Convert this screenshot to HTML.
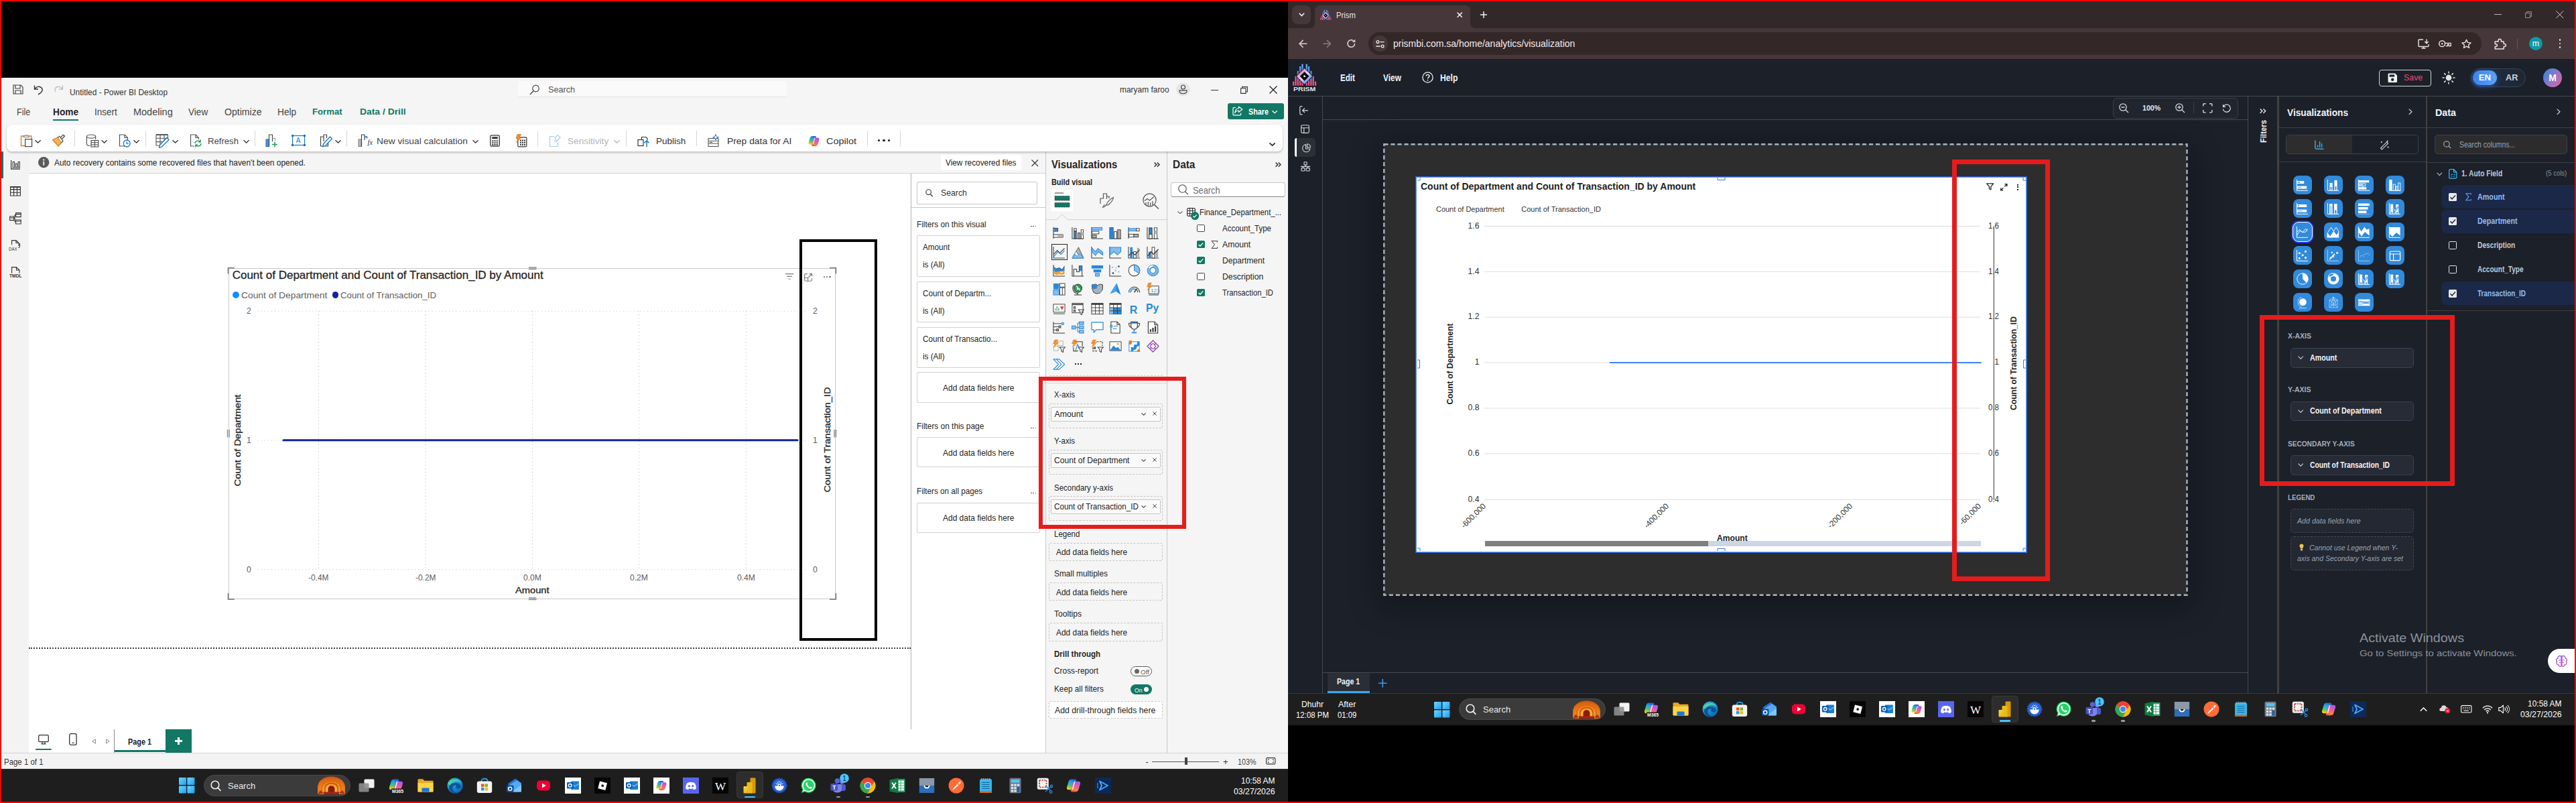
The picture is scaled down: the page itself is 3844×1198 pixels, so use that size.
<!DOCTYPE html>
<html><head><meta charset="utf-8"><title>Power BI vs Prism</title>
<style>
html,body{margin:0;padding:0;background:#000;}
body{width:3844px;height:1198px;position:relative;overflow:hidden;font-family:"Liberation Sans",sans-serif;}
.a{position:absolute;box-sizing:border-box;display:block;}
.t{position:absolute;white-space:nowrap;transform-origin:0 50%;display:block;}
svg{overflow:visible}
</style></head><body>
<div class="a" style="left:0.0px;top:0.0px;width:3844.0px;height:1198.0px;background:#000;"></div>
<div class="a" style="left:2.0px;top:116.0px;width:1920.0px;height:1031.0px;background:#f5f5f5;"></div>
<svg class="a" style="left:18.5px;top:126.0px;" width="16.0" height="15.0" viewBox="0 0 16 15"><path d="M1 1 H12 L15 4 V14 H1 Z M4 1 V6 H11 V1 M4 14 V9 H12 V14" fill="none" stroke="#444" stroke-width="1.2"/></svg>
<svg class="a" style="left:49.5px;top:125.5px;" width="15.0" height="16.0" viewBox="0 0 15 16"><path d="M1.5 1.5 V7 H7 M1.8 6.8 C4 3 9 2 12 5 C15 8.5 12 12.5 7 15" fill="none" stroke="#333" stroke-width="1.4"/></svg>
<svg class="a" style="left:79.5px;top:125.5px;" width="15.0" height="16.0" viewBox="0 0 15 16"><path d="M13.5 1.5 V7 H8 M13.2 6.8 C11 3 6 2 3 5 C1.5 6.8 1.5 9 3 11" fill="none" stroke="#bdbdbd" stroke-width="1.3"/></svg>
<span class="t" style="left:104.2px;top:130.5px;font-size:13px;line-height:13px;color:#333;transform:scaleX(0.915);">Untitled - Power BI Desktop</span>
<div class="a" style="left:772.5px;top:121.0px;width:401.0px;height:24.0px;background:#fafafa;border-radius:3px;border-bottom:1px solid #e3e3e3;"></div>
<svg class="a" style="left:789.5px;top:125.5px;" width="16.0" height="16.0" viewBox="0 0 16 16"><circle cx="9.5" cy="6" r="4.8" fill="none" stroke="#444" stroke-width="1.2"/><path d="M6 9.5 L1 15" stroke="#444" stroke-width="1.3"/></svg>
<span class="t" style="left:818.0px;top:126.9px;font-size:13.5px;line-height:13.5px;color:#555;transform:scaleX(0.935);">Search</span>
<span class="t" style="left:1671.0px;top:128.4px;font-size:12.5px;line-height:12.5px;color:#333;transform:scaleX(0.955);">maryam faroo</span>
<svg class="a" style="left:1754.6px;top:122.6px;" width="21.0" height="21.0" viewBox="0 0 21 21"><circle cx="10.5" cy="10.5" r="10.3" fill="#e6e6e6"/><circle cx="10.5" cy="7" r="3" fill="none" stroke="#444" stroke-width="1.15"/><path d="M5 11.8 H16 V12.8 C16 18 5 18 5 12.8 Z" fill="none" stroke="#444" stroke-width="1.15"/></svg>
<div class="a" style="left:1806.5px;top:133.5px;width:11.0px;height:1.2px;background:#333;"></div>
<svg class="a" style="left:1851.0px;top:129.0px;" width="11.0" height="11.0" viewBox="0 0 11 11"><path d="M0.6 2.8 H8 V10.4 H0.6 Z M2.6 2.6 V0.6 H10.4 V8 H8.2" fill="none" stroke="#333" stroke-width="1.1"/></svg>
<svg class="a" style="left:1894.0px;top:128.0px;" width="12.0" height="12.0" viewBox="0 0 12 12"><path d="M0.5 0.5 L11.5 11.5 M11.5 0.5 L0.5 11.5" stroke="#222" stroke-width="1.3"/></svg>
<span class="t" style="left:25.0px;top:159.7px;font-size:14px;line-height:14px;color:#444;transform:scaleX(0.900);">File</span>
<span class="t" style="left:79.0px;top:159.7px;font-size:14px;line-height:14px;color:#222;font-weight:700;transform:scaleX(0.977);">Home</span>
<div class="a" style="left:79.0px;top:177.6px;width:38.0px;height:2.2px;background:#117865;"></div>
<span class="t" style="left:140.5px;top:159.7px;font-size:14px;line-height:14px;color:#444;transform:scaleX(0.965);">Insert</span>
<span class="t" style="left:198.8px;top:159.7px;font-size:14px;line-height:14px;color:#444;transform:scaleX(1.033);">Modeling</span>
<span class="t" style="left:281.4px;top:159.7px;font-size:14px;line-height:14px;color:#444;transform:scaleX(0.970);">View</span>
<span class="t" style="left:334.6px;top:159.7px;font-size:14px;line-height:14px;color:#444;transform:scaleX(1.007);">Optimize</span>
<span class="t" style="left:414.0px;top:159.7px;font-size:14px;line-height:14px;color:#444;transform:scaleX(0.979);">Help</span>
<span class="t" style="left:465.5px;top:159.9px;font-size:13.6px;line-height:13.6px;color:#117865;font-weight:700;transform:scaleX(0.970);">Format</span>
<span class="t" style="left:536.5px;top:159.9px;font-size:13.6px;line-height:13.6px;color:#117865;font-weight:700;transform:scaleX(1.021);">Data / Drill</span>
<div class="a" style="left:1832.0px;top:154.0px;width:84.0px;height:24.0px;background:#117865;border-radius:3px;"></div>
<svg class="a" style="left:1839.0px;top:158.0px;" width="16.0" height="15.0" viewBox="0 0 16 15"><path d="M5 2.5 H2 C1.2 2.5 1 3 1 3.5 V12.5 C1 13.3 1.5 13.8 2.2 13.8 H11.5 C12.3 13.8 12.7 13.3 12.7 12.5 V10.5" fill="none" stroke="#fff" stroke-width="1.2"/><path d="M9.5 1 L14.8 5.2 L9.5 9.4 V7 C6.5 7 5 8 3.8 10.5 C4 6.5 6 3.8 9.5 3.5 Z" fill="none" stroke="#fff" stroke-width="1.2" stroke-linejoin="round"/></svg>
<span class="t" style="left:1863.0px;top:160.2px;font-size:13.5px;line-height:13.5px;color:#fff;font-weight:700;transform:scaleX(0.800);">Share</span>
<svg class="a" style="left:1898.3px;top:164.9px;" width="8.4" height="4.2" viewBox="0 0 8.4 4.2"><path d="M0.5 0.3 L4.2 3.7 L7.9 0.3" fill="none" stroke="#fff" stroke-width="1.3"/></svg>
<div class="a" style="left:43.0px;top:226.3px;width:1879.0px;height:32.0px;background:#f5f5f5;"></div>
<div class="a" style="left:43.0px;top:258.0px;width:1879.0px;height:1.0px;background:#d4d4d4;"></div>
<svg class="a" style="left:56.8px;top:234.3px;" width="16.4" height="16.4" viewBox="0 0 16.4 16.4"><circle cx="8.2" cy="8.2" r="8.2" fill="#5a5a5a"/><rect x="7.3" y="6.8" width="1.9" height="6" fill="#e8e8e8"/><circle cx="8.2" cy="4.4" r="1.2" fill="#e8e8e8"/></svg>
<span class="t" style="left:81.3px;top:237.2px;font-size:12.3px;line-height:12.3px;color:#222;transform:scaleX(0.968);">Auto recovery contains some recovered files that haven&#x27;t been opened.</span>
<div class="a" style="left:1403.7px;top:231.0px;width:120.5px;height:23.3px;background:#fff;border-radius:2px;"></div>
<span class="t" style="left:1410.7px;top:237.2px;font-size:12.3px;line-height:12.3px;color:#222;transform:scaleX(0.961);">View recovered files</span>
<svg class="a" style="left:1539.0px;top:237.5px;" width="10.5" height="10.5" viewBox="0 0 10.5 10.5"><path d="M0.5 0.5 L10 10 M10 0.5 L0.5 10" stroke="#333" stroke-width="1.1"/></svg>
<div class="a" style="left:2.0px;top:226.3px;width:41.0px;height:897.0px;background:#f3f3f3;"></div>
<div class="a" style="left:2.0px;top:226.3px;width:3.0px;height:39.5px;background:#117865;"></div>
<svg class="a" style="left:16.0px;top:239.3px;" width="14.0" height="14.0" viewBox="0 0 14 14"><path d="M0.6 0 V13.2 H14" fill="none" stroke="#333" stroke-width="1.2"/><rect x="3.2" y="2.5" width="2.4" height="8.5" fill="none" stroke="#333" stroke-width="1"/><rect x="7.3" y="5.2" width="2.4" height="5.8" fill="none" stroke="#333" stroke-width="1"/><rect x="11.2" y="2.5" width="2.2" height="8.5" fill="none" stroke="#333" stroke-width="1"/></svg>
<svg class="a" style="left:15.4px;top:277.8px;" width="16.0" height="14.6" viewBox="0 0 16 14.6"><path d="M0.6 0.6 H15.4 V14 H0.6 Z M0.6 4.6 H15.4 M0.6 9.3 H15.4 M5.6 0.6 V14 M10.5 0.6 V14" fill="none" stroke="#333" stroke-width="1.15"/><path d="M0.6 1 H15.4" stroke="#333" stroke-width="1.6"/></svg>
<svg class="a" style="left:14.2px;top:317.0px;" width="18.0" height="17.6" viewBox="0 0 18 17.6"><path d="M0.6 6 H6.6 V11.6 H0.6 Z M0.6 8 H6.6 M9.6 0.6 H17.2 V6.6 H9.6 Z M9.6 2.6 H17.2 M9.6 11 H17.2 V17 H9.6 Z M9.6 13 H17.2 M6.6 8.8 H8 M8 3.6 V14 M8 3.6 H9.6 M8 14 H9.6" fill="none" stroke="#333" stroke-width="1.1"/></svg>
<svg class="a" style="left:17.0px;top:358.0px;" width="13.5" height="12.0" viewBox="0 0 13.5 12"><path d="M0.6 7 V0.6 H7 L11 4.5 V9 M7 0.6 V4.5 H11 M12.5 5 V9.5 C12.5 10.8 11.5 11.5 10.5 11.8" fill="none" stroke="#333" stroke-width="1.1"/></svg>
<span class="t" style="left:13.0px;top:369.0px;font-size:6.3px;line-height:6.3px;color:#333;transform:scaleX(0.965);">DAX</span>
<svg class="a" style="left:17.2px;top:398.0px;" width="13.0" height="10.0" viewBox="0 0 13 10"><path d="M0.6 9.5 V0.6 H7.5 L12 5 V9.5 M7.5 0.6 V5 H12" fill="none" stroke="#333" stroke-width="1.1"/></svg>
<span class="t" style="left:13.7px;top:408.9px;font-size:6.5px;line-height:6.5px;color:#333;font-weight:700;transform:scaleX(1.036);">TMDL</span>
<div class="a" style="left:43.0px;top:258.6px;width:1316.5px;height:829.4px;background:#fff;"></div>
<div class="a" style="left:43px;top:966px;width:1316px;height:0;border-top:2px dotted #3c3c3c;"></div>
<div class="a" style="left:340.5px;top:400.0px;width:906.5px;height:493.5px;background:#fff;border:1px solid #c8c8c8;"></div>
<span class="t" style="left:346.7px;top:402.3px;font-size:17px;line-height:17px;color:#252423;-webkit-text-stroke:0.28px #252423;">Count of Department and Count of Transaction_ID by Amount</span>
<div class="a" style="left:347.4px;top:435.2px;width:9.6px;height:9.6px;background:#118dff;border-radius:5px;"></div>
<span class="t" style="left:360.0px;top:434.2px;font-size:13.2px;line-height:13.2px;color:#605e5c;transform:scaleX(1.048);">Count of Department</span>
<div class="a" style="left:495.7px;top:435.2px;width:9.6px;height:9.6px;background:#12239e;border-radius:5px;"></div>
<span class="t" style="left:507.8px;top:434.2px;font-size:13.2px;line-height:13.2px;color:#605e5c;transform:scaleX(1.006);">Count of Transaction_ID</span>
<svg class="a" style="left:0.0px;top:0.0px;" width="1922.0" height="1198.0" viewBox="0 0 1922 1198"><path d="M384.5 464.2 H1204" stroke="#c4c4c4" stroke-width="1.1" stroke-dasharray="1.1 4"/><path d="M384.5 657 H1204" stroke="#c4c4c4" stroke-width="1.1" stroke-dasharray="1.1 4"/><path d="M384.5 849.8 H1204" stroke="#c4c4c4" stroke-width="1.1" stroke-dasharray="1.1 4"/><path d="M475.5 464.2 V849.8" stroke="#c4c4c4" stroke-width="1.1" stroke-dasharray="1.1 4"/><path d="M635 464.2 V849.8" stroke="#c4c4c4" stroke-width="1.1" stroke-dasharray="1.1 4"/><path d="M794.6 464.2 V849.8" stroke="#c4c4c4" stroke-width="1.1" stroke-dasharray="1.1 4"/><path d="M953.9 464.2 V849.8" stroke="#c4c4c4" stroke-width="1.1" stroke-dasharray="1.1 4"/><path d="M1113.4 464.2 V849.8" stroke="#c4c4c4" stroke-width="1.1" stroke-dasharray="1.1 4"/><path d="M423 656.8 H1190" stroke="#12239e" stroke-width="3" stroke-linecap="round"/></svg>
<span class="t" style="left:368.0px;top:458.3px;font-size:12.2px;line-height:12.2px;color:#605e5c;">2</span>
<span class="t" style="left:1213.0px;top:458.3px;font-size:12.2px;line-height:12.2px;color:#605e5c;">2</span>
<span class="t" style="left:368.0px;top:651.3px;font-size:12.2px;line-height:12.2px;color:#605e5c;">1</span>
<span class="t" style="left:1213.0px;top:651.3px;font-size:12.2px;line-height:12.2px;color:#605e5c;">1</span>
<span class="t" style="left:368.0px;top:844.3px;font-size:12.2px;line-height:12.2px;color:#605e5c;">0</span>
<span class="t" style="left:1213.0px;top:844.3px;font-size:12.2px;line-height:12.2px;color:#605e5c;">0</span>
<span class="t" style="left:460.2px;top:856.2px;font-size:12.2px;line-height:12.2px;color:#605e5c;transform:scaleX(0.978);">-0.4M</span>
<span class="t" style="left:619.8px;top:856.2px;font-size:12.2px;line-height:12.2px;color:#605e5c;transform:scaleX(0.978);">-0.2M</span>
<span class="t" style="left:781.1px;top:856.2px;font-size:12.2px;line-height:12.2px;color:#605e5c;transform:scaleX(0.995);">0.0M</span>
<span class="t" style="left:940.4px;top:856.2px;font-size:12.2px;line-height:12.2px;color:#605e5c;transform:scaleX(0.995);">0.2M</span>
<span class="t" style="left:1099.9px;top:856.2px;font-size:12.2px;line-height:12.2px;color:#605e5c;transform:scaleX(0.995);">0.4M</span>
<span class="t" style="left:768.6px;top:874.3px;font-size:13.6px;line-height:13.6px;color:#252423;transform:scaleX(1.080);-webkit-text-stroke:0.3px #252423;">Amount</span>
<span class="t" style="left:355.3px;top:656.5px;font-size:13.4px;line-height:13.4px;color:#252423;transform:translate(-50%,-50%) rotate(-90deg) scaleX(1.101);transform-origin:50% 50%;-webkit-text-stroke:0.3px #252423;">Count of Department</span>
<span class="t" style="left:1235.0px;top:656.0px;font-size:13.4px;line-height:13.4px;color:#252423;transform:translate(-50%,-50%) rotate(-90deg) scaleX(1.086);transform-origin:50% 50%;-webkit-text-stroke:0.3px #252423;">Count of Transaction_ID</span>
<svg class="a" style="left:1172.0px;top:408.3px;" width="12.2" height="9.0" viewBox="0 0 12.2 9"><path d="M0 0.6 H12.2 M2.4 4.4 H9.8 M4.6 8.3 H7.6" stroke="#777" stroke-width="1.1"/></svg>
<svg class="a" style="left:1200.0px;top:408.3px;" width="12.2" height="11.8" viewBox="0 0 12.2 11.8"><path d="M5 0.6 H2.4 C1.2 0.6 0.6 1.4 0.6 2.4 V9.6 C0.6 10.8 1.4 11.2 2.4 11.2 H9.8 C10.8 11.2 11.6 10.6 11.6 9.6 V7 M0.6 6.5 H5.6 V11.2 M7.5 0.6 H11.6 V4.6 M11.6 0.6 L6.2 6" fill="none" stroke="#777" stroke-width="1.1"/></svg>
<div class="a" style="left:1228.8px;top:412.0px;width:2.4px;height:2.4px;background:#666;border-radius:1.2px;"></div>
<div class="a" style="left:1233.0px;top:412.0px;width:2.4px;height:2.4px;background:#666;border-radius:1.2px;"></div>
<div class="a" style="left:1237.2px;top:412.0px;width:2.4px;height:2.4px;background:#666;border-radius:1.2px;"></div>
<svg class="a" style="left:0.0px;top:0.0px;" width="1922.0" height="1198.0" viewBox="0 0 1922 1198"><path d="M340.6 408.5 V399.8 H349.8 M1238 399.8 H1247.3 V408.5 M340.6 885 V894 H349.8 M1238 894 H1247.3 V885" fill="none" stroke="#8a8a8a" stroke-width="2"/><path d="M789 399 H800.5 M789 401.5 H800.5 M789 892 H800.5 M789 894.5 H800.5 M339.5 641 V652.5 M342 641 V652.5 M1245 641 V652.5 M1247.5 641 V652.5" stroke="#8a8a8a" stroke-width="1.4"/></svg>
<div class="a" style="left:1193.0px;top:357.3px;width:115.8px;height:599.0px;border:4px solid #000;"></div>
<div class="a" style="left:43.0px;top:1088.0px;width:1517.5px;height:35.3px;background:#fff;"></div>
<svg class="a" style="left:57.0px;top:1096.0px;" width="16.0" height="15.0" viewBox="0 0 16 15"><rect x="0.7" y="0.7" width="14.6" height="10" rx="1.6" fill="none" stroke="#333" stroke-width="1.3"/><path d="M4.5 13.8 H11.5 M6 11 V13.5 M10 11 V13.5" stroke="#333" stroke-width="1.2"/></svg>
<div class="a" style="left:53.0px;top:1116.6px;width:24.0px;height:2.6px;background:#117865;border-radius:1.3px;"></div>
<svg class="a" style="left:103.2px;top:1094.0px;" width="12.0" height="18.0" viewBox="0 0 12 18"><rect x="0.7" y="0.7" width="10.4" height="16.6" rx="2.2" fill="none" stroke="#333" stroke-width="1.3"/><path d="M4.4 14.3 H7.6" stroke="#333" stroke-width="1.2"/></svg>
<svg class="a" style="left:136.6px;top:1102.3px;" width="6.0" height="8.0" viewBox="0 0 6 8"><path d="M5.4 0.8 V7.2 L0.8 4 Z" fill="none" stroke="#777" stroke-width="0.9"/></svg>
<svg class="a" style="left:157.6px;top:1102.3px;" width="6.0" height="8.0" viewBox="0 0 6 8"><path d="M0.6 0.8 V7.2 L5.2 4 Z" fill="none" stroke="#777" stroke-width="0.9"/></svg>
<div class="a" style="left:170.0px;top:1088.0px;width:1.0px;height:35.0px;background:#8a8a8a;"></div>
<div class="a" style="left:170.5px;top:1119.3px;width:76.0px;height:3.2px;background:#117865;"></div>
<span class="t" style="left:191.0px;top:1101.0px;font-size:12.6px;line-height:12.6px;color:#222;font-weight:700;transform:scaleX(0.862);">Page 1</span>
<div class="a" style="left:247.0px;top:1088.3px;width:39.2px;height:34.4px;background:#117865;"></div>
<div class="a" style="left:260.7px;top:1104.1px;width:11.6px;height:2.6px;background:#fff;"></div>
<div class="a" style="left:265.2px;top:1099.6px;width:2.6px;height:11.6px;background:#fff;"></div>
<div class="a" style="left:2.0px;top:1123.3px;width:1920.0px;height:24.0px;background:#f3f3f3;border-top:1px solid #d4d4d4;"></div>
<span class="t" style="left:6.2px;top:1131.0px;font-size:12.4px;line-height:12.4px;color:#333;transform:scaleX(0.924);">Page 1 of 1</span>
<span class="t" style="left:1709.5px;top:1129.8px;font-size:13px;line-height:13px;color:#333;">-</span>
<div class="a" style="left:1719.0px;top:1135.7px;width:100.0px;height:1.0px;background:#555;"></div>
<div class="a" style="left:1768.0px;top:1129.8px;width:3.6px;height:11.0px;background:#444;"></div>
<span class="t" style="left:1825.0px;top:1130.1px;font-size:13px;line-height:13px;color:#333;transform:scaleX(1.014);">+</span>
<span class="t" style="left:1847.0px;top:1130.6px;font-size:12.4px;line-height:12.4px;color:#444;transform:scaleX(0.870);">103%</span>
<svg class="a" style="left:1889.0px;top:1130.3px;" width="14.5" height="10.5" viewBox="0 0 14.5 10.5"><rect x="0.6" y="0.6" width="13.3" height="9.3" rx="1.5" fill="none" stroke="#333" stroke-width="1.1"/><path d="M3.2 4.4 V3 H4.8 M9.8 3 H11.3 V4.4 M3.2 6.2 V7.6 H4.8 M9.8 7.6 H11.3 V6.2" fill="none" stroke="#333" stroke-width="1"/></svg>
<div class="a" style="left:1358.6px;top:258.6px;width:202.0px;height:829.4px;background:#fff;border-left:1px solid #b0b0b0;"></div>
<div class="a" style="left:1368.0px;top:271.3px;width:180.2px;height:33.6px;background:#fff;border:1px solid #c8c8c8;border-radius:2px;"></div>
<svg class="a" style="left:1381.0px;top:282.0px;" width="12.0" height="12.5" viewBox="0 0 12 12.5"><circle cx="4.6" cy="4.6" r="3.8" fill="none" stroke="#333" stroke-width="1.1"/><path d="M7.2 7.4 L10.8 11.2" stroke="#333" stroke-width="1.3"/></svg>
<span class="t" style="left:1403.7px;top:282.4px;font-size:12.8px;line-height:12.8px;color:#333;transform:scaleX(0.959);">Search</span>
<div class="a" style="left:1359.6px;top:309.2px;width:201.0px;height:1.0px;background:#c8c8c8;"></div>
<span class="t" style="left:1368.0px;top:328.8px;font-size:12.6px;line-height:12.6px;color:#252423;transform:scaleX(0.937);">Filters on this visual</span>
<div class="a" style="left:1538.0px;top:336.8px;width:1.5px;height:1.5px;background:#555;"></div>
<div class="a" style="left:1541.4px;top:336.8px;width:1.5px;height:1.5px;background:#555;"></div>
<div class="a" style="left:1544.8px;top:336.8px;width:1.5px;height:1.5px;background:#555;"></div>
<div class="a" style="left:1368.0px;top:351.2px;width:183.6px;height:61.4px;background:#fff;border:1px solid #d2d0ce;border-radius:2px;"></div>
<span class="t" style="left:1377.0px;top:363.2px;font-size:12.6px;line-height:12.6px;color:#252423;transform:scaleX(0.930);">Amount</span>
<span class="t" style="left:1377.0px;top:389.2px;font-size:12.6px;line-height:12.6px;color:#252423;transform:scaleX(0.930);">is (All)</span>
<div class="a" style="left:1368.0px;top:419.6px;width:183.6px;height:61.0px;background:#fff;border:1px solid #d2d0ce;border-radius:2px;"></div>
<span class="t" style="left:1377.0px;top:431.6px;font-size:12.6px;line-height:12.6px;color:#252423;transform:scaleX(0.930);">Count of Departm...</span>
<span class="t" style="left:1377.0px;top:457.6px;font-size:12.6px;line-height:12.6px;color:#252423;transform:scaleX(0.930);">is (All)</span>
<div class="a" style="left:1368.0px;top:487.5px;width:183.6px;height:61.0px;background:#fff;border:1px solid #d2d0ce;border-radius:2px;"></div>
<span class="t" style="left:1377.0px;top:499.5px;font-size:12.6px;line-height:12.6px;color:#252423;transform:scaleX(0.930);">Count of Transactio...</span>
<span class="t" style="left:1377.0px;top:525.5px;font-size:12.6px;line-height:12.6px;color:#252423;transform:scaleX(0.930);">is (All)</span>
<div class="a" style="left:1368.0px;top:555.4px;width:183.6px;height:45.4px;background:#fff;border:1px solid #d2d0ce;border-radius:2px;"></div>
<span class="t" style="left:1406.8px;top:573.2px;font-size:12.6px;line-height:12.6px;color:#252423;transform:scaleX(0.950);">Add data fields here</span>
<span class="t" style="left:1368.0px;top:630.0px;font-size:12.6px;line-height:12.6px;color:#252423;transform:scaleX(0.942);">Filters on this page</span>
<div class="a" style="left:1538.0px;top:637.8px;width:1.5px;height:1.5px;background:#555;"></div>
<div class="a" style="left:1541.4px;top:637.8px;width:1.5px;height:1.5px;background:#555;"></div>
<div class="a" style="left:1544.8px;top:637.8px;width:1.5px;height:1.5px;background:#555;"></div>
<div class="a" style="left:1368.0px;top:652.4px;width:183.6px;height:45.0px;background:#fff;border:1px solid #d2d0ce;border-radius:2px;"></div>
<span class="t" style="left:1406.8px;top:670.0px;font-size:12.6px;line-height:12.6px;color:#252423;transform:scaleX(0.950);">Add data fields here</span>
<span class="t" style="left:1368.0px;top:726.9px;font-size:12.6px;line-height:12.6px;color:#252423;transform:scaleX(0.929);">Filters on all pages</span>
<div class="a" style="left:1538.0px;top:734.8px;width:1.5px;height:1.5px;background:#555;"></div>
<div class="a" style="left:1541.4px;top:734.8px;width:1.5px;height:1.5px;background:#555;"></div>
<div class="a" style="left:1544.8px;top:734.8px;width:1.5px;height:1.5px;background:#555;"></div>
<div class="a" style="left:1368.0px;top:749.5px;width:183.6px;height:45.0px;background:#fff;border:1px solid #d2d0ce;border-radius:2px;"></div>
<span class="t" style="left:1406.8px;top:767.1px;font-size:12.6px;line-height:12.6px;color:#252423;transform:scaleX(0.950);">Add data fields here</span>
<div class="a" style="left:1560.0px;top:226.3px;width:182.0px;height:897.0px;background:#f5f5f5;border-left:1px solid #c8c8c8;border-right:1px solid #c8c8c8;"></div>
<span class="t" style="left:1569.4px;top:237.6px;font-size:15.6px;line-height:15.6px;color:#252423;font-weight:700;transform:scaleX(0.948);">Visualizations</span>
<svg class="a" style="left:1722.0px;top:241.7px;" width="9.0" height="7.2" viewBox="0 0 9 7.2"><path d="M0.6 0.5 L3.8 3.6 L0.6 6.7 M4.8 0.5 L8 3.6 L4.8 6.7" fill="none" stroke="#333" stroke-width="1.5"/></svg>
<span class="t" style="left:1569.4px;top:266.4px;font-size:12.4px;line-height:12.4px;color:#252423;font-weight:700;transform:scaleX(0.879);">Build visual</span>
<div class="a" style="left:1569.0px;top:283.2px;width:32.0px;height:31.8px;background:#fff;"></div>
<svg class="a" style="left:1573.0px;top:287.0px;" width="24.0" height="24.0" viewBox="0 0 24 24"><path d="M1 1 H14" stroke="#333" stroke-width="1"/><rect x="1" y="5.5" width="22" height="6.5" fill="#117865" stroke="#333" stroke-width="0.9" stroke-dasharray="1.5 1"/><rect x="1" y="15.5" width="22" height="6.5" fill="#117865" stroke="#333" stroke-width="0.9" stroke-dasharray="1.5 1"/></svg>
<svg class="a" style="left:1640.7px;top:288.0px;" width="23.0" height="23.0" viewBox="0 0 23 23"><path d="M1 16 V8 H5.5 V1 H10.5 V9 M10.5 5 H14 V8" fill="none" stroke="#555" stroke-width="1.2"/><path d="M20.5 6.5 C15 9 11 14 10 17.5 C12 18.5 13.5 17.5 14 16.5 C17 14 20 10.5 20.5 6.5 Z" fill="#f5f5f5" stroke="#555" stroke-width="1.1"/><path d="M10 17.5 C8.5 19 7.5 21.5 4 21.5 C6 20.5 6.5 18.5 7 17" fill="none" stroke="#555" stroke-width="1.1"/></svg>
<svg class="a" style="left:1704.9px;top:288.0px;" width="25.0" height="24.0" viewBox="0 0 25 24"><circle cx="10.5" cy="10.5" r="9.6" fill="none" stroke="#555" stroke-width="1.2"/><path d="M17.5 17.5 L24 23.5" stroke="#555" stroke-width="1.6"/><path d="M3 11.5 L7 8.5 L10.5 11 L17 5.5" fill="none" stroke="#555" stroke-width="1.2"/><path d="M5 14 V18 M8.3 13 V19.3 M11.6 14 V19.6 M14.9 12 V18.6" stroke="#555" stroke-width="1.2"/></svg>
<svg class="a" style="left:1561.0px;top:319.0px;" width="180.0" height="10.0" viewBox="0 0 180 10"><path d="M0 8.7 H16 L24 1 L32 8.7 H180" fill="none" stroke="#d0d0d0" stroke-width="1"/></svg>
<svg class="a" style="left:1571.2px;top:338.3px;" width="19.0" height="19.0" viewBox="0 0 20 20"><path d="M1 1 V19" fill="none" stroke="#3b3a39" stroke-width="1.1"/><rect x="1.5" y="3" width="6" height="4" fill="#2b88d8"/><rect x="1.5" y="8" width="9" height="0.1" fill="#2b88d8"/><path d="M1 2.5 H8 V7.5 H1 M1 12.5 H16 V17 H1" fill="none" stroke="#3b3a39" stroke-width="1"/><rect x="7.5" y="12.5" width="8.5" height="4.5" fill="#b3b0ad"/></svg>
<svg class="a" style="left:1599.2px;top:338.3px;" width="19.0" height="19.0" viewBox="0 0 20 20"><path d="M1 1 V19 H19" fill="none" stroke="#3b3a39" stroke-width="1.1"/><rect x="4" y="7" width="3.5" height="12" fill="#2b88d8" stroke="#3b3a39" stroke-width="1"/><rect x="4" y="3" width="3.5" height="4" fill="#fff" stroke="#3b3a39" stroke-width="1"/><rect x="10" y="10" width="3.5" height="9" fill="#b3b0ad" stroke="#3b3a39" stroke-width="1"/><rect x="15" y="5" width="3.5" height="14" fill="#fff" stroke="#3b3a39" stroke-width="1"/><rect x="15" y="9" width="3.5" height="5" fill="#b3b0ad"/></svg>
<svg class="a" style="left:1627.5px;top:338.3px;" width="19.0" height="19.0" viewBox="0 0 20 20"><path d="M1 1 V19" fill="none" stroke="#3b3a39" stroke-width="1.1"/><rect x="1.5" y="1.5" width="16" height="4" fill="#83beec" stroke="#2b88d8" stroke-width="1"/><rect x="1.5" y="7.5" width="11" height="4" fill="#fff" stroke="#3b3a39" stroke-width="1"/><rect x="1.5" y="13.5" width="7" height="4" fill="#b3b0ad" stroke="#3b3a39" stroke-width="1"/><path d="M1 19 H19" fill="none" stroke="#3b3a39" stroke-width="1.1"/></svg>
<svg class="a" style="left:1655.4px;top:338.3px;" width="19.0" height="19.0" viewBox="0 0 20 20"><path d="M1 1 V19 H19" fill="none" stroke="#3b3a39" stroke-width="1.1"/><rect x="2" y="1.5" width="4.5" height="17.5" fill="#2b88d8" stroke="#1a66c0" stroke-width="1"/><rect x="8" y="8" width="4" height="11" fill="#fff" stroke="#3b3a39" stroke-width="1"/><rect x="13.5" y="5" width="4.5" height="14" fill="#b3b0ad" stroke="#3b3a39" stroke-width="1"/></svg>
<svg class="a" style="left:1683.1px;top:338.3px;" width="19.0" height="19.0" viewBox="0 0 20 20"><path d="M1 1 V19" fill="none" stroke="#3b3a39" stroke-width="1.1"/><rect x="1.5" y="3" width="12" height="4" fill="#83beec" stroke="#2b88d8" stroke-width="1"/><rect x="13.5" y="3" width="4.5" height="4" fill="#fff" stroke="#3b3a39" stroke-width="1"/><rect x="1.5" y="12" width="8" height="4.5" fill="#fff" stroke="#3b3a39" stroke-width="1"/><rect x="9.5" y="12" width="7" height="4.5" fill="#b3b0ad" stroke="#3b3a39" stroke-width="1"/></svg>
<svg class="a" style="left:1711.4px;top:338.3px;" width="19.0" height="19.0" viewBox="0 0 20 20"><path d="M1 1 V19 H19" fill="none" stroke="#3b3a39" stroke-width="1.1"/><rect x="4" y="2" width="4.5" height="17" fill="#2b88d8" stroke="#3b3a39" stroke-width="1"/><rect x="4" y="12" width="4.5" height="7" fill="#fff" stroke="#3b3a39" stroke-width="1"/><rect x="12" y="2" width="4.5" height="17" fill="#fff" stroke="#3b3a39" stroke-width="1"/><rect x="12" y="6" width="4.5" height="6" fill="#b3b0ad"/></svg>
<svg class="a" style="left:1571.2px;top:366.7px;" width="19.0" height="19.0" viewBox="0 0 20 20"><path d="M1 1 V19 H19" fill="none" stroke="#3b3a39" stroke-width="1.1"/><path d="M1.5 13 L7 7 L11 11 L18.5 3.5" fill="none" stroke="#3b3a39" stroke-width="1.2"/><path d="M1.5 17 L8 9 L13 13 L18.5 7" fill="none" stroke="#2b88d8" stroke-width="1.2"/></svg>
<svg class="a" style="left:1599.2px;top:366.7px;" width="19.0" height="19.0" viewBox="0 0 20 20"><path d="M1 19 L11 2 L19 19 Z" fill="#b3b0ad" stroke="#3b3a39" stroke-width="0.8"/><path d="M1 19 L7 8 L14 19 Z" fill="#fff" stroke="#2b88d8" stroke-width="1"/><path d="M1 19 L5 13 L9 16 L13 12 L19 19 Z" fill="#83beec" stroke="#2b88d8" stroke-width="1"/></svg>
<svg class="a" style="left:1627.5px;top:366.7px;" width="19.0" height="19.0" viewBox="0 0 20 20"><path d="M1 1 V19 H19" fill="none" stroke="#3b3a39" stroke-width="1.1"/><path d="M1.5 3 L7 9 L11 4 L18.5 10 V14 L11 9 L7 15 L1.5 9 Z" fill="#83beec" stroke="#2b88d8" stroke-width="1.1"/></svg>
<svg class="a" style="left:1655.4px;top:366.7px;" width="19.0" height="19.0" viewBox="0 0 20 20"><path d="M1 1 V19 H19" fill="none" stroke="#3b3a39" stroke-width="1.1"/><path d="M1.5 2 H18.5 V9 L13 14 L8 9 L1.5 14 Z" fill="#83beec" stroke="#2b88d8" stroke-width="1.1"/></svg>
<svg class="a" style="left:1683.1px;top:366.7px;" width="19.0" height="19.0" viewBox="0 0 20 20"><path d="M1 1 V19 H19" fill="none" stroke="#3b3a39" stroke-width="1.1"/><rect x="3.5" y="2" width="4" height="17" fill="#2b88d8"/><rect x="9" y="9" width="4" height="10" fill="#fff" stroke="#3b3a39" stroke-width="1"/><rect x="14.5" y="3" width="3.5" height="16" fill="#b3b0ad"/><path d="M1.5 15 L7 10 L11 14 L18.5 6" fill="none" stroke="#3b3a39" stroke-width="1.3"/></svg>
<svg class="a" style="left:1711.4px;top:366.7px;" width="19.0" height="19.0" viewBox="0 0 20 20"><path d="M1 1 V19 H19" fill="none" stroke="#3b3a39" stroke-width="1.1"/><rect x="3" y="9" width="4" height="10" fill="#2b88d8"/><rect x="8.5" y="2" width="4" height="17" fill="#fff" stroke="#3b3a39" stroke-width="1"/><rect x="14" y="7" width="4" height="12" fill="#b3b0ad"/><path d="M1.5 16 L7 9 L11 13 L18.5 5" fill="none" stroke="#3b3a39" stroke-width="1.3"/></svg>
<svg class="a" style="left:1571.2px;top:394.4px;" width="19.0" height="19.0" viewBox="0 0 20 20"><path d="M1 1 V19 H19" fill="none" stroke="#3b3a39" stroke-width="1.1"/><path d="M1.5 4 C6 12 9 2 13 8 C15 10 17 5 18.5 3 V10 C15 14 12 9 9 14 C6 17 4 10 1.5 12 Z" fill="#2b88d8"/><path d="M1.5 9 C5 17 9 8 12 13 C15 16 17 10 18.5 9 V15 C14 19 10 14 7 17 C5 18 3 15 1.5 15 Z" fill="#e8a33d"/><path d="M1.5 4 C6 12 9 2 13 8 C15 10 17 5 18.5 3" fill="none" stroke="#3b3a39" stroke-width="1"/></svg>
<svg class="a" style="left:1599.2px;top:394.4px;" width="19.0" height="19.0" viewBox="0 0 20 20"><path d="M1 1 V19 H19" fill="none" stroke="#3b3a39" stroke-width="1.1"/><path d="M3.5 19 V8 H8 V12 H12 V3 H16.5 V19" fill="none" stroke="#3b3a39" stroke-width="1.1"/><rect x="12.5" y="3" width="3.5" height="8" fill="#2b88d8"/></svg>
<svg class="a" style="left:1627.5px;top:394.4px;" width="19.0" height="19.0" viewBox="0 0 20 20"><rect x="1" y="2" width="18" height="5" fill="#2b88d8"/><rect x="4" y="8.5" width="12" height="4.5" fill="#2b88d8"/><rect x="7" y="14.5" width="6" height="4.5" fill="#83beec" stroke="#2b88d8" stroke-width="1"/></svg>
<svg class="a" style="left:1655.4px;top:394.4px;" width="19.0" height="19.0" viewBox="0 0 20 20"><path d="M1 1 V19 H19" fill="none" stroke="#3b3a39" stroke-width="1.1"/><rect x="4" y="4" width="2.2" height="2.2" fill="#83beec"/><rect x="9" y="9" width="2.2" height="2.2" fill="#83beec"/><rect x="14" y="2.5" width="2.4" height="2.4" fill="#3b3a39"/><rect x="5" y="13" width="2.4" height="2.4" fill="#3b3a39"/><rect x="14" y="11" width="2.2" height="2.2" fill="#83beec"/><rect x="10" y="5" width="1.8" height="1.8" fill="#83beec"/></svg>
<svg class="a" style="left:1683.1px;top:394.4px;" width="19.0" height="19.0" viewBox="0 0 20 20"><circle cx="10" cy="10" r="8.8" fill="#fff" stroke="#3b3a39" stroke-width="1.1"/><path d="M10 10 V1.2 A8.8 8.8 0 0 1 17.5 14.5 Z" fill="#83beec" stroke="#2b88d8" stroke-width="1"/></svg>
<svg class="a" style="left:1711.4px;top:394.4px;" width="19.0" height="19.0" viewBox="0 0 20 20"><circle cx="10" cy="10" r="6.6" fill="none" stroke="#2b88d8" stroke-width="4.2"/><circle cx="10" cy="10" r="6.6" fill="none" stroke="#83beec" stroke-width="2.8"/><path d="M3 6 A8 8 0 0 1 10 1.5" fill="none" stroke="#fff" stroke-width="4.4"/><circle cx="10" cy="10" r="8.8" fill="none" stroke="#2b88d8" stroke-width="0.9"/><circle cx="10" cy="10" r="4.4" fill="none" stroke="#2b88d8" stroke-width="0.9"/></svg>
<svg class="a" style="left:1571.2px;top:422.4px;" width="19.0" height="19.0" viewBox="0 0 20 20"><rect x="1" y="1" width="9" height="9" fill="#2b88d8"/><rect x="1" y="11" width="9" height="8" fill="#83beec" stroke="#2b88d8" stroke-width="1"/><rect x="11" y="1" width="8" height="5.5" fill="#fff" stroke="#3b3a39" stroke-width="1"/><rect x="11" y="7.5" width="8" height="11.5" fill="#fff" stroke="#3b3a39" stroke-width="1"/><path d="M15 7.5 V19" stroke="#3b3a39" stroke-width="1"/></svg>
<svg class="a" style="left:1599.2px;top:422.4px;" width="19.0" height="19.0" viewBox="0 0 20 20"><circle cx="10" cy="8.5" r="6.3" fill="#2e9e57" stroke="#3b3a39" stroke-width="1.1"/><path d="M7 5 L10 7 L9 10 L12 9 L13 12" fill="none" stroke="#fff" stroke-width="1.3"/><path d="M4 3 A8.5 8.5 0 0 0 10 17 M4 19 H16 M10 15 V19" fill="none" stroke="#3b3a39" stroke-width="1.1"/></svg>
<svg class="a" style="left:1627.5px;top:422.4px;" width="19.0" height="19.0" viewBox="0 0 20 20"><path d="M1.5 3 L8 2 L10 4 L14 2 L18.5 3 L18 11 L14 16 L9 17 L4 15 L2 10 Z" fill="#b3b0ad" stroke="#3b3a39" stroke-width="1"/><path d="M1.5 3 L8 2 L10 4 L9 9 L4 10 L2 8 Z" fill="#2b88d8"/><path d="M12 11 L17 9 L16 14 L12 16 Z" fill="#83beec"/></svg>
<svg class="a" style="left:1655.4px;top:422.4px;" width="19.0" height="19.0" viewBox="0 0 20 20"><path d="M12 0.5 L18.5 19 L11 13.5 L1.5 17 Z" fill="#2b88d8"/><path d="M12 0.5 L11 13.5 L1.5 17 Z" fill="#41a5ee"/></svg>
<svg class="a" style="left:1683.1px;top:422.4px;" width="19.0" height="19.0" viewBox="0 0 20 20"><path d="M1.5 15 A8.5 8.5 0 0 1 18.5 15" fill="none" stroke="#3b3a39" stroke-width="1.2"/><path d="M4.5 15 A5.5 5.5 0 0 1 15.5 15" fill="none" stroke="#3b3a39" stroke-width="1.2"/><path d="M1.5 15 A8.5 8.5 0 0 1 11 6.6 L10.6 9.6 A5.5 5.5 0 0 0 4.5 15 Z" fill="#83beec"/><path d="M10 15 L14 9" stroke="#3b3a39" stroke-width="1.6"/></svg>
<svg class="a" style="left:1711.4px;top:422.4px;" width="19.0" height="19.0" viewBox="0 0 20 20"><rect x="3.5" y="5" width="15.5" height="12" fill="#fff" stroke="#3b3a39" stroke-width="1"/><path d="M3.5 19 H19" stroke="#3b3a39" stroke-width="1"/><text x="6.3" y="14.8" font-family="Liberation Sans,sans-serif" font-size="8.5" fill="#2b88d8">123</text><path d="M3 0 H8 L5.6 4 H9 L1.5 12 L3.5 6 H0.5 Z" fill="#f0932b" stroke="#d9730d" stroke-width="0.5"/></svg>
<svg class="a" style="left:1571.2px;top:450.5px;" width="19.0" height="19.0" viewBox="0 0 20 20"><rect x="1" y="3" width="18" height="12.5" fill="#fff" stroke="#3b3a39" stroke-width="1"/><path d="M1 18 H19" stroke="#3b3a39" stroke-width="1"/><path d="M4 12 L7 6.5 L10 12 Z" fill="#fff" stroke="#2e9e57" stroke-width="1"/><path d="M11.5 6.5 H17.5 L14.5 12 Z" fill="#e03131"/></svg>
<svg class="a" style="left:1599.2px;top:450.5px;" width="19.0" height="19.0" viewBox="0 0 20 20"><rect x="1" y="1.5" width="17" height="15" fill="#fff" stroke="#3b3a39" stroke-width="1"/><path d="M1 3.5 H18" stroke="#3b3a39" stroke-width="1.8"/><rect x="3.5" y="7" width="2.6" height="2.6" fill="#b3b0ad" stroke="#3b3a39" stroke-width="1"/><rect x="3.5" y="12" width="2.6" height="2.6" fill="#b3b0ad" stroke="#3b3a39" stroke-width="1"/><path d="M10.5 11.5 H19.5 L16.3 15 V19.5 L13.7 18 V15 Z" fill="#fff" stroke="#3b3a39" stroke-width="1.1" stroke-linejoin="round"/></svg>
<svg class="a" style="left:1627.5px;top:450.5px;" width="19.0" height="19.0" viewBox="0 0 20 20"><rect x="1" y="1.5" width="18" height="17" fill="#fff" stroke="#3b3a39" stroke-width="1"/><path d="M1 3 H19" stroke="#3b3a39" stroke-width="2"/><path d="M1 8.5 H19 M1 13.5 H19 M7 3 V18.5 M13 3 V18.5" stroke="#3b3a39" stroke-width="1"/></svg>
<svg class="a" style="left:1655.4px;top:450.5px;" width="19.0" height="19.0" viewBox="0 0 20 20"><rect x="1" y="1.5" width="18" height="17" fill="#fff" stroke="#3b3a39" stroke-width="1"/><rect x="7" y="8.5" width="12" height="10" fill="#2b88d8"/><rect x="1" y="8.5" width="6" height="10" fill="#83beec"/><path d="M1 3 H19" stroke="#3b3a39" stroke-width="2"/><path d="M1 8.5 H19 M1 13.5 H19 M7 3 V18.5 M13 3 V18.5" stroke="#3b3a39" stroke-width="1"/></svg>
<svg class="a" style="left:1683.1px;top:450.5px;" width="19.0" height="19.0" viewBox="0 0 20 20"><text x="3" y="17.5" font-family="Liberation Sans,sans-serif" font-weight="700" font-size="17" fill="#2b88d8">R</text></svg>
<svg class="a" style="left:1711.4px;top:450.5px;" width="19.0" height="19.0" viewBox="0 0 20 20"><text x="-1" y="14.5" font-family="Liberation Sans,sans-serif" font-weight="700" font-size="16.5" fill="#2b88d8">Py</text></svg>
<svg class="a" style="left:1571.2px;top:478.5px;" width="19.0" height="19.0" viewBox="0 0 20 20"><path d="M1 1 V19 H19" fill="none" stroke="#3b3a39" stroke-width="1.1"/><path d="M1 4 H14 M1 9 H9 M1 14 H6" stroke="#3b3a39" stroke-width="1"/><circle cx="15.5" cy="4" r="2" fill="#83beec" stroke="#2b88d8" stroke-width="1"/><rect x="9.5" y="7.5" width="3" height="3" fill="#b3b0ad" stroke="#3b3a39" stroke-width="1"/><rect x="6" y="12.5" width="3" height="3" fill="#b3b0ad" stroke="#3b3a39" stroke-width="1"/></svg>
<svg class="a" style="left:1599.2px;top:478.5px;" width="19.0" height="19.0" viewBox="0 0 20 20"><rect x="0.5" y="7.5" width="6" height="5" fill="#83beec" stroke="#2b88d8" stroke-width="1"/><rect x="12" y="1" width="7" height="4.5" fill="#83beec" stroke="#2b88d8" stroke-width="1"/><rect x="12" y="7.7" width="7" height="4.5" fill="#83beec" stroke="#2b88d8" stroke-width="1"/><rect x="12" y="14.5" width="7" height="4.5" fill="#83beec" stroke="#2b88d8" stroke-width="1"/><path d="M6.5 10 H12 M9.5 3.2 V16.8 M9.5 3.2 H12 M9.5 16.8 H12" fill="none" stroke="#2b88d8" stroke-width="1.1"/></svg>
<svg class="a" style="left:1627.5px;top:478.5px;" width="19.0" height="19.0" viewBox="0 0 20 20"><path d="M1 2 H19 V13.5 H8 L4.5 18 V13.5 H1 Z" fill="#fff" stroke="#2b88d8" stroke-width="1.3" stroke-linejoin="round"/></svg>
<svg class="a" style="left:1655.4px;top:478.5px;" width="19.0" height="19.0" viewBox="0 0 20 20"><path d="M3 1 H12.5 L17 5.5 V19 H3 Z M12.5 1 V5.5 H17" fill="#fff" stroke="#3b3a39" stroke-width="1.1"/><rect x="2" y="6.5" width="3" height="3" fill="#83beec" stroke="#2b88d8" stroke-width="1"/><path d="M7 8 H14 M6 12 H12" stroke="#2b88d8" stroke-width="1.1"/></svg>
<svg class="a" style="left:1683.1px;top:478.5px;" width="19.0" height="19.0" viewBox="0 0 20 20"><path d="M5 1.5 H15 V8 C15 14.5 5 14.5 5 8 Z" fill="#fff" stroke="#3b3a39" stroke-width="1.2"/><path d="M5 3.5 H1.5 C1.5 8 3 9.5 5.5 10 M15 3.5 H18.5 C18.5 8 17 9.5 14.5 10" fill="none" stroke="#3b3a39" stroke-width="1.1"/><path d="M5 3 H15" stroke="#2b88d8" stroke-width="2"/><path d="M10 13 V16.5 M6 18.3 H14" stroke="#2b88d8" stroke-width="1.8"/></svg>
<svg class="a" style="left:1711.4px;top:478.5px;" width="19.0" height="19.0" viewBox="0 0 20 20"><path d="M2.5 1 H12.5 L17.5 6 V19 H2.5 Z" fill="#fff" stroke="#3b3a39" stroke-width="1.2"/><path d="M12.5 1 V6 H17.5" fill="#b3b0ad" stroke="#3b3a39" stroke-width="1"/><rect x="5" y="13" width="2.4" height="4" fill="#3b3a39"/><rect x="8.8" y="10.5" width="2.4" height="6.5" fill="#3b3a39"/><rect x="12.6" y="8" width="2.4" height="9" fill="#3b3a39"/></svg>
<svg class="a" style="left:1571.2px;top:506.5px;" width="19.0" height="19.0" viewBox="0 0 20 20"><rect x="8" y="2" width="8" height="7" fill="#fff" stroke="#b3b0ad" stroke-width="1"/><rect x="1.5" y="10" width="7" height="7" fill="#fff" stroke="#b3b0ad" stroke-width="1"/><path d="M10.5 11.5 H19.5 L16.3 15 V19.5 L13.7 18 V15 Z" fill="#fff" stroke="#3b3a39" stroke-width="1.1" stroke-linejoin="round"/><path d="M3 0 H8 L5.6 4 H9 L1.5 12 L3.5 6 H0.5 Z" fill="#f0932b" stroke="#d9730d" stroke-width="0.5"/></svg>
<svg class="a" style="left:1599.2px;top:506.5px;" width="19.0" height="19.0" viewBox="0 0 20 20"><path d="M6 3 H17 V10 M3 12 V17.5 H10" fill="none" stroke="#3b3a39" stroke-width="1.1"/><path d="M6.5 16 L9.5 7 L12 13" fill="none" stroke="#2b88d8" stroke-width="1.2"/><path d="M10.5 11.5 H19.5 L16.3 15 V19.5 L13.7 18 V15 Z" fill="#fff" stroke="#3b3a39" stroke-width="1.1" stroke-linejoin="round"/><path d="M3 0 H8 L5.6 4 H9 L1.5 12 L3.5 6 H0.5 Z" fill="#f0932b" stroke="#d9730d" stroke-width="0.5"/></svg>
<svg class="a" style="left:1627.5px;top:506.5px;" width="19.0" height="19.0" viewBox="0 0 20 20"><path d="M9 3 H18 V9.5 M3 12 V17.5 H10" fill="none" stroke="#3b3a39" stroke-width="1.1" stroke-dasharray="3 1.5"/><rect x="4.5" y="11.5" width="2.5" height="2.5" fill="#b3b0ad" stroke="#3b3a39" stroke-width="1"/><path d="M10.5 11.5 H19.5 L16.3 15 V19.5 L13.7 18 V15 Z" fill="#fff" stroke="#3b3a39" stroke-width="1.1" stroke-linejoin="round"/><path d="M3 0 H8 L5.6 4 H9 L1.5 12 L3.5 6 H0.5 Z" fill="#f0932b" stroke="#d9730d" stroke-width="0.5"/></svg>
<svg class="a" style="left:1655.4px;top:506.5px;" width="19.0" height="19.0" viewBox="0 0 20 20"><rect x="1" y="3" width="18" height="14" fill="#fff" stroke="#3b3a39" stroke-width="1"/><path d="M1.5 16.5 L7 9 L11 13 L13.5 11 L18.5 16.5 Z" fill="#2b88d8"/><circle cx="14" cy="6.5" r="1.4" fill="#e8a33d"/></svg>
<svg class="a" style="left:1683.1px;top:506.5px;" width="19.0" height="19.0" viewBox="0 0 20 20"><rect x="2" y="3" width="16" height="15" fill="#fff" stroke="#2b88d8" stroke-width="1"/><path d="M5 18 V11 L9 12 L10 7 L14 8 L15 3 H18 V9 L14 11 L13 15 L9 16 L8 18 Z" fill="#2b88d8"/><path d="M2 1 H6 V6 L4 8 L2 6 Z" fill="#e07b16"/><circle cx="17" cy="17" r="2.2" fill="#e07b16"/></svg>
<svg class="a" style="left:1711.4px;top:506.5px;" width="19.0" height="19.0" viewBox="0 0 20 20"><path d="M10 1 L19 10 L10 19 L1 10 Z" fill="none" stroke="#8e44ad" stroke-width="1.3"/><path d="M5.5 5.5 L14.5 14.5 M14.5 5.5 L5.5 14.5" stroke="#8e44ad" stroke-width="1.3"/><path d="M10 5.5 L14.5 10 L10 14.5 L5.5 10 Z" fill="#fff" stroke="#8e44ad" stroke-width="1.1"/></svg>
<svg class="a" style="left:1571.2px;top:534.1px;" width="19.0" height="19.0" viewBox="0 0 20 20"><path d="M1 2 H10 L18.5 10 L10 18 H1 L9 10 Z" fill="#fff" stroke="#2b88d8" stroke-width="1.3" stroke-linejoin="round"/><path d="M5.5 18 L13.5 10 L5.5 2" fill="none" stroke="#2b88d8" stroke-width="1.2"/></svg>
<div class="a" style="left:1604.0px;top:541.8px;width:2.2px;height:2.2px;background:#252423;"></div>
<div class="a" style="left:1607.8px;top:541.8px;width:2.2px;height:2.2px;background:#252423;"></div>
<div class="a" style="left:1611.6px;top:541.8px;width:2.2px;height:2.2px;background:#252423;"></div>
<div class="a" style="left:1569.0px;top:364.0px;width:24.2px;height:24.0px;border:1px solid #252423;"></div>
<div class="a" style="left:1566px;top:560.4px;width:169px;height:0;border-top:1px dashed #c8c8c8;"></div>
<div class="a" style="left:1561.0px;top:570.8px;width:180.0px;height:1.0px;background:#d4d4d4;"></div>
<span class="t" style="left:1573.4px;top:583.4px;font-size:12.4px;line-height:12.4px;color:#252423;transform:scaleX(0.900);">X-axis</span>
<div class="a" style="left:1565px;top:601.5px;width:170px;height:37px;border:1px dashed #c8c6c4;border-radius:2px;"></div>
<div class="a" style="left:1568.2px;top:606.5px;width:163.4px;height:22.2px;background:#fafafa;border:1px solid #c8c6c4;border-radius:2px;"></div>
<span class="t" style="left:1573.4px;top:612.2px;font-size:12.4px;line-height:12.4px;color:#252423;">Amount</span>
<svg class="a" style="left:1703.2px;top:615.7px;" width="7.2" height="3.6" viewBox="0 0 7.2 3.6"><path d="M0.4 0.3 L3.6 3.2 L6.8 0.3" fill="none" stroke="#444" stroke-width="1.1"/></svg>
<svg class="a" style="left:1719.6px;top:614.2px;" width="6.0" height="6.0" viewBox="0 0 6 6"><path d="M0.3 0.3 L5.7 5.7 M5.7 0.3 L0.3 5.7" stroke="#444" stroke-width="1"/></svg>
<span class="t" style="left:1573.4px;top:652.2px;font-size:12.4px;line-height:12.4px;color:#252423;transform:scaleX(0.931);">Y-axis</span>
<div class="a" style="left:1565px;top:670.8px;width:170px;height:37px;border:1px dashed #c8c6c4;border-radius:2px;"></div>
<div class="a" style="left:1568.2px;top:675.7px;width:163.4px;height:22.2px;background:#fafafa;border:1px solid #c8c6c4;border-radius:2px;"></div>
<span class="t" style="left:1573.4px;top:681.4px;font-size:12.4px;line-height:12.4px;color:#252423;transform:scaleX(0.978);">Count of Department</span>
<svg class="a" style="left:1703.2px;top:684.9px;" width="7.2" height="3.6" viewBox="0 0 7.2 3.6"><path d="M0.4 0.3 L3.6 3.2 L6.8 0.3" fill="none" stroke="#444" stroke-width="1.1"/></svg>
<svg class="a" style="left:1719.6px;top:683.4px;" width="6.0" height="6.0" viewBox="0 0 6 6"><path d="M0.3 0.3 L5.7 5.7 M5.7 0.3 L0.3 5.7" stroke="#444" stroke-width="1"/></svg>
<span class="t" style="left:1573.4px;top:721.6px;font-size:12.4px;line-height:12.4px;color:#252423;transform:scaleX(0.926);">Secondary y-axis</span>
<div class="a" style="left:1565px;top:740px;width:170px;height:37px;border:1px dashed #c8c6c4;border-radius:2px;"></div>
<div class="a" style="left:1568.2px;top:744.7px;width:163.4px;height:22.2px;background:#fafafa;border:1px solid #c8c6c4;border-radius:2px;"></div>
<span class="t" style="left:1573.4px;top:750.4px;font-size:12.4px;line-height:12.4px;color:#252423;transform:scaleX(0.943);">Count of Transaction_ID</span>
<svg class="a" style="left:1703.2px;top:753.9px;" width="7.2" height="3.6" viewBox="0 0 7.2 3.6"><path d="M0.4 0.3 L3.6 3.2 L6.8 0.3" fill="none" stroke="#444" stroke-width="1.1"/></svg>
<svg class="a" style="left:1719.6px;top:752.4px;" width="6.0" height="6.0" viewBox="0 0 6 6"><path d="M0.3 0.3 L5.7 5.7 M5.7 0.3 L0.3 5.7" stroke="#444" stroke-width="1"/></svg>
<span class="t" style="left:1573.4px;top:790.6px;font-size:12.4px;line-height:12.4px;color:#252423;transform:scaleX(0.928);">Legend</span>
<div class="a" style="left:1565px;top:809.6px;width:170px;height:27px;border:1px dashed #c8c6c4;border-radius:2px;"></div>
<span class="t" style="left:1576.0px;top:818.3px;font-size:12.4px;line-height:12.4px;color:#252423;transform:scaleX(0.963);">Add data fields here</span>
<span class="t" style="left:1573.4px;top:850.4px;font-size:12.4px;line-height:12.4px;color:#252423;transform:scaleX(0.961);">Small multiples</span>
<div class="a" style="left:1565px;top:869.4px;width:170px;height:27px;border:1px dashed #c8c6c4;border-radius:2px;"></div>
<span class="t" style="left:1576.0px;top:878.1px;font-size:12.4px;line-height:12.4px;color:#252423;transform:scaleX(0.963);">Add data fields here</span>
<span class="t" style="left:1573.4px;top:909.8px;font-size:12.4px;line-height:12.4px;color:#252423;transform:scaleX(0.978);">Tooltips</span>
<div class="a" style="left:1565px;top:929px;width:170px;height:27.8px;border:1px dashed #c8c6c4;border-radius:2px;"></div>
<span class="t" style="left:1576.0px;top:938.1px;font-size:12.4px;line-height:12.4px;color:#252423;transform:scaleX(0.963);">Add data fields here</span>
<span class="t" style="left:1573.4px;top:970.3px;font-size:12.4px;line-height:12.4px;color:#252423;font-weight:700;transform:scaleX(0.929);">Drill through</span>
<span class="t" style="left:1573.4px;top:994.8px;font-size:12.4px;line-height:12.4px;color:#252423;transform:scaleX(0.959);">Cross-report</span>
<div class="a" style="left:1687.0px;top:993.6px;width:32.0px;height:15.2px;background:#fff;border:1px solid #555;border-radius:7.6px;"></div>
<div class="a" style="left:1692.5px;top:997.7px;width:7.0px;height:7.0px;background:#666;border-radius:3.5px;"></div>
<span class="t" style="left:1701.5px;top:997.6px;font-size:9.6px;line-height:9.6px;color:#555;transform:scaleX(1.029);">Off</span>
<span class="t" style="left:1573.4px;top:1022.1px;font-size:12.4px;line-height:12.4px;color:#252423;transform:scaleX(0.949);">Keep all filters</span>
<div class="a" style="left:1687.0px;top:1020.7px;width:32.0px;height:15.2px;background:#117865;border-radius:7.6px;"></div>
<div class="a" style="left:1706.5px;top:1024.8px;width:7.0px;height:7.0px;background:#fff;border-radius:3.5px;"></div>
<span class="t" style="left:1692.5px;top:1024.6px;font-size:9.6px;line-height:9.6px;color:#fff;transform:scaleX(0.898);">On</span>
<div class="a" style="left:1565px;top:1046.3px;width:170px;height:25.6px;border:1px dashed #c8c6c4;border-radius:2px;background:#fff;"></div>
<span class="t" style="left:1574.0px;top:1054.2px;font-size:12.4px;line-height:12.4px;color:#252423;transform:scaleX(0.992);">Add drill-through fields here</span>
<div class="a" style="left:1742.0px;top:226.3px;width:180.0px;height:897.0px;background:#f5f5f5;"></div>
<span class="t" style="left:1750.2px;top:237.6px;font-size:15.6px;line-height:15.6px;color:#252423;font-weight:700;transform:scaleX(0.988);">Data</span>
<svg class="a" style="left:1903.3px;top:241.7px;" width="9.0" height="7.2" viewBox="0 0 9 7.2"><path d="M0.6 0.5 L3.8 3.6 L0.6 6.7 M4.8 0.5 L8 3.6 L4.8 6.7" fill="none" stroke="#333" stroke-width="1.5"/></svg>
<div class="a" style="left:1746.6px;top:271.6px;width:171.0px;height:22.8px;background:#fff;border:1px solid #c8c6c4;border-radius:4px;border-bottom:1.5px solid #8a8886;"></div>
<svg class="a" style="left:1757.8px;top:275.4px;" width="15.5" height="15.5" viewBox="0 0 15.5 15.5"><circle cx="6.5" cy="6.5" r="5.7" fill="none" stroke="#444" stroke-width="1.1"/><path d="M10.6 10.8 L15 15.2" stroke="#444" stroke-width="1.2"/></svg>
<span class="t" style="left:1780.4px;top:276.9px;font-size:14.3px;line-height:14.3px;color:#6e6e6e;transform:scaleX(0.894);">Search</span>
<svg class="a" style="left:1757.0px;top:314.6px;" width="8.0" height="4.0" viewBox="0 0 8 4"><path d="M0.4 0.3 L4 3.6 L7.6 0.3" fill="none" stroke="#555" stroke-width="1.1"/></svg>
<svg class="a" style="left:1770.5px;top:309.7px;" width="13.0" height="13.0" viewBox="0 0 13 13"><rect x="0.6" y="0.6" width="11.8" height="11.8" rx="2.2" fill="none" stroke="#333" stroke-width="1.1"/><path d="M0.6 4.5 H12.4 M0.6 8.5 H12.4 M4.5 0.6 V12.4 M8.5 0.6 V12.4" stroke="#333" stroke-width="1"/></svg>
<svg class="a" style="left:1776.8px;top:316.0px;" width="12.2" height="12.2" viewBox="0 0 12.2 12.2"><circle cx="6.1" cy="6.1" r="6.1" fill="#117865"/><path d="M3.4 6.3 L5.3 8.1 L8.8 4.4" fill="none" stroke="#fff" stroke-width="1.2"/></svg>
<span class="t" style="left:1789.5px;top:310.7px;font-size:12.6px;line-height:12.6px;color:#252423;transform:scaleX(0.904);">Finance_Department_...</span>
<div class="a" style="left:1786.2px;top:334.8px;width:11.6px;height:11.6px;background:#fff;border:1px solid #444;border-radius:1.6px;"></div>
<span class="t" style="left:1824.3px;top:335.1px;font-size:12.6px;line-height:12.6px;color:#252423;transform:scaleX(0.914);">Account_Type</span>
<div class="a" style="left:1786.2px;top:358.8px;width:11.6px;height:11.6px;background:#117865;border-radius:1.6px;"></div>
<svg class="a" style="left:1786.2px;top:358.8px;" width="11.6" height="11.6" viewBox="0 0 11.6 11.6"><path d="M2.6 6 L4.9 8.2 L9.2 3.4" fill="none" stroke="#fff" stroke-width="1.3"/></svg>
<svg class="a" style="left:1806.5px;top:358.6px;" width="10.5" height="12.0" viewBox="0 0 10.5 12"><path d="M9.6 2.6 V0.6 H1 L5.6 6 L1 11.4 H9.6 V9.4" fill="none" stroke="#333" stroke-width="1"/></svg>
<span class="t" style="left:1824.3px;top:359.1px;font-size:12.6px;line-height:12.6px;color:#252423;transform:scaleX(0.974);">Amount</span>
<div class="a" style="left:1786.2px;top:382.7px;width:11.6px;height:11.6px;background:#117865;border-radius:1.6px;"></div>
<svg class="a" style="left:1786.2px;top:382.7px;" width="11.6" height="11.6" viewBox="0 0 11.6 11.6"><path d="M2.6 6 L4.9 8.2 L9.2 3.4" fill="none" stroke="#fff" stroke-width="1.3"/></svg>
<span class="t" style="left:1824.3px;top:383.0px;font-size:12.6px;line-height:12.6px;color:#252423;transform:scaleX(0.960);">Department</span>
<div class="a" style="left:1786.2px;top:406.8px;width:11.6px;height:11.6px;background:#fff;border:1px solid #444;border-radius:1.6px;"></div>
<span class="t" style="left:1824.3px;top:407.1px;font-size:12.6px;line-height:12.6px;color:#252423;transform:scaleX(0.974);">Description</span>
<div class="a" style="left:1786.2px;top:430.8px;width:11.6px;height:11.6px;background:#117865;border-radius:1.6px;"></div>
<svg class="a" style="left:1786.2px;top:430.8px;" width="11.6" height="11.6" viewBox="0 0 11.6 11.6"><path d="M2.6 6 L4.9 8.2 L9.2 3.4" fill="none" stroke="#fff" stroke-width="1.3"/></svg>
<span class="t" style="left:1824.3px;top:431.1px;font-size:12.6px;line-height:12.6px;color:#252423;transform:scaleX(0.894);">Transaction_ID</span>
<div class="a" style="left:1550.2px;top:562.2px;width:220.3px;height:226.8px;border:6.6px solid #e61c1c;"></div>
<div class="a" style="left:1922.0px;top:2.0px;width:1920.0px;height:40.0px;background:#332829;"></div>
<div class="a" style="left:1922.0px;top:41.8px;width:1920.0px;height:46.6px;background:#46373a;"></div>
<div class="a" style="left:1928.0px;top:8.4px;width:28.0px;height:27.6px;background:#46373a;border-radius:8px;"></div>
<svg class="a" style="left:1937.5px;top:19.0px;" width="9.0" height="6.0" viewBox="0 0 9 6"><path d="M0.8 0.8 L4.5 4.6 L8.2 0.8" fill="none" stroke="#eee" stroke-width="1.6"/></svg>
<div class="a" style="left:1961.8px;top:8.0px;width:232.4px;height:34.0px;background:#46373a;border-radius:8px 8px 0 0;"></div>
<svg class="a" style="left:1953.8px;top:34.0px;" width="8.0" height="8.0" viewBox="0 0 8 8"><path d="M8 0 V8 H0 C5 8 8 5 8 0 Z" fill="#46373a"/></svg>
<svg class="a" style="left:2194.2px;top:34.0px;" width="8.0" height="8.0" viewBox="0 0 8 8"><path d="M0 0 V8 H8 C3 8 0 5 0 0 Z" fill="#46373a"/></svg>
<svg class="a" style="left:1969.8px;top:13.5px;" width="16.4" height="16.4" viewBox="0 0 35.3 33.4"><defs><linearGradient id="lgp1" x1="0" y1="0" x2="1" y2="1"><stop offset="0.1" stop-color="#e8629a"/><stop offset=".5" stop-color="#e8d4f4"/><stop offset=".85" stop-color="#2388f0"/></linearGradient><linearGradient id="lgb1" gradientUnits="userSpaceOnUse" x1="0" y1="0" x2="0" y2="33"><stop offset="0" stop-color="#6ab4fa"/><stop offset=".35" stop-color="#4f8ff0"/><stop offset=".6" stop-color="#a86cc0"/><stop offset=".85" stop-color="#ee5a8a"/><stop offset="1" stop-color="#f04e78"/></linearGradient></defs><rect x="0.05" y="26.6" width="2.25" height="6.2" fill="url(#lgb1)"/><rect x="3.38" y="18.6" width="2.25" height="14.2" fill="url(#lgb1)"/><rect x="6.71" y="10.8" width="2.25" height="22.0" fill="url(#lgb1)"/><rect x="10.04" y="4" width="2.25" height="28.8" fill="url(#lgb1)"/><rect x="13.37" y="0.6" width="2.25" height="32.2" fill="url(#lgb1)"/><rect x="19.58" y="0.6" width="2.25" height="32.2" fill="url(#lgb1)"/><rect x="22.91" y="4" width="2.25" height="28.8" fill="url(#lgb1)"/><rect x="26.24" y="10.8" width="2.25" height="22.0" fill="url(#lgb1)"/><rect x="29.57" y="18.6" width="2.25" height="14.2" fill="url(#lgb1)"/><rect x="32.90" y="26.6" width="2.25" height="6.2" fill="url(#lgb1)"/><g transform="translate(0 0.45)"><path d="M17.6 5.4 L30.6 18.4 L17.6 31.4 L4.6 18.4 Z" fill="#10141a"/><path d="M17.6 6.6 L29.4 18.4 L17.6 30.2 L5.8 18.4 Z" fill="url(#lgp1)"/><path d="M17.6 11.6 L24.4 18.4 L17.6 25.2 L10.8 18.4 Z" fill="#000"/><circle cx="17.6" cy="18.4" r="1.5" fill="#fff"/></g></svg>
<span class="t" style="left:1994.3px;top:16.5px;font-size:12.3px;line-height:12.3px;color:#ece4e4;transform:scaleX(0.920);">Prism</span>
<svg class="a" style="left:2174.0px;top:17.8px;" width="8.4" height="8.4" viewBox="0 0 8.4 8.4"><path d="M0.6 0.6 L7.8 7.8 M7.8 0.6 L0.6 7.8" stroke="#eee" stroke-width="1.5"/></svg>
<svg class="a" style="left:2208.9px;top:16.9px;" width="10.0" height="10.0" viewBox="0 0 10 10"><path d="M5 0 V10 M0 5 H10" stroke="#eee" stroke-width="1.5"/></svg>
<div class="a" style="left:3722.0px;top:21.0px;width:10.5px;height:1.0px;background:#bdb0b0;"></div>
<svg class="a" style="left:3768.0px;top:16.5px;" width="10.0" height="10.0" viewBox="0 0 10 10"><path d="M0.5 2.5 H7.5 V9.5 H0.5 Z M2.5 2.5 V0.5 H9.5 V7.5 H7.5" fill="none" stroke="#9a8c8c" stroke-width="1"/></svg>
<svg class="a" style="left:3813.7px;top:15.8px;" width="11.5" height="11.5" viewBox="0 0 11.5 11.5"><path d="M0.4 0.4 L11.1 11.1 M11.1 0.4 L0.4 11.1" stroke="#d8cccc" stroke-width="1"/></svg>
<svg class="a" style="left:1937.9px;top:59.0px;" width="12.6" height="12.6" viewBox="0 0 12.6 12.6"><path d="M12.4 6.3 H1.2 M6.6 0.9 L1.2 6.3 L6.6 11.7" fill="none" stroke="#ddd0d0" stroke-width="1.6"/></svg>
<svg class="a" style="left:1973.8px;top:59.0px;" width="12.6" height="12.6" viewBox="0 0 12.6 12.6"><path d="M0.2 6.3 H11.4 M6 0.9 L11.4 6.3 L6 11.7" fill="none" stroke="#8e7b7d" stroke-width="1.6"/></svg>
<svg class="a" style="left:2009.5px;top:58.3px;" width="13.5" height="13.8" viewBox="0 0 13.5 13.8"><path d="M11.6 7 A5.3 5.3 0 1 1 9.8 3" fill="none" stroke="#ddd0d0" stroke-width="1.6"/><path d="M12.3 0.6 V5 H7.9 Z" fill="#ddd0d0"/></svg>
<div class="a" style="left:2041.9px;top:48.4px;width:1661.0px;height:33.3px;background:#332728;border-radius:16.7px;"></div>
<div class="a" style="left:2047.5px;top:53.4px;width:23.3px;height:23.3px;background:#46373a;border-radius:11.7px;"></div>
<svg class="a" style="left:2052.6px;top:59.5px;" width="13.0" height="11.6" viewBox="0 0 13 11.6"><circle cx="2.9" cy="2.6" r="1.9" fill="none" stroke="#eee" stroke-width="1.3"/><path d="M6.4 2.6 H12.6 M0.4 9 H6.6" stroke="#eee" stroke-width="1.4"/><circle cx="10.1" cy="9" r="1.9" fill="none" stroke="#eee" stroke-width="1.3"/></svg>
<span class="t" style="left:2079.4px;top:58.3px;font-size:14.2px;line-height:14.2px;color:#f3eded;transform:scaleX(0.986);">prismbi.com.sa/home/analytics/visualization</span>
<svg class="a" style="left:3607.5px;top:57.5px;" width="17.0" height="15.0" viewBox="0 0 17 15"><path d="M8 1 H2.3 C1.5 1 1 1.5 1 2.3 V10.2 C1 11 1.5 11.5 2.3 11.5 H14.7 C15.5 11.5 16 11 16 10.2 V8 M5.5 14 H11.5 M8.5 11.5 V14" fill="none" stroke="#ece4e4" stroke-width="1.4"/><path d="M13 0.5 V6.5 M10.3 4 L13 6.8 L15.7 4" fill="none" stroke="#ece4e4" stroke-width="1.4"/></svg>
<svg class="a" style="left:3638.6px;top:59.5px;" width="19.0" height="11.0" viewBox="0 0 19 11"><circle cx="5.2" cy="5.2" r="4.4" fill="none" stroke="#ece4e4" stroke-width="1.5"/><circle cx="5.2" cy="5.2" r="1.2" fill="#ece4e4"/><path d="M9.6 4.4 H18.2 V8.6 H15.2 V6.2 H13.4 V8.6 H10.6" fill="none" stroke="#ece4e4" stroke-width="1.4"/></svg>
<svg class="a" style="left:3672.6px;top:57.6px;" width="15.0" height="14.4" viewBox="0 0 15 14.4"><path d="M7.5 1.2 L9.4 5.4 L14 5.9 L10.6 9 L11.5 13.5 L7.5 11.2 L3.5 13.5 L4.4 9 L1 5.9 L5.6 5.4 Z" fill="none" stroke="#ece4e4" stroke-width="1.4" stroke-linejoin="round"/></svg>
<svg class="a" style="left:3722.0px;top:56.5px;" width="18.0" height="17.0" viewBox="0 0 18 17"><path d="M1.2 5 H6 V3.6 C6 0.6 10.4 0.6 10.4 3.6 V5 H14.2 V8.6 H15.4 C18 8.6 18 12.6 15.4 12.6 H14.2 V16 H1.2 V12.4 H2.6 C5 12.4 5 8.8 2.6 8.8 H1.2 Z" fill="none" stroke="#ece4e4" stroke-width="1.5" stroke-linejoin="round"/></svg>
<div class="a" style="left:3756.3px;top:57.5px;width:1.0px;height:15.0px;background:#6a585a;"></div>
<div class="a" style="left:3773.7px;top:54.7px;width:20.6px;height:20.6px;background:#0d9aa8;border-radius:10.3px;"></div>
<span class="t" style="left:3778.8px;top:58.8px;font-size:12.4px;line-height:12.4px;color:#fff;">m</span>
<div class="a" style="left:3818.7px;top:58.2px;width:2.8px;height:2.8px;background:#ece4e4;border-radius:1.4px;"></div>
<div class="a" style="left:3818.7px;top:63.5px;width:2.8px;height:2.8px;background:#ece4e4;border-radius:1.4px;"></div>
<div class="a" style="left:3818.7px;top:68.8px;width:2.8px;height:2.8px;background:#ece4e4;border-radius:1.4px;"></div>
<div class="a" style="left:1922.0px;top:88.3px;width:1920.0px;height:946.0px;background:#1b2029;"></div>
<div class="a" style="left:1922.0px;top:143.0px;width:1920.0px;height:1.0px;background:#454a52;"></div>
<svg class="a" style="left:1929.0px;top:95.4px;" width="35.3" height="33.4" viewBox="0 0 35.3 33.4"><defs><linearGradient id="lgp0" x1="0" y1="0" x2="1" y2="1"><stop offset="0.1" stop-color="#e8629a"/><stop offset=".5" stop-color="#e8d4f4"/><stop offset=".85" stop-color="#2388f0"/></linearGradient><linearGradient id="lgb0" gradientUnits="userSpaceOnUse" x1="0" y1="0" x2="0" y2="33"><stop offset="0" stop-color="#6ab4fa"/><stop offset=".35" stop-color="#4f8ff0"/><stop offset=".6" stop-color="#a86cc0"/><stop offset=".85" stop-color="#ee5a8a"/><stop offset="1" stop-color="#f04e78"/></linearGradient></defs><rect x="0.05" y="26.6" width="2.25" height="6.2" fill="url(#lgb0)"/><rect x="3.38" y="18.6" width="2.25" height="14.2" fill="url(#lgb0)"/><rect x="6.71" y="10.8" width="2.25" height="22.0" fill="url(#lgb0)"/><rect x="10.04" y="4" width="2.25" height="28.8" fill="url(#lgb0)"/><rect x="13.37" y="0.6" width="2.25" height="32.2" fill="url(#lgb0)"/><rect x="19.58" y="0.6" width="2.25" height="32.2" fill="url(#lgb0)"/><rect x="22.91" y="4" width="2.25" height="28.8" fill="url(#lgb0)"/><rect x="26.24" y="10.8" width="2.25" height="22.0" fill="url(#lgb0)"/><rect x="29.57" y="18.6" width="2.25" height="14.2" fill="url(#lgb0)"/><rect x="32.90" y="26.6" width="2.25" height="6.2" fill="url(#lgb0)"/><g transform="translate(0 0.45)"><path d="M17.6 5.4 L30.6 18.4 L17.6 31.4 L4.6 18.4 Z" fill="#10141a"/><path d="M17.6 6.6 L29.4 18.4 L17.6 30.2 L5.8 18.4 Z" fill="url(#lgp0)"/><path d="M17.6 11.6 L24.4 18.4 L17.6 25.2 L10.8 18.4 Z" fill="#000"/><circle cx="17.6" cy="18.4" r="1.5" fill="#fff"/></g></svg>
<span class="t" style="left:1929.9px;top:128.6px;font-size:8.6px;line-height:8.6px;color:#e4e6ea;font-weight:700;transform:scaleX(1.226);">PRISM</span>
<span class="t" style="left:2000.0px;top:108.6px;font-size:14.2px;line-height:14.2px;color:#f1f3f5;font-weight:700;transform:scaleX(0.820);">Edit</span>
<span class="t" style="left:2064.4px;top:108.6px;font-size:14.2px;line-height:14.2px;color:#f1f3f5;font-weight:700;transform:scaleX(0.838);">View</span>
<svg class="a" style="left:2122.4px;top:107.4px;" width="17.0" height="17.0" viewBox="0 0 17 17"><circle cx="8.5" cy="8.5" r="7.6" fill="none" stroke="#f1f3f5" stroke-width="1.3"/><path d="M6.1 6.6 C6.1 3.6 10.9 3.6 10.9 6.5 C10.9 8.3 8.5 8.4 8.5 10.3" fill="none" stroke="#f1f3f5" stroke-width="1.4"/><circle cx="8.5" cy="12.6" r="0.95" fill="#f1f3f5"/></svg>
<span class="t" style="left:2148.7px;top:108.6px;font-size:14.2px;line-height:14.2px;color:#f1f3f5;font-weight:700;transform:scaleX(0.855);">Help</span>
<div class="a" style="left:3549.7px;top:104.0px;width:78.2px;height:25.0px;border:1px solid #d5d8dc;border-radius:4px;"></div>
<svg class="a" style="left:3562.5px;top:109.2px;" width="14.5" height="14.5" viewBox="0 0 14.5 14.5"><path d="M0.5 2 C0.5 1 1 0.5 2 0.5 H11 L14 3.5 V12.5 C14 13.5 13.5 14 12.5 14 H2 C1 14 0.5 13.5 0.5 12.5 Z" fill="#f1f3f5"/><rect x="2.6" y="2.4" width="7.6" height="3.2" fill="#1b2029"/><circle cx="7.2" cy="9.8" r="2.2" fill="#1b2029"/></svg>
<span class="t" style="left:3586.6px;top:109.1px;font-size:13.6px;line-height:13.6px;color:#ec4a6e;transform:scaleX(0.910);">Save</span>
<svg class="a" style="left:3643.5px;top:106.3px;" width="20.0" height="20.0" viewBox="0 0 20 20"><circle cx="10" cy="10" r="4.4" fill="#e6e6e6"/><path d="M16.90 10.00 L19.00 10.00" stroke="#e6e6e6" stroke-width="1.5" stroke-linecap="round"/><path d="M14.88 14.88 L16.36 16.36" stroke="#e6e6e6" stroke-width="1.5" stroke-linecap="round"/><path d="M10.00 16.90 L10.00 19.00" stroke="#e6e6e6" stroke-width="1.5" stroke-linecap="round"/><path d="M5.12 14.88 L3.64 16.36" stroke="#e6e6e6" stroke-width="1.5" stroke-linecap="round"/><path d="M3.10 10.00 L1.00 10.00" stroke="#e6e6e6" stroke-width="1.5" stroke-linecap="round"/><path d="M5.12 5.12 L3.64 3.64" stroke="#e6e6e6" stroke-width="1.5" stroke-linecap="round"/><path d="M10.00 3.10 L10.00 1.00" stroke="#e6e6e6" stroke-width="1.5" stroke-linecap="round"/><path d="M14.88 5.12 L16.36 3.64" stroke="#e6e6e6" stroke-width="1.5" stroke-linecap="round"/></svg>
<div class="a" style="left:3687.0px;top:102.0px;width:81.8px;height:28.0px;background:linear-gradient(90deg,#1e2c42,#1f2733);border:1px solid #36445a;border-radius:14px;"></div>
<div class="a" style="left:3690.0px;top:105.0px;width:36.0px;height:22.0px;background:linear-gradient(90deg,#3b82f6,#5aa2f6);border-radius:11px;box-shadow:0 2px 10px rgba(59,130,246,.45);"></div>
<span class="t" style="left:3698.8px;top:109.4px;font-size:13.2px;line-height:13.2px;color:#fff;font-weight:700;">EN</span>
<span class="t" style="left:3738.8px;top:109.4px;font-size:13.2px;line-height:13.2px;color:#cbd3de;font-weight:700;transform:scaleX(0.970);">AR</span>
<div class="a" style="left:3795.0px;top:101.7px;width:28.0px;height:28.0px;background:linear-gradient(125deg,#3f86dc 12%,#9a74c4 55%,#dc629c 95%);border-radius:14px;"></div>
<span class="t" style="left:3803.2px;top:109.2px;font-size:14px;line-height:14px;color:#fff;font-weight:700;">M</span>
<div class="a" style="left:1973.0px;top:143.5px;width:1.0px;height:890.5px;background:#454a52;"></div>
<svg class="a" style="left:1939.0px;top:157.5px;" width="13.6" height="13.6" viewBox="0 0 13.6 13.6"><path d="M4.5 0.7 H2.3 C1.3 0.7 0.8 1.3 0.8 2.3 V11.3 C0.8 12.3 1.3 12.9 2.3 12.9 H4.5 M13 6.8 H4.8 M8 3.4 L4.6 6.8 L8 10.2" fill="none" stroke="#d6dae0" stroke-width="1.2"/></svg>
<svg class="a" style="left:1941.0px;top:185.8px;" width="13.0" height="13.0" viewBox="0 0 13 13"><rect x="0.7" y="0.7" width="11.6" height="11.6" rx="1.8" fill="none" stroke="#d6dae0" stroke-width="1.15"/><path d="M0.7 4.7 H12.3 M4.8 4.7 V12.3" stroke="#d6dae0" stroke-width="1.15"/></svg>
<div class="a" style="left:1932.0px;top:206.2px;width:31.0px;height:27.5px;background:#2a2f38;border-radius:5px;"></div>
<div class="a" style="left:1932.0px;top:206.2px;width:3.0px;height:27.5px;background:#fff;border-radius:3px 0 0 3px;"></div>
<svg class="a" style="left:1943.0px;top:213.7px;" width="13.2" height="13.2" viewBox="0 0 13.2 13.2"><path d="M5.6 1.6 A5.6 5.6 0 1 0 11.8 8 H5.6 Z" fill="none" stroke="#d6dae0" stroke-width="1.15" stroke-linejoin="round"/><path d="M7.6 0.7 A5.2 5.2 0 0 1 12.6 5.8 H7.6 Z" fill="none" stroke="#d6dae0" stroke-width="1.15" stroke-linejoin="round"/></svg>
<svg class="a" style="left:1940.5px;top:241.3px;" width="14.2" height="14.8" viewBox="0 0 14.2 14.8"><rect x="5" y="0.7" width="4.2" height="4.2" rx="0.8" fill="none" stroke="#d6dae0" stroke-width="1.15"/><rect x="1" y="9.6" width="5" height="4.4" rx="0.8" fill="none" stroke="#d6dae0" stroke-width="1.15"/><rect x="8.2" y="9.6" width="5" height="4.4" rx="0.8" fill="none" stroke="#d6dae0" stroke-width="1.15"/><path d="M7.1 4.9 V7.3 M0 7.3 H14.2 M3.5 7.3 V9.6 M10.7 7.3 V9.6" stroke="#d6dae0" stroke-width="1.2"/></svg>
<div class="a" style="left:1973.5px;top:178.0px;width:1381.0px;height:1.0px;background:#454a52;"></div>
<div class="a" style="left:3354.0px;top:143.5px;width:1.0px;height:890.5px;background:#454a52;"></div>
<div class="a" style="left:3152.6px;top:145.6px;width:187.2px;height:31.0px;background:#20252e;border:1px solid #3a3f48;border-radius:6px;"></div>
<svg class="a" style="left:3162.3px;top:154.0px;" width="14.5" height="14.5" viewBox="0 0 14.5 14.5"><circle cx="6" cy="6" r="5.2" fill="none" stroke="#d5d8dc" stroke-width="1.3"/><path d="M3.4 6 H8.6 M9.8 9.8 L14 14" stroke="#d5d8dc" stroke-width="1.3"/></svg>
<span class="t" style="left:3197.3px;top:155.4px;font-size:11.6px;line-height:11.6px;color:#e5e7eb;font-weight:700;transform:scaleX(0.913);">100%</span>
<svg class="a" style="left:3245.8px;top:154.0px;" width="14.5" height="14.5" viewBox="0 0 14.5 14.5"><circle cx="6" cy="6" r="5.2" fill="none" stroke="#d5d8dc" stroke-width="1.3"/><path d="M3.4 6 H8.6 M6 3.4 V8.6 M9.8 9.8 L14 14" stroke="#d5d8dc" stroke-width="1.3"/></svg>
<div class="a" style="left:3273.3px;top:152.0px;width:1.0px;height:18.0px;background:#3a3f48;"></div>
<svg class="a" style="left:3286.5px;top:154.0px;" width="14.6" height="14.6" viewBox="0 0 14.6 14.6"><path d="M0.7 4.6 V2 C0.7 1.2 1.2 0.7 2 0.7 H4.6 M10 0.7 H12.6 C13.4 0.7 13.9 1.2 13.9 2 V4.6 M13.9 10 V12.6 C13.9 13.4 13.4 13.9 12.6 13.9 H10 M4.6 13.9 H2 C1.2 13.9 0.7 13.4 0.7 12.6 V10" fill="none" stroke="#d5d8dc" stroke-width="1.4"/></svg>
<svg class="a" style="left:3315.7px;top:154.2px;" width="13.6" height="14.0" viewBox="0 0 13.6 14"><path d="M1.5 2 V5.4 H5 M1.6 5.2 A5.6 5.6 0 1 1 1.2 8.6" fill="none" stroke="#d5d8dc" stroke-width="1.3"/></svg>
<div class="a" style="left:2065.0px;top:215.0px;width:1198.0px;height:672.0px;background:#2d2d2d;box-shadow:0 12px 45px 4px rgba(0,0,0,.33);"></div>
<svg class="a" style="left:2064.0px;top:214.0px;" width="1201.0" height="675.0" viewBox="0 0 1201 675"><rect x="1.3" y="1.3" width="1198.2" height="672.4" fill="none" stroke="#aab4c3" stroke-width="2.4" stroke-dasharray="6.2 3.85"/></svg>
<div class="a" style="left:2112.3px;top:262.5px;width:913.2px;height:562.0px;background:#fff;border:1px solid #2c5cc5;"></div>
<div class="a" style="left:2113.3px;top:263.5px;width:911.2px;height:560.0px;border:1.6px solid #5b9bf5;"></div>
<svg class="a" style="left:2112.0px;top:262.0px;" width="914.0" height="563.0" viewBox="0 0 914 563"><g fill="#fff" stroke="#3b78e0" stroke-width="1"><path d="M451 3 V6.5 H462 V3"/><path d="M451 560 V556.5 H462 V560"/><path d="M3 275 H6.5 V287 H3"/><path d="M911 275 H907.5 V287 H911"/><path d="M3 7 H7 V3"/><path d="M911 7 H907 V3"/><path d="M3 556 H7 V560"/><path d="M911 556 H907 V560"/></g></svg>
<span class="t" style="left:2120.0px;top:271.4px;font-size:14px;line-height:14px;color:#1f1f1f;font-weight:700;">Count of Department and Count of Transaction_ID by Amount</span>
<svg class="a" style="left:2963.7px;top:272.8px;" width="11.4" height="11.4" viewBox="0 0 11.4 11.4"><path d="M0.7 0.8 H10.7 L6.9 5.6 V10 L4.5 8.8 V5.6 Z" fill="none" stroke="#222" stroke-width="1.3" stroke-linejoin="round"/></svg>
<svg class="a" style="left:2984.7px;top:273.5px;" width="10.6" height="10.6" viewBox="0 0 10.6 10.6"><path d="M6.4 0.7 H9.9 V4.2 M9.6 1 L6.2 4.4 M4.2 9.9 H0.7 V6.4 M1 9.6 L4.4 6.2" fill="none" stroke="#222" stroke-width="1.3"/></svg>
<div class="a" style="left:3009.8px;top:274.6px;width:2.2px;height:2.2px;background:#222;"></div>
<div class="a" style="left:3009.8px;top:278.2px;width:2.2px;height:2.2px;background:#222;"></div>
<div class="a" style="left:3009.8px;top:281.8px;width:2.2px;height:2.2px;background:#222;"></div>
<span class="t" style="left:2143.4px;top:306.5px;font-size:11px;line-height:11px;color:#333;transform:scaleX(0.996);">Count of Department</span>
<span class="t" style="left:2270.3px;top:306.5px;font-size:11px;line-height:11px;color:#333;">Count of Transaction_ID</span>
<svg class="a" style="left:1922.0px;top:0.0px;" width="1922.0" height="1198.0" viewBox="1922 0 1922 1198"><path d="M2215.2 337.4 H2954.8" stroke="#dcdcdc" stroke-width="1"/><path d="M2215.2 405.3 H2954.8" stroke="#dcdcdc" stroke-width="1"/><path d="M2215.2 473.2 H2954.8" stroke="#dcdcdc" stroke-width="1"/><path d="M2215.2 541.1 H2954.8" stroke="#dcdcdc" stroke-width="1"/><path d="M2215.2 609 H2954.8" stroke="#dcdcdc" stroke-width="1"/><path d="M2215.2 676.9 H2954.8" stroke="#dcdcdc" stroke-width="1"/><path d="M2215.2 745.6 H2954.8" stroke="#dcdcdc" stroke-width="1"/><path d="M2975.3 337.4 V745.6" stroke="#333" stroke-width="1"/><path d="M2402 541 H2956.6" stroke="#3b82f6" stroke-width="2"/></svg>
<span class="t" style="left:2190.5px;top:330.6px;font-size:12.2px;line-height:12.2px;color:#333;">1.6</span>
<span class="t" style="left:2967.0px;top:330.6px;font-size:12.2px;line-height:12.2px;color:#333;transform:scaleX(0.943);">1.6</span>
<span class="t" style="left:2190.5px;top:398.5px;font-size:12.2px;line-height:12.2px;color:#333;">1.4</span>
<span class="t" style="left:2967.0px;top:398.5px;font-size:12.2px;line-height:12.2px;color:#333;transform:scaleX(0.943);">1.4</span>
<span class="t" style="left:2190.5px;top:466.4px;font-size:12.2px;line-height:12.2px;color:#333;">1.2</span>
<span class="t" style="left:2967.0px;top:466.4px;font-size:12.2px;line-height:12.2px;color:#333;transform:scaleX(0.943);">1.2</span>
<span class="t" style="left:2200.7px;top:534.3px;font-size:12.2px;line-height:12.2px;color:#333;">1</span>
<span class="t" style="left:2976.2px;top:534.3px;font-size:12.2px;line-height:12.2px;color:#333;">1</span>
<span class="t" style="left:2190.5px;top:602.2px;font-size:12.2px;line-height:12.2px;color:#333;">0.8</span>
<span class="t" style="left:2967.0px;top:602.2px;font-size:12.2px;line-height:12.2px;color:#333;transform:scaleX(0.943);">0.8</span>
<span class="t" style="left:2190.5px;top:670.1px;font-size:12.2px;line-height:12.2px;color:#333;">0.6</span>
<span class="t" style="left:2967.0px;top:670.1px;font-size:12.2px;line-height:12.2px;color:#333;transform:scaleX(0.943);">0.6</span>
<span class="t" style="left:2190.5px;top:738.8px;font-size:12.2px;line-height:12.2px;color:#333;">0.4</span>
<span class="t" style="left:2967.0px;top:738.8px;font-size:12.2px;line-height:12.2px;color:#333;transform:scaleX(0.943);">0.4</span>
<span class="t" style="left:2164.0px;top:542.5px;font-size:12.6px;line-height:12.6px;color:#1f1f1f;font-weight:700;transform:translate(-50%,-50%) rotate(-90deg) scaleX(0.966);transform-origin:50% 50%;">Count of Department</span>
<span class="t" style="left:3005.3px;top:541.5px;font-size:12.6px;line-height:12.6px;color:#1f1f1f;font-weight:700;transform:translate(-50%,-50%) rotate(-90deg) scaleX(0.961);transform-origin:50% 50%;">Count of Transaction_ID</span>
<span class="t" style="left:2114.5px;top:746.6px;width:100px;text-align:right;font-size:11.8px;line-height:12px;color:#333;transform-origin:100% 50%;transform:rotate(-45deg);">-600,000</span>
<span class="t" style="left:2388.3px;top:746.6px;width:100px;text-align:right;font-size:11.8px;line-height:12px;color:#333;transform-origin:100% 50%;transform:rotate(-45deg);">-400,000</span>
<span class="t" style="left:2662.0px;top:746.6px;width:100px;text-align:right;font-size:11.8px;line-height:12px;color:#333;transform-origin:100% 50%;transform:rotate(-45deg);">-200,000</span>
<span class="t" style="left:2854.0px;top:746.6px;width:100px;text-align:right;font-size:11.8px;line-height:12px;color:#333;transform-origin:100% 50%;transform:rotate(-45deg);">-60,000</span>
<span class="t" style="left:2562.3px;top:796.5px;font-size:12.6px;line-height:12.6px;color:#1f1f1f;font-weight:700;transform:scaleX(0.962);">Amount</span>
<div class="a" style="left:2216.4px;top:807.3px;width:739.4px;height:7.8px;background:#cdd6e4;"></div>
<div class="a" style="left:2216.4px;top:807.3px;width:332.7px;height:7.8px;background:#7f7f7f;"></div>
<div class="a" style="left:2913.0px;top:237.5px;width:145.8px;height:629.5px;border:7.2px solid #e61c1c;"></div>
<div class="a" style="left:1973.5px;top:1003.3px;width:1381.0px;height:1.0px;background:#454a52;"></div>
<div class="a" style="left:1980.7px;top:1004.0px;width:63.3px;height:30.0px;background:#2a2e36;"></div>
<div class="a" style="left:1980.7px;top:1031.2px;width:63.3px;height:2.8px;background:#38a8f0;"></div>
<span class="t" style="left:1994.7px;top:1011.0px;font-size:12.4px;line-height:12.4px;color:#f1f3f5;font-weight:700;transform:scaleX(0.858);">Page 1</span>
<svg class="a" style="left:2056.8px;top:1012.6px;" width="12.5" height="12.5" viewBox="0 0 12.5 12.5"><path d="M6.25 0 V12.5 M0 6.25 H12.5" stroke="#3d9ae8" stroke-width="1.6"/></svg>
<svg class="a" style="left:3372.0px;top:161.5px;" width="10.0" height="7.2" viewBox="0 0 10 7.2"><path d="M0.6 0.5 L3.9 3.6 L0.6 6.7 M5.4 0.5 L8.7 3.6 L5.4 6.7" fill="none" stroke="#f1f3f5" stroke-width="1.3"/></svg>
<span class="t" style="left:3377.6px;top:196.0px;font-size:12.2px;line-height:12.2px;color:#f1f3f5;font-weight:700;transform:translate(-50%,-50%) rotate(-90deg) scaleX(0.929);transform-origin:50% 50%;">Filters</span>
<div class="a" style="left:3398.0px;top:143.5px;width:3.0px;height:890.5px;background:#434140;"></div>
<div class="a" style="left:3620.2px;top:143.5px;width:2.0px;height:890.5px;background:#434140;"></div>
<span class="t" style="left:3412.5px;top:160.1px;font-size:15.2px;line-height:15.2px;color:#f4f5f7;font-weight:700;transform:scaleX(0.901);">Visualizations</span>
<svg class="a" style="left:3594.0px;top:162.4px;" width="6.0" height="9.4" viewBox="0 0 6 9.4"><path d="M0.8 0.7 L5 4.7 L0.8 8.7" fill="none" stroke="#c8ccd2" stroke-width="1.2"/></svg>
<div class="a" style="left:3401.0px;top:190.2px;width:219.0px;height:1.0px;background:#3d4046;"></div>
<div class="a" style="left:3411.3px;top:201.4px;width:197.5px;height:28.4px;background:#1b2029;border:1px solid #3d4148;border-radius:5px;"></div>
<div class="a" style="left:3412.3px;top:202.4px;width:97.5px;height:26.4px;background:#2d2d2e;border-radius:4px 0 0 4px;"></div>
<svg class="a" style="left:3453.8px;top:209.2px;" width="14.0" height="14.0" viewBox="0 0 14 14"><path d="M0.8 0.5 V11 C0.8 12.6 1.6 13.2 3 13.2 H13.6" fill="none" stroke="#38a5e6" stroke-width="1.5"/><path d="M4.6 8 V10.6 M7.6 2.4 V10.6 M10.6 5.4 V10.6" stroke="#38a5e6" stroke-width="1.5" stroke-linecap="round"/></svg>
<svg class="a" style="left:3551.4px;top:208.8px;" width="15.0" height="15.0" viewBox="0 0 15 15"><path d="M1.5 13.5 L10.5 4.5 L12.5 6.5 L3.5 15.5 Z" fill="none" stroke="#c5c9cf" stroke-width="1.2" transform="translate(0,-1.5)"/><path d="M11.5 0.5 V3.5 M10 2 H13 M2.8 1.8 V4.2 M1.6 3 H4 M12.6 9.3 V11.7 M11.4 10.5 H13.8" stroke="#c5c9cf" stroke-width="1"/></svg>
<div class="a" style="left:3401.0px;top:240.7px;width:219.0px;height:1.0px;background:#3d4046;"></div>
<div class="a" style="left:3421.9px;top:262.0px;width:28.0px;height:28.0px;background:#318adb;border-radius:8px;"></div>
<svg class="a" style="left:3421.9px;top:262.0px;" width="28.0" height="28.0" viewBox="0 0 28 28"><path d="M5.4 6 V22.3 H22" fill="none" stroke="#fff" stroke-width="1"/><rect x="5.8" y="8" width="10.4" height="4" fill="#fff" opacity="1"/><rect x="6.8" y="9.2" width="3" height="1.6" fill="#318adb" opacity="0.9"/><rect x="5.8" y="15.6" width="14.4" height="4" fill="#fff" opacity="1"/><rect x="6.8" y="16.8" width="5.6" height="1.6" fill="#318adb" opacity="0.5"/></svg>
<div class="a" style="left:3467.9px;top:262.0px;width:28.0px;height:28.0px;background:#318adb;border-radius:8px;"></div>
<svg class="a" style="left:3467.9px;top:262.0px;" width="28.0" height="28.0" viewBox="0 0 28 28"><path d="M5.4 6 V22.3 H22" fill="none" stroke="#fff" stroke-width="1"/><rect x="8.4" y="11" width="4.2" height="11" fill="#fff" opacity="1"/><rect x="9.6" y="17" width="1.8" height="4.4" fill="#318adb" opacity="1"/><rect x="15.4" y="7" width="4.2" height="15" fill="#fff" opacity="1"/><rect x="16.6" y="16" width="1.8" height="5.4" fill="#318adb" opacity="1"/></svg>
<div class="a" style="left:3514.0px;top:262.0px;width:28.0px;height:28.0px;background:#318adb;border-radius:8px;"></div>
<svg class="a" style="left:3514.0px;top:262.0px;" width="28.0" height="28.0" viewBox="0 0 28 28"><path d="M5.4 6 V22.3 H22" fill="none" stroke="#fff" stroke-width="1"/><rect x="5.8" y="7" width="15.4" height="3.4" fill="#fff" opacity="1"/><rect x="5.8" y="12" width="6.5" height="3.4" fill="#fff" opacity="0.55"/><rect x="5.8" y="12" width="10" height="3.4" fill="none" stroke="#fff" stroke-width="0.9"/><rect x="5.8" y="17.2" width="11.5" height="3.4" fill="#fff" opacity="1"/><path d="M12 15.4 V17.2" stroke="#fff" stroke-width="0.9"/></svg>
<div class="a" style="left:3560.0px;top:262.0px;width:28.0px;height:28.0px;background:#318adb;border-radius:8px;"></div>
<svg class="a" style="left:3560.0px;top:262.0px;" width="28.0" height="28.0" viewBox="0 0 28 28"><path d="M5 22.3 H22.4" stroke="#fff" stroke-width="1"/><rect x="5.2" y="6" width="4.4" height="16.3" fill="#fff" opacity="1"/><rect x="11.2" y="13" width="3.2" height="9.3" fill="none" stroke="#fff" stroke-width="0.9"/><rect x="15.4" y="16" width="2.6" height="6.3" fill="none" stroke="#fff" stroke-width="0.9"/><rect x="18.6" y="11" width="3.2" height="11.3" fill="none" stroke="#fff" stroke-width="0.9"/></svg>
<div class="a" style="left:3421.9px;top:297.1px;width:28.0px;height:28.0px;background:#318adb;border-radius:8px;"></div>
<svg class="a" style="left:3421.9px;top:297.1px;" width="28.0" height="28.0" viewBox="0 0 28 28"><path d="M5.4 6 V22.3 H22" fill="none" stroke="#fff" stroke-width="1"/><rect x="5.8" y="8" width="14.4" height="4" fill="#fff" opacity="1"/><rect x="6.8" y="9.2" width="2" height="1.6" fill="#318adb" opacity="0.9"/><rect x="5.8" y="15.6" width="14.4" height="4" fill="#fff" opacity="1"/><rect x="6.8" y="16.8" width="7" height="1.6" fill="#318adb" opacity="0.5"/></svg>
<div class="a" style="left:3467.9px;top:297.1px;width:28.0px;height:28.0px;background:#318adb;border-radius:8px;"></div>
<svg class="a" style="left:3467.9px;top:297.1px;" width="28.0" height="28.0" viewBox="0 0 28 28"><path d="M5.4 6 V22.3 H22" fill="none" stroke="#fff" stroke-width="1"/><rect x="8" y="7" width="4.6" height="15" fill="#fff" opacity="1"/><rect x="9.2" y="10" width="2.2" height="12" fill="#318adb" opacity="0.45"/><rect x="15" y="7" width="4.6" height="15" fill="#fff" opacity="1"/><rect x="16.2" y="16.5" width="2.2" height="5" fill="#318adb" opacity="1"/></svg>
<div class="a" style="left:3514.0px;top:297.1px;width:28.0px;height:28.0px;background:#318adb;border-radius:8px;"></div>
<svg class="a" style="left:3514.0px;top:297.1px;" width="28.0" height="28.0" viewBox="0 0 28 28"><rect x="5" y="6.5" width="17" height="3.6" fill="#fff" opacity="1"/><rect x="5" y="12" width="14.6" height="3.6" fill="#fff" opacity="1"/><rect x="5" y="17.4" width="12.4" height="3.6" fill="#fff" opacity="1"/><path d="M5 22.4 H22" stroke="#fff" stroke-width="0.7" opacity=".6"/></svg>
<div class="a" style="left:3560.0px;top:297.1px;width:28.0px;height:28.0px;background:#318adb;border-radius:8px;"></div>
<svg class="a" style="left:3560.0px;top:297.1px;" width="28.0" height="28.0" viewBox="0 0 28 28"><path d="M5.4 6 V22.3 H22" fill="none" stroke="#fff" stroke-width="1"/><rect x="7" y="7.5" width="4.2" height="14.5" fill="#fff" opacity="1"/><rect x="8.2" y="19.3" width="1.8" height="2.4" fill="#318adb" opacity="1"/><rect x="15" y="8" width="4.2" height="14" fill="#fff" opacity="1"/><rect x="16.2" y="19.3" width="1.8" height="2.4" fill="#318adb" opacity="1"/><path d="M11.3 13.5 L14 17.6 L18.8 11.2" fill="none" stroke="#318adb" stroke-width="2.6"/><path d="M11.3 13.5 L14 17.6 L18.8 11.2 M14 17.6 V22" fill="none" stroke="#fff" stroke-width="0.9"/></svg>
<div class="a" style="left:3418.7px;top:328.9px;width:34.4px;height:34.4px;border:2px solid #1c2fd4;border-radius:11px;"></div>
<div class="a" style="left:3420.5px;top:330.7px;width:30.8px;height:30.8px;background:#318adb;border:1.5px solid #fff;border-radius:9px;"></div>
<svg class="a" style="left:3421.9px;top:332.1px;" width="28.0" height="28.0" viewBox="0 0 28 28"><path d="M5.4 6 V22.3 H22" fill="none" stroke="#fff" stroke-width="1"/><path d="M5.6 18.8 L10.2 12.2 L13.6 14.6 L18.4 9.6 L21.4 12.6" fill="none" stroke="#fff" stroke-width="0.95"/><path d="M5.6 14.4 L9 10.6 L14 14.4 L18.4 14.2 L21.4 9.4" fill="none" stroke="#fff" stroke-width="0.95"/></svg>
<div class="a" style="left:3467.9px;top:332.1px;width:28.0px;height:28.0px;background:#318adb;border-radius:8px;"></div>
<svg class="a" style="left:3467.9px;top:332.1px;" width="28.0" height="28.0" viewBox="0 0 28 28"><path d="M5 22.4 V15.5 L10.6 7.4 L14.4 13 L18 7.4 L21.6 12.6 V22.4" fill="none" stroke="#fff" stroke-width="0.95"/><path d="M5 22.4 V15.6 L9.2 20.4 L14.4 12.8 L18.6 18.6 L21.6 14.6 V22.4 Z" fill="#fff"/></svg>
<div class="a" style="left:3514.0px;top:332.1px;width:28.0px;height:28.0px;background:#318adb;border-radius:8px;"></div>
<svg class="a" style="left:3514.0px;top:332.1px;" width="28.0" height="28.0" viewBox="0 0 28 28"><path d="M5.4 6 V22.3 H22" fill="none" stroke="#fff" stroke-width="1"/><path d="M5.6 7 L9.6 13.4 L14.4 6.6 L17.2 10.4 L21.6 9.2 V19.6 L15 14 L10 20.6 L5.6 14.4 Z" fill="#fff"/></svg>
<div class="a" style="left:3560.0px;top:332.1px;width:28.0px;height:28.0px;background:#318adb;border-radius:8px;"></div>
<svg class="a" style="left:3560.0px;top:332.1px;" width="28.0" height="28.0" viewBox="0 0 28 28"><path d="M5.4 6 V22.3 H22" fill="none" stroke="#fff" stroke-width="1"/><path d="M5.6 7 H21.6 V19.4 L16 15 L10 21 L5.6 17 Z" fill="#fff"/></svg>
<div class="a" style="left:3421.9px;top:367.1px;width:28.0px;height:28.0px;background:#318adb;border-radius:8px;"></div>
<svg class="a" style="left:3421.9px;top:367.1px;" width="28.0" height="28.0" viewBox="0 0 28 28"><path d="M5.4 6 V22.3 H22" fill="none" stroke="#fff" stroke-width="1"/><rect x="7.9" y="9.4" width="2.7" height="2.7" fill="#fff" opacity="1"/><rect x="17.1" y="6.9" width="2.7" height="2.7" fill="#fff" opacity="1"/><rect x="12.7" y="12.4" width="2.7" height="2.7" fill="#fff" opacity="1"/><rect x="7.9" y="16.9" width="2.7" height="2.7" fill="#fff" opacity="1"/><rect x="17.1" y="16.2" width="2.7" height="2.7" fill="#fff" opacity="1"/></svg>
<div class="a" style="left:3467.9px;top:367.1px;width:28.0px;height:28.0px;background:#318adb;border-radius:8px;"></div>
<svg class="a" style="left:3467.9px;top:367.1px;" width="28.0" height="28.0" viewBox="0 0 28 28"><path d="M5.4 6 V22.3 H22" fill="none" stroke="#fff" stroke-width="0.8" opacity=".75"/><g fill="#fff"><circle cx="9" cy="19.3" r="1.1"/><circle cx="10.8" cy="17.6" r="1.2"/><circle cx="12.4" cy="15.8" r="1.2"/><circle cx="13.9" cy="14.3" r="1.2"/><circle cx="15.2" cy="12.6" r="1.1"/><circle cx="11.8" cy="9.8" r="1.2"/><circle cx="19.6" cy="10.2" r="1.5"/><circle cx="9.4" cy="17" r=".8"/><circle cx="14.4" cy="16.4" r=".8"/></g></svg>
<div class="a" style="left:3514.0px;top:367.1px;width:28.0px;height:28.0px;background:#318adb;border-radius:8px;"></div>
<svg class="a" style="left:3514.0px;top:367.1px;" width="28.0" height="28.0" viewBox="0 0 28 28"><g opacity=".5"><path d="M5.4 6 V22.3 H22" fill="none" stroke="#fff" stroke-width="1"/><path d="M7.4 16.4 L11 14.2 L15.4 12.2 L21 10.4" fill="none" stroke="#fff" stroke-width="0.7"/><circle cx="9" cy="14.6" r=".7" fill="#fff"/><circle cx="13.4" cy="16.2" r=".7" fill="#fff"/><circle cx="16.6" cy="11.4" r=".7" fill="#fff"/><circle cx="21" cy="13.4" r=".7" fill="#fff"/></g></svg>
<div class="a" style="left:3560.0px;top:367.1px;width:28.0px;height:28.0px;background:#318adb;border-radius:8px;"></div>
<svg class="a" style="left:3560.0px;top:367.1px;" width="28.0" height="28.0" viewBox="0 0 28 28"><rect x="6.4" y="8" width="15.2" height="13.6" rx="1.6" fill="none" stroke="#fff" stroke-width="1.2"/><path d="M6.4 12 H21.6 M11.6 12 V21.6" stroke="#fff" stroke-width="1.2"/></svg>
<div class="a" style="left:3421.9px;top:402.1px;width:28.0px;height:28.0px;background:#318adb;border-radius:8px;"></div>
<svg class="a" style="left:3421.9px;top:402.1px;" width="28.0" height="28.0" viewBox="0 0 28 28"><circle cx="14" cy="14" r="8.2" fill="none" stroke="#fff" stroke-width="1"/><path d="M14 14 V5.8 A8.2 8.2 0 0 1 19.8 19.8 Z" fill="#fff"/></svg>
<div class="a" style="left:3467.9px;top:402.1px;width:28.0px;height:28.0px;background:#318adb;border-radius:8px;"></div>
<svg class="a" style="left:3467.9px;top:402.1px;" width="28.0" height="28.0" viewBox="0 0 28 28"><circle cx="14" cy="14" r="6.3" fill="none" stroke="#fff" stroke-width="4.4"/><path d="M8.2 10.4 A6.8 6.8 0 0 1 13.6 7.2" fill="none" stroke="#318adb" stroke-width="2.6"/><path d="M6.2 10.2 A8.5 8.5 0 0 1 13.6 5.5 M10 11.6 A4.3 4.3 0 0 1 13.6 9.7" fill="none" stroke="#fff" stroke-width="0.8"/></svg>
<div class="a" style="left:3514.0px;top:402.1px;width:28.0px;height:28.0px;background:#318adb;border-radius:8px;"></div>
<svg class="a" style="left:3514.0px;top:402.1px;" width="28.0" height="28.0" viewBox="0 0 28 28"><path d="M5.4 6 V22.3 H22" fill="none" stroke="#fff" stroke-width="1"/><rect x="7" y="7.5" width="4.2" height="14.5" fill="#fff" opacity="1"/><rect x="8.2" y="19.3" width="1.8" height="2.4" fill="#318adb" opacity="1"/><rect x="15" y="8" width="4.2" height="14" fill="#fff" opacity="1"/><rect x="16.2" y="19.3" width="1.8" height="2.4" fill="#318adb" opacity="1"/><path d="M11.3 13.5 L14 17.6 L18.8 11.2" fill="none" stroke="#318adb" stroke-width="2.6"/><path d="M11.3 13.5 L14 17.6 L18.8 11.2 M14 17.6 V22" fill="none" stroke="#fff" stroke-width="0.9"/></svg>
<div class="a" style="left:3560.0px;top:402.1px;width:28.0px;height:28.0px;background:#318adb;border-radius:8px;"></div>
<svg class="a" style="left:3560.0px;top:402.1px;" width="28.0" height="28.0" viewBox="0 0 28 28"><path d="M5.4 6 V22.3 H22" fill="none" stroke="#fff" stroke-width="1"/><rect x="7" y="7.5" width="4.2" height="14.5" fill="#fff" opacity="1"/><rect x="8.2" y="19.3" width="1.8" height="2.4" fill="#318adb" opacity="1"/><rect x="15" y="8" width="4.2" height="14" fill="#fff" opacity="1"/><rect x="16.2" y="19.3" width="1.8" height="2.4" fill="#318adb" opacity="1"/><path d="M11.3 13.5 L14 17.6 L18.8 11.2" fill="none" stroke="#318adb" stroke-width="2.6"/><path d="M11.3 13.5 L14 17.6 L18.8 11.2 M14 17.6 V22" fill="none" stroke="#fff" stroke-width="0.9"/></svg>
<div class="a" style="left:3421.9px;top:437.0px;width:28.0px;height:28.0px;background:#318adb;border-radius:8px;"></div>
<svg class="a" style="left:3421.9px;top:437.0px;" width="28.0" height="28.0" viewBox="0 0 28 28"><circle cx="14.4" cy="13.6" r="5.4" fill="#fff"/><path d="M12.4 6.2 A8 8 0 0 0 12.4 21.2 M8.6 22.6 H19.8" fill="none" stroke="#fff" stroke-width="0.8" opacity=".85"/></svg>
<div class="a" style="left:3467.9px;top:437.0px;width:28.0px;height:28.0px;background:#318adb;border-radius:8px;"></div>
<svg class="a" style="left:3467.9px;top:437.0px;" width="28.0" height="28.0" viewBox="0 0 28 28"><path d="M14 6 L20.2 10.8 V21.8 H8 V10.8 Z M8 10.8 L20.2 21.8 M20.2 10.8 L8 21.8 M14 6 V21.8 M8 10.8 H20.2 M14 6 L10 18 H18.4 Z" fill="none" stroke="#fff" stroke-width="0.55" opacity=".85"/></svg>
<div class="a" style="left:3514.0px;top:437.0px;width:28.0px;height:28.0px;background:#318adb;border-radius:8px;"></div>
<svg class="a" style="left:3514.0px;top:437.0px;" width="28.0" height="28.0" viewBox="0 0 28 28"><rect x="5" y="9.6" width="17.4" height="9.6" fill="#fff" opacity="1"/><path d="M5 12.6 C9 10.6 13 16 22.4 12 M5 16.4 C10 19 15 12.6 22.4 16.8 M5 14.4 C11 13 16 15.6 22.4 14.2" fill="none" stroke="#318adb" stroke-width="0.9"/></svg>
<span class="t" style="left:3414.3px;top:495.6px;font-size:11.2px;line-height:11.2px;color:#a7adb7;font-weight:700;transform:scaleX(0.935);">X-AXIS</span>
<div class="a" style="left:3418.1px;top:519.3px;width:183.8px;height:29.6px;background:#262b36;border:1px solid #3a4050;border-radius:5px;"></div>
<svg class="a" style="left:3429.0px;top:531.3px;" width="8.4" height="5.4" viewBox="0 0 8.4 5.4"><path d="M0.6 0.6 L4.2 4.4 L7.8 0.6" fill="none" stroke="#c5c9cf" stroke-width="1.2"/></svg>
<span class="t" style="left:3446.9px;top:527.8px;font-size:12.2px;line-height:12.2px;color:#f4f5f7;font-weight:700;transform:scaleX(0.875);">Amount</span>
<span class="t" style="left:3414.3px;top:576.3px;font-size:11.2px;line-height:11.2px;color:#a7adb7;font-weight:700;transform:scaleX(0.939);">Y-AXIS</span>
<div class="a" style="left:3418.1px;top:598.8px;width:183.8px;height:29.6px;background:#262b36;border:1px solid #3a4050;border-radius:5px;"></div>
<svg class="a" style="left:3429.0px;top:610.8px;" width="8.4" height="5.4" viewBox="0 0 8.4 5.4"><path d="M0.6 0.6 L4.2 4.4 L7.8 0.6" fill="none" stroke="#c5c9cf" stroke-width="1.2"/></svg>
<span class="t" style="left:3446.9px;top:607.3px;font-size:12.2px;line-height:12.2px;color:#f4f5f7;font-weight:700;transform:scaleX(0.881);">Count of Department</span>
<span class="t" style="left:3414.3px;top:656.6px;font-size:11.2px;line-height:11.2px;color:#a7adb7;font-weight:700;transform:scaleX(0.902);">SECONDARY Y-AXIS</span>
<div class="a" style="left:3418.1px;top:679.2px;width:183.8px;height:29.6px;background:#262b36;border:1px solid #3a4050;border-radius:5px;"></div>
<svg class="a" style="left:3429.0px;top:691.2px;" width="8.4" height="5.4" viewBox="0 0 8.4 5.4"><path d="M0.6 0.6 L4.2 4.4 L7.8 0.6" fill="none" stroke="#c5c9cf" stroke-width="1.2"/></svg>
<span class="t" style="left:3446.9px;top:687.7px;font-size:12.2px;line-height:12.2px;color:#f4f5f7;font-weight:700;transform:scaleX(0.845);">Count of Transaction_ID</span>
<span class="t" style="left:3414.3px;top:736.6px;font-size:11.2px;line-height:11.2px;color:#a7adb7;font-weight:700;transform:scaleX(0.866);">LEGEND</span>
<div class="a" style="left:3418.1px;top:759.2px;width:183.8px;height:35.4px;border:1px dashed #414755;border-radius:5px;background:#232833;"></div>
<span class="t" style="left:3427.5px;top:771.2px;font-size:11.6px;line-height:11.6px;color:#9da3ae;font-style:italic;transform:scaleX(0.918);">Add data fields here</span>
<div class="a" style="left:3418.1px;top:799.5px;width:183.8px;height:51.4px;border:1px dashed #414755;border-radius:5px;background:#232833;"></div>
<svg class="a" style="left:3431.0px;top:811.0px;" width="7.0" height="11.0" viewBox="0 0 7 11"><path d="M3.5 0.4 C6.4 0.4 7.4 3.4 5.6 5.6 L5.2 7.4 H1.8 L1.4 5.6 C-0.4 3.4 0.6 0.4 3.5 0.4 Z" fill="#f5c542"/><rect x="1.9" y="8" width="3.2" height="2.4" rx="0.6" fill="#b9bec7"/></svg>
<span class="t" style="left:3446.0px;top:811.5px;font-size:11.4px;line-height:11.4px;color:#9da3ae;font-style:italic;transform:scaleX(0.920);">Cannot use Legend when Y-</span>
<span class="t" style="left:3427.5px;top:827.6px;font-size:11.4px;line-height:11.4px;color:#9da3ae;font-style:italic;transform:scaleX(0.919);">axis and Secondary Y-axis are set</span>
<span class="t" style="left:3634.1px;top:160.1px;font-size:15.2px;line-height:15.2px;color:#f4f5f7;font-weight:700;transform:scaleX(0.938);">Data</span>
<svg class="a" style="left:3814.8px;top:162.4px;" width="6.0" height="9.4" viewBox="0 0 6 9.4"><path d="M0.8 0.7 L5 4.7 L0.8 8.7" fill="none" stroke="#c8ccd2" stroke-width="1.2"/></svg>
<div class="a" style="left:3622.0px;top:190.2px;width:220.0px;height:1.0px;background:#3d4046;"></div>
<div class="a" style="left:3633.1px;top:201.4px;width:197.8px;height:28.4px;background:#2c2c2d;border:1px solid #3d4148;border-radius:5px;"></div>
<svg class="a" style="left:3646.1px;top:210.0px;" width="11.6" height="11.6" viewBox="0 0 11.6 11.6"><circle cx="4.9" cy="4.9" r="4.2" fill="none" stroke="#aeb4bd" stroke-width="1.1"/><path d="M8 8 L11 11" stroke="#aeb4bd" stroke-width="1.1"/></svg>
<span class="t" style="left:3669.6px;top:210.0px;font-size:12.4px;line-height:12.4px;color:#9aa0aa;transform:scaleX(0.837);">Search columns...</span>
<div class="a" style="left:3622.0px;top:241.5px;width:220.0px;height:1.0px;background:#3d4046;"></div>
<svg class="a" style="left:3635.7px;top:256.6px;" width="8.6" height="5.6" viewBox="0 0 8.6 5.6"><path d="M0.6 0.6 L4.3 4.6 L8 0.6" fill="none" stroke="#aeb4bd" stroke-width="1.2"/></svg>
<svg class="a" style="left:3653.7px;top:251.6px;" width="12.6" height="14.8" viewBox="0 0 12.6 14.8"><path d="M0.7 2.2 C0.7 1.2 1.2 0.7 2.2 0.7 H7.6 L11.9 5 V12.6 C11.9 13.6 11.4 14.1 10.4 14.1 H2.2 C1.2 14.1 0.7 13.6 0.7 12.6 Z M7.6 0.7 V5 H11.9" fill="none" stroke="#38bdf8" stroke-width="1.2"/><path d="M3.4 8.4 H5.6 M7.2 8.4 H9.4 M3.4 11 H5.6 M7.2 11 H9.4" stroke="#38bdf8" stroke-width="1.2"/></svg>
<span class="t" style="left:3672.6px;top:252.9px;font-size:12.6px;line-height:12.6px;color:#c3c8d0;font-weight:700;transform:scaleX(0.815);">1. Auto Field</span>
<span class="t" style="left:3799.1px;top:253.7px;font-size:10.2px;line-height:10.2px;color:#8b919c;transform:scaleX(0.936);">(5 cols)</span>
<div class="a" style="left:3642.7px;top:276.0px;width:199.3px;height:34.7px;background:#1b2847;border-radius:8px 0 0 8px;"></div>
<div class="a" style="left:3642.7px;top:312.5px;width:199.3px;height:35.2px;background:#1b2847;border-radius:8px 0 0 8px;"></div>
<div class="a" style="left:3642.7px;top:420.0px;width:199.3px;height:35.3px;background:#1b2847;border-radius:8px 0 0 8px;"></div>
<div class="a" style="left:3653.8px;top:287.8px;width:12.4px;height:12.4px;background:#e9e9ea;border-radius:1.6px;"></div>
<svg class="a" style="left:3653.8px;top:287.8px;" width="12.4" height="12.4" viewBox="0 0 12.4 12.4"><path d="M2.5 6.3 L5.1 8.9 L10 3.6" fill="none" stroke="#1f2937" stroke-width="1.5"/></svg>
<svg class="a" style="left:3679.0px;top:288.4px;" width="9.0" height="11.4" viewBox="0 0 9 11.4"><path d="M8.2 2.4 V0.7 H0.9 L4.9 5.7 L0.9 10.7 H8.2 V9" fill="none" stroke="#60a5fa" stroke-width="1.1"/></svg>
<span class="t" style="left:3696.7px;top:288.1px;font-size:12.4px;line-height:12.4px;color:#8ebcf8;font-weight:700;transform:scaleX(0.869);">Amount</span>
<div class="a" style="left:3653.8px;top:324.0px;width:12.4px;height:12.4px;background:#e9e9ea;border-radius:1.6px;"></div>
<svg class="a" style="left:3653.8px;top:324.0px;" width="12.4" height="12.4" viewBox="0 0 12.4 12.4"><path d="M2.5 6.3 L5.1 8.9 L10 3.6" fill="none" stroke="#1f2937" stroke-width="1.5"/></svg>
<span class="t" style="left:3696.7px;top:324.3px;font-size:12.4px;line-height:12.4px;color:#8ebcf8;font-weight:700;transform:scaleX(0.866);">Department</span>
<div class="a" style="left:3653.8px;top:360.1px;width:12.4px;height:12.4px;border:1.4px solid #e5e7eb;border-radius:1.6px;"></div>
<span class="t" style="left:3696.7px;top:360.4px;font-size:12.4px;line-height:12.4px;color:#c6cad1;font-weight:700;transform:scaleX(0.825);">Description</span>
<div class="a" style="left:3653.8px;top:396.0px;width:12.4px;height:12.4px;border:1.4px solid #e5e7eb;border-radius:1.6px;"></div>
<span class="t" style="left:3696.7px;top:396.3px;font-size:12.4px;line-height:12.4px;color:#c6cad1;font-weight:700;transform:scaleX(0.812);">Account_Type</span>
<div class="a" style="left:3653.8px;top:431.8px;width:12.4px;height:12.4px;background:#e9e9ea;border-radius:1.6px;"></div>
<svg class="a" style="left:3653.8px;top:431.8px;" width="12.4" height="12.4" viewBox="0 0 12.4 12.4"><path d="M2.5 6.3 L5.1 8.9 L10 3.6" fill="none" stroke="#1f2937" stroke-width="1.5"/></svg>
<span class="t" style="left:3696.7px;top:432.1px;font-size:12.4px;line-height:12.4px;color:#8ebcf8;font-weight:700;transform:scaleX(0.812);">Transaction_ID</span>
<div class="a" style="left:3622.0px;top:463.0px;width:220.0px;height:1.0px;background:#3d4046;"></div>
<span class="t" style="left:3521.4px;top:943.1px;font-size:18.2px;line-height:18.2px;color:#8d9299;transform:scaleX(1.087);">Activate Windows</span>
<span class="t" style="left:3521.4px;top:968.1px;font-size:13.4px;line-height:13.4px;color:#8d9299;transform:scaleX(1.111);">Go to Settings to activate Windows.</span>
<div class="a" style="left:3802.0px;top:968.0px;width:40.0px;height:36.0px;background:#fff;border-radius:18px 0 0 18px;"></div>
<svg class="a" style="left:3813.0px;top:976.5px;" width="19.0" height="19.0" viewBox="0 0 19 19"><defs><linearGradient id="brg" x1="0" y1="0" x2="1" y2="1"><stop offset="0" stop-color="#7b5cf0"/><stop offset="1" stop-color="#e066b0"/></linearGradient></defs><path d="M9 2 C6 0.5 3.5 2.5 4 5 C1.5 5.5 0.8 8.5 2.5 10 C1 12 2.5 15 5 14.8 C5.5 17.5 8 17.8 9 16.5 Z M10 2 C13 0.5 15.5 2.5 15 5 C17.5 5.5 18.2 8.5 16.5 10 C18 12 16.5 15 14 14.8 C13.5 17.5 11 17.8 10 16.5 Z" fill="none" stroke="url(#brg)" stroke-width="1.5"/><path d="M5 8 H8 M11 8 H14 M6 11.5 H8.5 M10.5 11.5 H13" stroke="url(#brg)" stroke-width="1.2"/></svg>
<div class="a" style="left:3371.5px;top:470.2px;width:291.7px;height:254.8px;border:7.1px solid #e61c1c;"></div>
<div class="a" style="left:2.0px;top:1147.4px;width:1920.0px;height:48.6px;background:#1e1e1e;border-top:1px solid #2e2e2e;"></div>
<svg class="a" style="left:267.0px;top:1160.4px;" width="23.4" height="23.4" viewBox="0 0 23.4 23.4"><defs><linearGradient id="Lst" x1="0" y1="0" x2="1" y2="1"><stop offset="0" stop-color="#6fd8ff"/><stop offset="1" stop-color="#1c9ef0"/></linearGradient></defs><g fill="url(#Lst)"><rect x="0" y="0" width="11" height="11" rx="0.8"/><rect x="12.4" y="0" width="11" height="11" rx="0.8"/><rect x="0" y="12.4" width="11" height="11" rx="0.8"/><rect x="12.4" y="12.4" width="11" height="11" rx="0.8"/></g></svg>
<div class="a" style="left:303.6px;top:1155.8px;width:219.6px;height:32.0px;background:#3b3b3b;border:1px solid #4a4a4a;border-radius:16px;"></div>
<svg class="a" style="left:314.4px;top:1163.9px;" width="16.0" height="16.5" viewBox="0 0 16 16.5"><circle cx="7" cy="7" r="5.8" fill="none" stroke="#f2f2f2" stroke-width="1.6"/><path d="M11.2 11.4 L15.4 15.8" stroke="#f2f2f2" stroke-width="1.7"/></svg>
<span class="t" style="left:340.0px;top:1166.1px;font-size:13.6px;line-height:13.6px;color:#e8e8e8;transform:scaleX(0.956);">Search</span>
<svg class="a" style="left:473.6px;top:1158.4px;" width="41.0" height="27.0" viewBox="0 0 41 27"><defs><radialGradient id="Lth" cx=".5" cy=".75" r=".8"><stop offset="0" stop-color="#ffd36a"/><stop offset=".45" stop-color="#f08a1d"/><stop offset="1" stop-color="#c9480a"/></radialGradient></defs><path d="M0 27 V17 C0 -5 41 -5 41 17 V27 Z" fill="url(#Lth)"/><path d="M6 27 V18 C6 3 35 3 35 18 V27" fill="none" stroke="#d9640f" stroke-width="1.6"/><path d="M11 27 V18 C11 8 30 8 30 18 V27" fill="none" stroke="#c2500a" stroke-width="1.4"/><path d="M15.5 27 V19 C15.5 12.5 25.5 12.5 25.5 19 V27 Z" fill="#8c1c0c"/><rect x="9" y="23.5" width="23" height="3.5" fill="#a82410"/><path d="M0 27 L4 21 L9 25 Z M41 27 L37 21 L32 25 Z" fill="#b0300f"/></svg>
<svg class="a" style="left:535.4px;top:1159.9px;" width="24.0" height="24.0" viewBox="0 0 24 24"><rect x="8.5" y="2.5" width="15" height="13" rx="1.5" fill="#f2f2f2"/><rect x="0.5" y="8.5" width="15" height="13" rx="1.5" fill="#8e8e8e" opacity=".9"/></svg>
<svg class="a" style="left:579.4px;top:1159.9px;" width="24.0" height="24.0" viewBox="0 0 24 24"><defs><linearGradient id="Lc1a" x1=".6" y1="0" x2=".3" y2="1"><stop offset="0" stop-color="#1f62d8"/><stop offset=".3" stop-color="#27a5e8"/><stop offset=".6" stop-color="#3fc77a"/><stop offset="1" stop-color="#f7d21e"/></linearGradient><linearGradient id="Lc1b" x1=".6" y1="0" x2=".3" y2="1"><stop offset="0" stop-color="#a259ec"/><stop offset=".45" stop-color="#ec5aa8"/><stop offset=".8" stop-color="#f8853a"/><stop offset="1" stop-color="#ef4e3a"/></linearGradient></defs><path d="M9.6 2.6 H14.2 C16 2.6 16.6 3.8 16.1 5.4 L13 15.8 C12.5 17.4 11.4 18.3 9.8 18.3 H4.6 C2.5 18.3 1.4 16.8 2 14.6 L4.6 5.9 C5.2 3.8 6.8 2.6 9.6 2.6 Z" fill="url(#Lc1a)"/><path d="M14.4 21.4 H9.8 C8 21.4 7.4 20.2 7.9 18.6 L11 8.2 C11.5 6.6 12.6 5.7 14.2 5.7 H19.4 C21.5 5.7 22.6 7.2 22 9.4 L19.4 18.1 C18.8 20.2 17.2 21.4 14.4 21.4 Z" fill="url(#Lc1b)"/><path d="M13.6 6.4 L10.4 17.6" stroke="#fff" stroke-width="1.5" stroke-linecap="round" opacity=".9"/><rect x="5" y="16.5" width="19" height="7.5" fill="#1e1e1e"/><text x="6" y="23" font-family="Liberation Sans,sans-serif" font-weight="700" font-size="6.8" fill="#fff">M365</text></svg>
<svg class="a" style="left:623.3px;top:1159.9px;" width="24.0" height="24.0" viewBox="0 0 24 24"><path d="M0.5 3.5 C0.5 2.6 1 2.2 1.8 2.2 H8 L10.5 4.8 H22 C23 4.8 23.5 5.3 23.5 6.2 V20 C23.5 21 23 21.5 22 21.5 H2 C1 21.5 0.5 21 0.5 20 Z" fill="#e8a820"/><path d="M0.5 8 H23.5 V20 C23.5 21 23 21.5 22 21.5 H2 C1 21.5 0.5 21 0.5 20 Z" fill="#fbd44c"/><rect x="6.5" y="15.5" width="11" height="6" rx="1" fill="#1a78d0"/></svg>
<svg class="a" style="left:667.3px;top:1159.9px;" width="24.0" height="24.0" viewBox="0 0 24 24"><defs><linearGradient id="Led" x1="0" y1="0" x2="1" y2="1"><stop offset="0" stop-color="#35c1a0"/><stop offset=".5" stop-color="#1a8fd8"/><stop offset="1" stop-color="#0c59a4"/></linearGradient></defs><circle cx="12" cy="12" r="11.5" fill="url(#Led)"/><path d="M3 15 C3 8 16 5 20.5 12.5 C21.5 15 19 17 16 16.5 C13 16 12.5 13 14 11.5 C10 10.5 7 14 9 18.5 C10 21 13 22.5 16 22.5 C8 25 3 20 3 15 Z" fill="#0c4a8c" opacity=".85"/><path d="M1 10 C4 2 18 0 22.5 9 C18 4 8 4.5 5.5 11 Z" fill="#5fe0a8" opacity=".7"/></svg>
<svg class="a" style="left:711.2px;top:1159.9px;" width="24.0" height="24.0" viewBox="0 0 24 24"><path d="M7.5 6 V4.5 C7.5 0.8 16.5 0.8 16.5 4.5 V6" fill="none" stroke="#2a9ae0" stroke-width="1.8"/><rect x="0.8" y="5.5" width="22.4" height="17.5" rx="3" fill="#f3f3f3"/><rect x="7" y="9.5" width="4.4" height="4.4" fill="#f25022"/><rect x="12.6" y="9.5" width="4.4" height="4.4" fill="#7fba00"/><rect x="7" y="15" width="4.4" height="4.4" fill="#00a4ef"/><rect x="12.6" y="15" width="4.4" height="4.4" fill="#ffb900"/></svg>
<svg class="a" style="left:755.2px;top:1159.9px;" width="24.0" height="24.0" viewBox="0 0 24 24"><path d="M3 9 L14 1.5 L23 8 V20 C23 21 22.4 21.5 21.5 21.5 H5 Z" fill="#1f6fd0"/><path d="M5 11 L16 4 L23 9 V20 L12 21.5 Z" fill="#54a8f0"/><path d="M8 21.5 L23 11 V20 C23 21 22.4 21.5 21.5 21.5 Z" fill="#7cc8ff"/><rect x="1" y="11.5" width="10.5" height="10.5" rx="2" fill="#0f4fa0"/><circle cx="6.2" cy="16.8" r="2.6" fill="none" stroke="#fff" stroke-width="1.4"/></svg>
<svg class="a" style="left:799.2px;top:1159.9px;" width="24.0" height="24.0" viewBox="0 0 24 24"><rect x="2" y="4.5" width="20" height="15" rx="5" fill="#f00032"/><path d="M10 8.5 V15.5 L15.8 12 Z" fill="#fff"/></svg>
<svg class="a" style="left:843.1px;top:1159.9px;" width="24.0" height="24.0" viewBox="0 0 24 24"><rect x="0" y="0" width="24" height="24" fill="#fff"/><rect x="9" y="5.5" width="12" height="12.5" rx="1" fill="#1a7fd4"/><path d="M9 9 L15 13 L21 9" fill="none" stroke="#7fc4f5" stroke-width="1.2"/><rect x="3" y="7" width="9.5" height="9.5" rx="1.2" fill="#0f5fae"/><circle cx="7.7" cy="11.8" r="2.3" fill="none" stroke="#fff" stroke-width="1.3"/></svg>
<svg class="a" style="left:887.1px;top:1159.9px;" width="24.0" height="24.0" viewBox="0 0 24 24"><rect x="0" y="0" width="24" height="24" fill="#050505"/><path d="M8 5.5 L19 8.2 L16.3 19 L5.3 16.3 Z" fill="#fff"/><rect x="10.6" y="10.6" width="3.2" height="3.2" fill="#050505" transform="rotate(14 12.2 12.2)"/></svg>
<svg class="a" style="left:931.0px;top:1159.9px;" width="24.0" height="24.0" viewBox="0 0 24 24"><rect x="0" y="0" width="24" height="24" fill="#fff"/><rect x="9" y="5.5" width="12" height="12.5" rx="1" fill="#1a7fd4"/><path d="M9 9 L15 13 L21 9" fill="none" stroke="#7fc4f5" stroke-width="1.2"/><rect x="3" y="7" width="9.5" height="9.5" rx="1.2" fill="#0f5fae"/><circle cx="7.7" cy="11.8" r="2.3" fill="none" stroke="#fff" stroke-width="1.3"/></svg>
<svg class="a" style="left:975.0px;top:1159.9px;" width="24.0" height="24.0" viewBox="0 0 24 24"><rect x="0" y="0" width="24" height="24" fill="#fff"/><g transform="translate(3 3) scale(.75)"><defs><linearGradient id="Lc2a" x1=".6" y1="0" x2=".3" y2="1"><stop offset="0" stop-color="#1f62d8"/><stop offset=".3" stop-color="#27a5e8"/><stop offset=".6" stop-color="#3fc77a"/><stop offset="1" stop-color="#f7d21e"/></linearGradient><linearGradient id="Lc2b" x1=".6" y1="0" x2=".3" y2="1"><stop offset="0" stop-color="#a259ec"/><stop offset=".45" stop-color="#ec5aa8"/><stop offset=".8" stop-color="#f8853a"/><stop offset="1" stop-color="#ef4e3a"/></linearGradient></defs><path d="M9.6 2.6 H14.2 C16 2.6 16.6 3.8 16.1 5.4 L13 15.8 C12.5 17.4 11.4 18.3 9.8 18.3 H4.6 C2.5 18.3 1.4 16.8 2 14.6 L4.6 5.9 C5.2 3.8 6.8 2.6 9.6 2.6 Z" fill="url(#Lc2a)"/><path d="M14.4 21.4 H9.8 C8 21.4 7.4 20.2 7.9 18.6 L11 8.2 C11.5 6.6 12.6 5.7 14.2 5.7 H19.4 C21.5 5.7 22.6 7.2 22 9.4 L19.4 18.1 C18.8 20.2 17.2 21.4 14.4 21.4 Z" fill="url(#Lc2b)"/><path d="M13.6 6.4 L10.4 17.6" stroke="#fff" stroke-width="1.5" stroke-linecap="round" opacity=".9"/></g></svg>
<svg class="a" style="left:1019.0px;top:1159.9px;" width="24.0" height="24.0" viewBox="0 0 24 24"><rect x="0" y="0" width="24" height="24" fill="#5865f2"/><path d="M6.5 8 C9 6.5 15 6.5 17.5 8 C19.5 11 20 14 19.8 16.5 C18.5 17.8 17 18.2 16 18.2 L15 16.6 C13 17.2 11 17.2 9 16.6 L8 18.2 C7 18.2 5.5 17.8 4.2 16.5 C4 14 4.5 11 6.5 8 Z" fill="#fff"/><ellipse cx="9.4" cy="12.8" rx="1.5" ry="1.8" fill="#5865f2"/><ellipse cx="14.6" cy="12.8" rx="1.5" ry="1.8" fill="#5865f2"/></svg>
<svg class="a" style="left:1062.9px;top:1159.9px;" width="24.0" height="24.0" viewBox="0 0 24 24"><rect x="0" y="0" width="24" height="24" fill="#050505"/><text x="12" y="18.5" text-anchor="middle" font-family="Liberation Serif,serif" font-size="17" fill="#fff">W</text></svg>
<div class="a" style="left:1098.9px;top:1151.4px;width:40.0px;height:40.0px;background:#2d2d2d;border:1px solid #383838;border-radius:4px;"></div>
<div class="a" style="left:1110.7px;top:1187.8px;width:16.4px;height:2.6px;background:#4cc2ff;border-radius:1.3px;"></div>
<svg class="a" style="left:1106.9px;top:1159.9px;" width="24.0" height="24.0" viewBox="0 0 24 24"><defs><linearGradient id="Lpb" x1="0" y1="0" x2="1" y2="1"><stop offset="0" stop-color="#f6d751"/><stop offset="1" stop-color="#e6ad10"/></linearGradient></defs><rect x="12.5" y="0.5" width="8" height="23" rx="1" fill="#d99a0b"/><rect x="7.5" y="7" width="8" height="16.5" rx="1" fill="#ebbb14"/><rect x="2.5" y="13" width="8" height="10.5" rx="1" fill="url(#Lpb)"/></svg>
<svg class="a" style="left:1150.8px;top:1159.9px;" width="24.0" height="24.0" viewBox="0 0 24 24"><circle cx="12" cy="12" r="10.6" fill="#2a64d8" stroke="#1d4db8" stroke-width="2" stroke-dasharray="2.4 1.6"/><path d="M5.2 12.6 A6.8 6.8 0 0 0 18.8 12.6 Z" fill="#fff"/><circle cx="12" cy="11.6" r="2.6" fill="#fff"/><circle cx="12" cy="11.8" r="1.2" fill="#2a64d8"/><path d="M6.6 8.6 A1.6 1.6 0 1 0 8.6 6.6 M15.4 6.6 A1.6 1.6 0 1 0 17.4 8.6 M10.4 5.6 A1.7 1.7 0 0 0 13.6 5.6" fill="none" stroke="#fff" stroke-width="1"/></svg>
<svg class="a" style="left:1194.8px;top:1159.9px;" width="24.0" height="24.0" viewBox="0 0 24 24"><path d="M12 0.8 A11 11 0 1 1 6 21.3 L0.8 23 L2.6 18 A11 11 0 0 1 12 0.8 Z" fill="#25d366"/><path d="M12 3 A8.8 8.8 0 1 1 6.6 19 L3.8 19.9 L4.8 17.2 A8.8 8.8 0 0 1 12 3 Z" fill="none" stroke="#fff" stroke-width="1.5"/><path d="M8.3 7.5 C9 7 9.6 7.2 9.9 8 L10.5 9.6 L9.6 10.8 C10.3 12.4 11.6 13.6 13.2 14.3 L14.4 13.4 L16 14.1 C16.8 14.4 17 15 16.5 15.7 C15.5 17.2 13.5 16.9 11.5 15.6 C9.5 14.2 7.3 11.5 7.3 9.4 C7.3 8.5 7.7 7.9 8.3 7.5 Z" fill="#fff"/></svg>
<svg class="a" style="left:1238.8px;top:1159.9px;" width="24.0" height="24.0" viewBox="0 0 24 24"><circle cx="17.5" cy="6.5" r="3" fill="#7b83eb"/><circle cx="10.5" cy="5" r="3.8" fill="#5b62d4"/><rect x="13.5" y="10" width="9.5" height="10" rx="3" fill="#5059c9"/><path d="M4 10 H17 V18 C17 24 4 24 4 18 Z" fill="#7b83eb"/><rect x="0.5" y="9" width="10.5" height="10.5" rx="1.5" fill="#4b53bc"/><text x="5.8" y="17.6" text-anchor="middle" font-family="Liberation Sans,sans-serif" font-weight="700" font-size="8.5" fill="#fff">T</text></svg>
<div class="a" style="left:1247.8px;top:1188.0px;width:6.0px;height:2.4px;background:#9a9a9a;border-radius:1.2px;"></div>
<svg class="a" style="left:1252.8px;top:1153.9px;" width="14.0" height="14.0" viewBox="0 0 14 14"><circle cx="7" cy="7" r="6.8" fill="#4cc2ff"/><text x="7" y="10.8" text-anchor="middle" font-family="Liberation Sans,sans-serif" font-size="10" fill="#0a2540">1</text></svg>
<svg class="a" style="left:1282.7px;top:1159.9px;" width="24.0" height="24.0" viewBox="0 0 24 24"><circle cx="12" cy="12" r="11.4" fill="#fbbc05"/><path d="M12 12 L2.1 6.3 A11.4 11.4 0 0 1 21.9 6.3 Z" fill="#ea4335"/><path d="M12 12 L2.1 6.3 A11.4 11.4 0 0 0 12 23.4 L17 14.9 Z" fill="#34a853"/><path d="M12 12 H21.9 V6.3 Z" fill="#ea4335"/><path d="M21.9 6.3 A11.4 11.4 0 0 1 12 23.4 L17.6 12.5 Z" fill="#fbbc05"/><circle cx="12" cy="12" r="5.2" fill="#fff"/><circle cx="12" cy="12" r="4.1" fill="#4285f4"/></svg>
<div class="a" style="left:1291.7px;top:1188.0px;width:6.0px;height:2.4px;background:#9a9a9a;border-radius:1.2px;"></div>
<svg class="a" style="left:1326.7px;top:1159.9px;" width="24.0" height="24.0" viewBox="0 0 24 24"><rect x="8" y="2" width="15.5" height="20" rx="1.2" fill="#21a366"/><rect x="12" y="4.5" width="10" height="15" fill="#fff"/><path d="M12 8.2 H22 M12 12 H22 M12 15.8 H22 M17 4.5 V19.5" stroke="#21a366" stroke-width="0.9"/><path d="M0.5 3.5 L13.5 0.8 V23.2 L0.5 20.5 Z" fill="#107c41"/><path d="M4 7.5 L10 16.5 M10 7.5 L4 16.5" stroke="#fff" stroke-width="2"/></svg>
<svg class="a" style="left:1370.6px;top:1159.9px;" width="24.0" height="24.0" viewBox="0 0 24 24"><rect x="0.8" y="1" width="22.4" height="11" fill="#8a98a8"/><rect x="0.8" y="12" width="22.4" height="11" fill="#2d6fb8"/><path d="M7.5 12 A4.5 4.5 0 0 0 16.5 12 Z" fill="#fff"/><path d="M9.5 12 A2.5 2.5 0 0 0 14.5 12 Z" fill="#16202c"/></svg>
<svg class="a" style="left:1414.6px;top:1159.9px;" width="24.0" height="24.0" viewBox="0 0 24 24"><circle cx="12" cy="12" r="11.5" fill="#ff6c37"/><path d="M6 18 L13.5 9.5 L15.5 11.5 L7.5 18.5 Z M14.5 8.5 L17.5 5.5 L19 7 L16.5 10.5 Z" fill="#fff" opacity=".9"/></svg>
<svg class="a" style="left:1458.6px;top:1159.9px;" width="24.0" height="24.0" viewBox="0 0 24 24"><rect x="3" y="2.5" width="18" height="19.5" rx="1.5" fill="#3bb4e8"/><rect x="3" y="20.5" width="18" height="2.5" fill="#c96a1e"/><path d="M6.5 7.5 H17.5 M6.5 10.5 H17.5 M6.5 13.5 H17.5 M6.5 16.5 H17.5" stroke="#15669a" stroke-width="1.2"/><path d="M6 1 V4 M9 1 V4 M12 1 V4 M15 1 V4 M18 1 V4" stroke="#9fdcff" stroke-width="1.1"/></svg>
<svg class="a" style="left:1502.5px;top:1159.9px;" width="24.0" height="24.0" viewBox="0 0 24 24"><rect x="3.5" y="0.8" width="17" height="22.4" rx="1.8" fill="#6c7a89"/><rect x="5.8" y="3" width="12.4" height="4.6" fill="#58c4f0"/><g fill="#dfe5ea"><rect x="5.8" y="9.6" width="3.4" height="3.2"/><rect x="10.3" y="9.6" width="3.4" height="3.2"/><rect x="14.8" y="9.6" width="3.4" height="3.2"/><rect x="5.8" y="14" width="3.4" height="3.2"/><rect x="10.3" y="14" width="3.4" height="3.2"/><rect x="5.8" y="18.4" width="3.4" height="3.2"/><rect x="10.3" y="18.4" width="3.4" height="3.2"/></g><rect x="14.8" y="14" width="3.4" height="7.6" fill="#1a5fb0"/></svg>
<svg class="a" style="left:1546.5px;top:1159.9px;" width="24.0" height="24.0" viewBox="0 0 24 24"><rect x="0.8" y="0.8" width="17" height="17" rx="2.5" fill="#f1f1f1"/><rect x="4" y="4" width="10.5" height="10.5" fill="none" stroke="#c42b1c" stroke-width="1.6" stroke-dasharray="2.2 1.4"/><path d="M13 12 L21 20 M13 21 L22 13" stroke="#2a8ad8" stroke-width="1.5"/><circle cx="22" cy="13" r="1.8" fill="none" stroke="#2a8ad8" stroke-width="1.3"/><circle cx="21" cy="21.5" r="1.8" fill="none" stroke="#2a8ad8" stroke-width="1.3"/></svg>
<svg class="a" style="left:1590.4px;top:1159.9px;" width="24.0" height="24.0" viewBox="0 0 24 24"><defs><linearGradient id="Lc3a" x1=".6" y1="0" x2=".3" y2="1"><stop offset="0" stop-color="#1f62d8"/><stop offset=".3" stop-color="#27a5e8"/><stop offset=".6" stop-color="#3fc77a"/><stop offset="1" stop-color="#f7d21e"/></linearGradient><linearGradient id="Lc3b" x1=".6" y1="0" x2=".3" y2="1"><stop offset="0" stop-color="#a259ec"/><stop offset=".45" stop-color="#ec5aa8"/><stop offset=".8" stop-color="#f8853a"/><stop offset="1" stop-color="#ef4e3a"/></linearGradient></defs><path d="M9.6 2.6 H14.2 C16 2.6 16.6 3.8 16.1 5.4 L13 15.8 C12.5 17.4 11.4 18.3 9.8 18.3 H4.6 C2.5 18.3 1.4 16.8 2 14.6 L4.6 5.9 C5.2 3.8 6.8 2.6 9.6 2.6 Z" fill="url(#Lc3a)"/><path d="M14.4 21.4 H9.8 C8 21.4 7.4 20.2 7.9 18.6 L11 8.2 C11.5 6.6 12.6 5.7 14.2 5.7 H19.4 C21.5 5.7 22.6 7.2 22 9.4 L19.4 18.1 C18.8 20.2 17.2 21.4 14.4 21.4 Z" fill="url(#Lc3b)"/><path d="M13.6 6.4 L10.4 17.6" stroke="#fff" stroke-width="1.5" stroke-linecap="round" opacity=".9"/></svg>
<svg class="a" style="left:1634.4px;top:1159.9px;" width="24.0" height="24.0" viewBox="0 0 24 24"><rect x="0" y="0" width="24" height="24" fill="#0b2a57"/><path d="M7 5.5 L19 12 L7 18.5 L10 12 Z" fill="none" stroke="#4aa8ff" stroke-width="1.8" stroke-linejoin="round"/><path d="M4 8 V16" stroke="#2a78d8" stroke-width="1.6"/></svg>
<span class="t" style="left:1852.0px;top:1159.0px;font-size:12.4px;line-height:12.4px;color:#fff;transform:scaleX(0.966);">10:58 AM</span>
<span class="t" style="left:1841.0px;top:1175.0px;font-size:12.4px;line-height:12.4px;color:#fff;transform:scaleX(0.993);">03/27/2026</span>
<div class="a" style="left:1922.0px;top:1034.0px;width:1920.0px;height:162.0px;background:#000;"></div>
<div class="a" style="left:1922.0px;top:1034.0px;width:1920.0px;height:47.8px;background:#1e1e1e;border-top:1px solid #3a3a3a;"></div>
<svg class="a" style="left:2140.0px;top:1046.8px;" width="23.4" height="23.4" viewBox="0 0 23.4 23.4"><defs><linearGradient id="Rst" x1="0" y1="0" x2="1" y2="1"><stop offset="0" stop-color="#6fd8ff"/><stop offset="1" stop-color="#1c9ef0"/></linearGradient></defs><g fill="url(#Rst)"><rect x="0" y="0" width="11" height="11" rx="0.8"/><rect x="12.4" y="0" width="11" height="11" rx="0.8"/><rect x="0" y="12.4" width="11" height="11" rx="0.8"/><rect x="12.4" y="12.4" width="11" height="11" rx="0.8"/></g></svg>
<div class="a" style="left:2176.6px;top:1042.2px;width:219.6px;height:32.0px;background:#3b3b3b;border:1px solid #4a4a4a;border-radius:16px;"></div>
<svg class="a" style="left:2187.4px;top:1050.3px;" width="16.0" height="16.5" viewBox="0 0 16 16.5"><circle cx="7" cy="7" r="5.8" fill="none" stroke="#f2f2f2" stroke-width="1.6"/><path d="M11.2 11.4 L15.4 15.8" stroke="#f2f2f2" stroke-width="1.7"/></svg>
<span class="t" style="left:2213.0px;top:1051.5px;font-size:13.6px;line-height:13.6px;color:#e8e8e8;transform:scaleX(0.956);">Search</span>
<svg class="a" style="left:2346.6px;top:1044.8px;" width="41.0" height="27.0" viewBox="0 0 41 27"><defs><radialGradient id="Rth" cx=".5" cy=".75" r=".8"><stop offset="0" stop-color="#ffd36a"/><stop offset=".45" stop-color="#f08a1d"/><stop offset="1" stop-color="#c9480a"/></radialGradient></defs><path d="M0 27 V17 C0 -5 41 -5 41 17 V27 Z" fill="url(#Rth)"/><path d="M6 27 V18 C6 3 35 3 35 18 V27" fill="none" stroke="#d9640f" stroke-width="1.6"/><path d="M11 27 V18 C11 8 30 8 30 18 V27" fill="none" stroke="#c2500a" stroke-width="1.4"/><path d="M15.5 27 V19 C15.5 12.5 25.5 12.5 25.5 19 V27 Z" fill="#8c1c0c"/><rect x="9" y="23.5" width="23" height="3.5" fill="#a82410"/><path d="M0 27 L4 21 L9 25 Z M41 27 L37 21 L32 25 Z" fill="#b0300f"/></svg>
<svg class="a" style="left:2408.4px;top:1046.3px;" width="24.0" height="24.0" viewBox="0 0 24 24"><rect x="8.5" y="2.5" width="15" height="13" rx="1.5" fill="#f2f2f2"/><rect x="0.5" y="8.5" width="15" height="13" rx="1.5" fill="#8e8e8e" opacity=".9"/></svg>
<svg class="a" style="left:2452.4px;top:1046.3px;" width="24.0" height="24.0" viewBox="0 0 24 24"><defs><linearGradient id="Rc1a" x1=".6" y1="0" x2=".3" y2="1"><stop offset="0" stop-color="#1f62d8"/><stop offset=".3" stop-color="#27a5e8"/><stop offset=".6" stop-color="#3fc77a"/><stop offset="1" stop-color="#f7d21e"/></linearGradient><linearGradient id="Rc1b" x1=".6" y1="0" x2=".3" y2="1"><stop offset="0" stop-color="#a259ec"/><stop offset=".45" stop-color="#ec5aa8"/><stop offset=".8" stop-color="#f8853a"/><stop offset="1" stop-color="#ef4e3a"/></linearGradient></defs><path d="M9.6 2.6 H14.2 C16 2.6 16.6 3.8 16.1 5.4 L13 15.8 C12.5 17.4 11.4 18.3 9.8 18.3 H4.6 C2.5 18.3 1.4 16.8 2 14.6 L4.6 5.9 C5.2 3.8 6.8 2.6 9.6 2.6 Z" fill="url(#Rc1a)"/><path d="M14.4 21.4 H9.8 C8 21.4 7.4 20.2 7.9 18.6 L11 8.2 C11.5 6.6 12.6 5.7 14.2 5.7 H19.4 C21.5 5.7 22.6 7.2 22 9.4 L19.4 18.1 C18.8 20.2 17.2 21.4 14.4 21.4 Z" fill="url(#Rc1b)"/><path d="M13.6 6.4 L10.4 17.6" stroke="#fff" stroke-width="1.5" stroke-linecap="round" opacity=".9"/><rect x="5" y="16.5" width="19" height="7.5" fill="#1e1e1e"/><text x="6" y="23" font-family="Liberation Sans,sans-serif" font-weight="700" font-size="6.8" fill="#fff">M365</text></svg>
<svg class="a" style="left:2496.3px;top:1046.3px;" width="24.0" height="24.0" viewBox="0 0 24 24"><path d="M0.5 3.5 C0.5 2.6 1 2.2 1.8 2.2 H8 L10.5 4.8 H22 C23 4.8 23.5 5.3 23.5 6.2 V20 C23.5 21 23 21.5 22 21.5 H2 C1 21.5 0.5 21 0.5 20 Z" fill="#e8a820"/><path d="M0.5 8 H23.5 V20 C23.5 21 23 21.5 22 21.5 H2 C1 21.5 0.5 21 0.5 20 Z" fill="#fbd44c"/><rect x="6.5" y="15.5" width="11" height="6" rx="1" fill="#1a78d0"/></svg>
<svg class="a" style="left:2540.3px;top:1046.3px;" width="24.0" height="24.0" viewBox="0 0 24 24"><defs><linearGradient id="Red" x1="0" y1="0" x2="1" y2="1"><stop offset="0" stop-color="#35c1a0"/><stop offset=".5" stop-color="#1a8fd8"/><stop offset="1" stop-color="#0c59a4"/></linearGradient></defs><circle cx="12" cy="12" r="11.5" fill="url(#Red)"/><path d="M3 15 C3 8 16 5 20.5 12.5 C21.5 15 19 17 16 16.5 C13 16 12.5 13 14 11.5 C10 10.5 7 14 9 18.5 C10 21 13 22.5 16 22.5 C8 25 3 20 3 15 Z" fill="#0c4a8c" opacity=".85"/><path d="M1 10 C4 2 18 0 22.5 9 C18 4 8 4.5 5.5 11 Z" fill="#5fe0a8" opacity=".7"/></svg>
<svg class="a" style="left:2584.2px;top:1046.3px;" width="24.0" height="24.0" viewBox="0 0 24 24"><path d="M7.5 6 V4.5 C7.5 0.8 16.5 0.8 16.5 4.5 V6" fill="none" stroke="#2a9ae0" stroke-width="1.8"/><rect x="0.8" y="5.5" width="22.4" height="17.5" rx="3" fill="#f3f3f3"/><rect x="7" y="9.5" width="4.4" height="4.4" fill="#f25022"/><rect x="12.6" y="9.5" width="4.4" height="4.4" fill="#7fba00"/><rect x="7" y="15" width="4.4" height="4.4" fill="#00a4ef"/><rect x="12.6" y="15" width="4.4" height="4.4" fill="#ffb900"/></svg>
<svg class="a" style="left:2628.2px;top:1046.3px;" width="24.0" height="24.0" viewBox="0 0 24 24"><path d="M3 9 L14 1.5 L23 8 V20 C23 21 22.4 21.5 21.5 21.5 H5 Z" fill="#1f6fd0"/><path d="M5 11 L16 4 L23 9 V20 L12 21.5 Z" fill="#54a8f0"/><path d="M8 21.5 L23 11 V20 C23 21 22.4 21.5 21.5 21.5 Z" fill="#7cc8ff"/><rect x="1" y="11.5" width="10.5" height="10.5" rx="2" fill="#0f4fa0"/><circle cx="6.2" cy="16.8" r="2.6" fill="none" stroke="#fff" stroke-width="1.4"/></svg>
<svg class="a" style="left:2672.2px;top:1046.3px;" width="24.0" height="24.0" viewBox="0 0 24 24"><rect x="2" y="4.5" width="20" height="15" rx="5" fill="#f00032"/><path d="M10 8.5 V15.5 L15.8 12 Z" fill="#fff"/></svg>
<svg class="a" style="left:2716.1px;top:1046.3px;" width="24.0" height="24.0" viewBox="0 0 24 24"><rect x="0" y="0" width="24" height="24" fill="#fff"/><rect x="9" y="5.5" width="12" height="12.5" rx="1" fill="#1a7fd4"/><path d="M9 9 L15 13 L21 9" fill="none" stroke="#7fc4f5" stroke-width="1.2"/><rect x="3" y="7" width="9.5" height="9.5" rx="1.2" fill="#0f5fae"/><circle cx="7.7" cy="11.8" r="2.3" fill="none" stroke="#fff" stroke-width="1.3"/></svg>
<svg class="a" style="left:2760.1px;top:1046.3px;" width="24.0" height="24.0" viewBox="0 0 24 24"><rect x="0" y="0" width="24" height="24" fill="#050505"/><path d="M8 5.5 L19 8.2 L16.3 19 L5.3 16.3 Z" fill="#fff"/><rect x="10.6" y="10.6" width="3.2" height="3.2" fill="#050505" transform="rotate(14 12.2 12.2)"/></svg>
<svg class="a" style="left:2804.0px;top:1046.3px;" width="24.0" height="24.0" viewBox="0 0 24 24"><rect x="0" y="0" width="24" height="24" fill="#fff"/><rect x="9" y="5.5" width="12" height="12.5" rx="1" fill="#1a7fd4"/><path d="M9 9 L15 13 L21 9" fill="none" stroke="#7fc4f5" stroke-width="1.2"/><rect x="3" y="7" width="9.5" height="9.5" rx="1.2" fill="#0f5fae"/><circle cx="7.7" cy="11.8" r="2.3" fill="none" stroke="#fff" stroke-width="1.3"/></svg>
<svg class="a" style="left:2848.0px;top:1046.3px;" width="24.0" height="24.0" viewBox="0 0 24 24"><rect x="0" y="0" width="24" height="24" fill="#fff"/><g transform="translate(3 3) scale(.75)"><defs><linearGradient id="Rc2a" x1=".6" y1="0" x2=".3" y2="1"><stop offset="0" stop-color="#1f62d8"/><stop offset=".3" stop-color="#27a5e8"/><stop offset=".6" stop-color="#3fc77a"/><stop offset="1" stop-color="#f7d21e"/></linearGradient><linearGradient id="Rc2b" x1=".6" y1="0" x2=".3" y2="1"><stop offset="0" stop-color="#a259ec"/><stop offset=".45" stop-color="#ec5aa8"/><stop offset=".8" stop-color="#f8853a"/><stop offset="1" stop-color="#ef4e3a"/></linearGradient></defs><path d="M9.6 2.6 H14.2 C16 2.6 16.6 3.8 16.1 5.4 L13 15.8 C12.5 17.4 11.4 18.3 9.8 18.3 H4.6 C2.5 18.3 1.4 16.8 2 14.6 L4.6 5.9 C5.2 3.8 6.8 2.6 9.6 2.6 Z" fill="url(#Rc2a)"/><path d="M14.4 21.4 H9.8 C8 21.4 7.4 20.2 7.9 18.6 L11 8.2 C11.5 6.6 12.6 5.7 14.2 5.7 H19.4 C21.5 5.7 22.6 7.2 22 9.4 L19.4 18.1 C18.8 20.2 17.2 21.4 14.4 21.4 Z" fill="url(#Rc2b)"/><path d="M13.6 6.4 L10.4 17.6" stroke="#fff" stroke-width="1.5" stroke-linecap="round" opacity=".9"/></g></svg>
<svg class="a" style="left:2892.0px;top:1046.3px;" width="24.0" height="24.0" viewBox="0 0 24 24"><rect x="0" y="0" width="24" height="24" fill="#5865f2"/><path d="M6.5 8 C9 6.5 15 6.5 17.5 8 C19.5 11 20 14 19.8 16.5 C18.5 17.8 17 18.2 16 18.2 L15 16.6 C13 17.2 11 17.2 9 16.6 L8 18.2 C7 18.2 5.5 17.8 4.2 16.5 C4 14 4.5 11 6.5 8 Z" fill="#fff"/><ellipse cx="9.4" cy="12.8" rx="1.5" ry="1.8" fill="#5865f2"/><ellipse cx="14.6" cy="12.8" rx="1.5" ry="1.8" fill="#5865f2"/></svg>
<svg class="a" style="left:2935.9px;top:1046.3px;" width="24.0" height="24.0" viewBox="0 0 24 24"><rect x="0" y="0" width="24" height="24" fill="#050505"/><text x="12" y="18.5" text-anchor="middle" font-family="Liberation Serif,serif" font-size="17" fill="#fff">W</text></svg>
<div class="a" style="left:2971.9px;top:1037.8px;width:40.0px;height:40.0px;background:#2d2d2d;border:1px solid #383838;border-radius:4px;"></div>
<div class="a" style="left:2983.7px;top:1074.2px;width:16.4px;height:2.6px;background:#4cc2ff;border-radius:1.3px;"></div>
<svg class="a" style="left:2979.9px;top:1046.3px;" width="24.0" height="24.0" viewBox="0 0 24 24"><defs><linearGradient id="Rpb" x1="0" y1="0" x2="1" y2="1"><stop offset="0" stop-color="#f6d751"/><stop offset="1" stop-color="#e6ad10"/></linearGradient></defs><rect x="12.5" y="0.5" width="8" height="23" rx="1" fill="#d99a0b"/><rect x="7.5" y="7" width="8" height="16.5" rx="1" fill="#ebbb14"/><rect x="2.5" y="13" width="8" height="10.5" rx="1" fill="url(#Rpb)"/></svg>
<svg class="a" style="left:3023.8px;top:1046.3px;" width="24.0" height="24.0" viewBox="0 0 24 24"><circle cx="12" cy="12" r="10.6" fill="#2a64d8" stroke="#1d4db8" stroke-width="2" stroke-dasharray="2.4 1.6"/><path d="M5.2 12.6 A6.8 6.8 0 0 0 18.8 12.6 Z" fill="#fff"/><circle cx="12" cy="11.6" r="2.6" fill="#fff"/><circle cx="12" cy="11.8" r="1.2" fill="#2a64d8"/><path d="M6.6 8.6 A1.6 1.6 0 1 0 8.6 6.6 M15.4 6.6 A1.6 1.6 0 1 0 17.4 8.6 M10.4 5.6 A1.7 1.7 0 0 0 13.6 5.6" fill="none" stroke="#fff" stroke-width="1"/></svg>
<svg class="a" style="left:3067.8px;top:1046.3px;" width="24.0" height="24.0" viewBox="0 0 24 24"><path d="M12 0.8 A11 11 0 1 1 6 21.3 L0.8 23 L2.6 18 A11 11 0 0 1 12 0.8 Z" fill="#25d366"/><path d="M12 3 A8.8 8.8 0 1 1 6.6 19 L3.8 19.9 L4.8 17.2 A8.8 8.8 0 0 1 12 3 Z" fill="none" stroke="#fff" stroke-width="1.5"/><path d="M8.3 7.5 C9 7 9.6 7.2 9.9 8 L10.5 9.6 L9.6 10.8 C10.3 12.4 11.6 13.6 13.2 14.3 L14.4 13.4 L16 14.1 C16.8 14.4 17 15 16.5 15.7 C15.5 17.2 13.5 16.9 11.5 15.6 C9.5 14.2 7.3 11.5 7.3 9.4 C7.3 8.5 7.7 7.9 8.3 7.5 Z" fill="#fff"/></svg>
<svg class="a" style="left:3111.8px;top:1046.3px;" width="24.0" height="24.0" viewBox="0 0 24 24"><circle cx="17.5" cy="6.5" r="3" fill="#7b83eb"/><circle cx="10.5" cy="5" r="3.8" fill="#5b62d4"/><rect x="13.5" y="10" width="9.5" height="10" rx="3" fill="#5059c9"/><path d="M4 10 H17 V18 C17 24 4 24 4 18 Z" fill="#7b83eb"/><rect x="0.5" y="9" width="10.5" height="10.5" rx="1.5" fill="#4b53bc"/><text x="5.8" y="17.6" text-anchor="middle" font-family="Liberation Sans,sans-serif" font-weight="700" font-size="8.5" fill="#fff">T</text></svg>
<div class="a" style="left:3120.8px;top:1074.4px;width:6.0px;height:2.4px;background:#9a9a9a;border-radius:1.2px;"></div>
<svg class="a" style="left:3125.8px;top:1040.3px;" width="14.0" height="14.0" viewBox="0 0 14 14"><circle cx="7" cy="7" r="6.8" fill="#4cc2ff"/><text x="7" y="10.8" text-anchor="middle" font-family="Liberation Sans,sans-serif" font-size="10" fill="#0a2540">1</text></svg>
<svg class="a" style="left:3155.7px;top:1046.3px;" width="24.0" height="24.0" viewBox="0 0 24 24"><circle cx="12" cy="12" r="11.4" fill="#fbbc05"/><path d="M12 12 L2.1 6.3 A11.4 11.4 0 0 1 21.9 6.3 Z" fill="#ea4335"/><path d="M12 12 L2.1 6.3 A11.4 11.4 0 0 0 12 23.4 L17 14.9 Z" fill="#34a853"/><path d="M12 12 H21.9 V6.3 Z" fill="#ea4335"/><path d="M21.9 6.3 A11.4 11.4 0 0 1 12 23.4 L17.6 12.5 Z" fill="#fbbc05"/><circle cx="12" cy="12" r="5.2" fill="#fff"/><circle cx="12" cy="12" r="4.1" fill="#4285f4"/></svg>
<div class="a" style="left:3164.7px;top:1074.4px;width:6.0px;height:2.4px;background:#9a9a9a;border-radius:1.2px;"></div>
<svg class="a" style="left:3199.7px;top:1046.3px;" width="24.0" height="24.0" viewBox="0 0 24 24"><rect x="8" y="2" width="15.5" height="20" rx="1.2" fill="#21a366"/><rect x="12" y="4.5" width="10" height="15" fill="#fff"/><path d="M12 8.2 H22 M12 12 H22 M12 15.8 H22 M17 4.5 V19.5" stroke="#21a366" stroke-width="0.9"/><path d="M0.5 3.5 L13.5 0.8 V23.2 L0.5 20.5 Z" fill="#107c41"/><path d="M4 7.5 L10 16.5 M10 7.5 L4 16.5" stroke="#fff" stroke-width="2"/></svg>
<svg class="a" style="left:3243.6px;top:1046.3px;" width="24.0" height="24.0" viewBox="0 0 24 24"><rect x="0.8" y="1" width="22.4" height="11" fill="#8a98a8"/><rect x="0.8" y="12" width="22.4" height="11" fill="#2d6fb8"/><path d="M7.5 12 A4.5 4.5 0 0 0 16.5 12 Z" fill="#fff"/><path d="M9.5 12 A2.5 2.5 0 0 0 14.5 12 Z" fill="#16202c"/></svg>
<svg class="a" style="left:3287.6px;top:1046.3px;" width="24.0" height="24.0" viewBox="0 0 24 24"><circle cx="12" cy="12" r="11.5" fill="#ff6c37"/><path d="M6 18 L13.5 9.5 L15.5 11.5 L7.5 18.5 Z M14.5 8.5 L17.5 5.5 L19 7 L16.5 10.5 Z" fill="#fff" opacity=".9"/></svg>
<svg class="a" style="left:3331.6px;top:1046.3px;" width="24.0" height="24.0" viewBox="0 0 24 24"><rect x="3" y="2.5" width="18" height="19.5" rx="1.5" fill="#3bb4e8"/><rect x="3" y="20.5" width="18" height="2.5" fill="#c96a1e"/><path d="M6.5 7.5 H17.5 M6.5 10.5 H17.5 M6.5 13.5 H17.5 M6.5 16.5 H17.5" stroke="#15669a" stroke-width="1.2"/><path d="M6 1 V4 M9 1 V4 M12 1 V4 M15 1 V4 M18 1 V4" stroke="#9fdcff" stroke-width="1.1"/></svg>
<svg class="a" style="left:3375.5px;top:1046.3px;" width="24.0" height="24.0" viewBox="0 0 24 24"><rect x="3.5" y="0.8" width="17" height="22.4" rx="1.8" fill="#6c7a89"/><rect x="5.8" y="3" width="12.4" height="4.6" fill="#58c4f0"/><g fill="#dfe5ea"><rect x="5.8" y="9.6" width="3.4" height="3.2"/><rect x="10.3" y="9.6" width="3.4" height="3.2"/><rect x="14.8" y="9.6" width="3.4" height="3.2"/><rect x="5.8" y="14" width="3.4" height="3.2"/><rect x="10.3" y="14" width="3.4" height="3.2"/><rect x="5.8" y="18.4" width="3.4" height="3.2"/><rect x="10.3" y="18.4" width="3.4" height="3.2"/></g><rect x="14.8" y="14" width="3.4" height="7.6" fill="#1a5fb0"/></svg>
<svg class="a" style="left:3419.5px;top:1046.3px;" width="24.0" height="24.0" viewBox="0 0 24 24"><rect x="0.8" y="0.8" width="17" height="17" rx="2.5" fill="#f1f1f1"/><rect x="4" y="4" width="10.5" height="10.5" fill="none" stroke="#c42b1c" stroke-width="1.6" stroke-dasharray="2.2 1.4"/><path d="M13 12 L21 20 M13 21 L22 13" stroke="#2a8ad8" stroke-width="1.5"/><circle cx="22" cy="13" r="1.8" fill="none" stroke="#2a8ad8" stroke-width="1.3"/><circle cx="21" cy="21.5" r="1.8" fill="none" stroke="#2a8ad8" stroke-width="1.3"/></svg>
<svg class="a" style="left:3463.4px;top:1046.3px;" width="24.0" height="24.0" viewBox="0 0 24 24"><defs><linearGradient id="Rc3a" x1=".6" y1="0" x2=".3" y2="1"><stop offset="0" stop-color="#1f62d8"/><stop offset=".3" stop-color="#27a5e8"/><stop offset=".6" stop-color="#3fc77a"/><stop offset="1" stop-color="#f7d21e"/></linearGradient><linearGradient id="Rc3b" x1=".6" y1="0" x2=".3" y2="1"><stop offset="0" stop-color="#a259ec"/><stop offset=".45" stop-color="#ec5aa8"/><stop offset=".8" stop-color="#f8853a"/><stop offset="1" stop-color="#ef4e3a"/></linearGradient></defs><path d="M9.6 2.6 H14.2 C16 2.6 16.6 3.8 16.1 5.4 L13 15.8 C12.5 17.4 11.4 18.3 9.8 18.3 H4.6 C2.5 18.3 1.4 16.8 2 14.6 L4.6 5.9 C5.2 3.8 6.8 2.6 9.6 2.6 Z" fill="url(#Rc3a)"/><path d="M14.4 21.4 H9.8 C8 21.4 7.4 20.2 7.9 18.6 L11 8.2 C11.5 6.6 12.6 5.7 14.2 5.7 H19.4 C21.5 5.7 22.6 7.2 22 9.4 L19.4 18.1 C18.8 20.2 17.2 21.4 14.4 21.4 Z" fill="url(#Rc3b)"/><path d="M13.6 6.4 L10.4 17.6" stroke="#fff" stroke-width="1.5" stroke-linecap="round" opacity=".9"/></svg>
<svg class="a" style="left:3507.4px;top:1046.3px;" width="24.0" height="24.0" viewBox="0 0 24 24"><rect x="0" y="0" width="24" height="24" fill="#0b2a57"/><path d="M7 5.5 L19 12 L7 18.5 L10 12 Z" fill="none" stroke="#4aa8ff" stroke-width="1.8" stroke-linejoin="round"/><path d="M4 8 V16" stroke="#2a78d8" stroke-width="1.6"/></svg>
<span class="t" style="left:3772.0px;top:1044.4px;font-size:12.4px;line-height:12.4px;color:#fff;transform:scaleX(0.966);">10:58 AM</span>
<span class="t" style="left:3761.0px;top:1060.4px;font-size:12.4px;line-height:12.4px;color:#fff;transform:scaleX(0.993);">03/27/2026</span>
<svg class="a" style="left:3610.7px;top:1054.7px;" width="11.0" height="6.6" viewBox="0 0 11 6.6"><path d="M0.8 5.8 L5.5 1 L10.2 5.8" fill="none" stroke="#fff" stroke-width="1.5"/></svg>
<svg class="a" style="left:3638.6px;top:1050.3px;" width="18.0" height="15.0" viewBox="0 0 18 15"><path d="M4 11 C0.5 11 0.2 6.5 3.6 6.2 C4 1.5 10.5 1 11.5 5.2 C15 4.6 16 10 12.6 11 Z" fill="#d8d8d8"/><circle cx="13.4" cy="10.6" r="4" fill="#e8113a"/><path d="M11.9 9.1 L14.9 12.1 M14.9 9.1 L11.9 12.1" stroke="#fff" stroke-width="1"/></svg>
<svg class="a" style="left:3671.6px;top:1051.8px;" width="16.6" height="11.6" viewBox="0 0 16.6 11.6"><rect x="0.6" y="0.6" width="15.4" height="10.4" rx="1.6" fill="none" stroke="#fff" stroke-width="1.1"/><path d="M3 3.6 H4.3 M6 3.6 H7.3 M9 3.6 H10.3 M12 3.6 H13.3 M3 5.8 H4.3 M6 5.8 H7.3 M9 5.8 H10.3 M12 5.8 H13.3 M4.5 8.2 H12" stroke="#fff" stroke-width="1.1"/></svg>
<svg class="a" style="left:3703.9px;top:1051.8px;" width="16.0" height="13.0" viewBox="0 0 16 13"><path d="M0.8 4.4 C5 0 11 0 15.2 4.4 M3.2 7 C6 4.2 10 4.2 12.8 7 M5.6 9.4 C7 8 9 8 10.4 9.4" fill="none" stroke="#fff" stroke-width="1.3"/><circle cx="8" cy="11.4" r="1.1" fill="#fff"/></svg>
<svg class="a" style="left:3728.0px;top:1051.3px;" width="17.0" height="14.0" viewBox="0 0 17 14"><path d="M0.8 4.6 H3.6 L7.4 1.2 V12.8 L3.6 9.4 H0.8 Z" fill="none" stroke="#fff" stroke-width="1.1" stroke-linejoin="round"/><path d="M9.6 4.6 C10.8 6 10.8 8 9.6 9.4 M11.8 2.8 C14 5.2 14 8.8 11.8 11.2 M14 1 C17.2 4.6 17.2 9.4 14 13" fill="none" stroke="#fff" stroke-width="1.1"/></svg>
<span class="t" style="left:1942.0px;top:1045.1px;font-size:12.4px;line-height:12.4px;color:#fff;transform:scaleX(0.977);">Dhuhr</span>
<span class="t" style="left:1933.5px;top:1061.1px;font-size:12.4px;line-height:12.4px;color:#fff;transform:scaleX(0.923);">12:08 PM</span>
<span class="t" style="left:1997.0px;top:1045.1px;font-size:12.4px;line-height:12.4px;color:#fff;transform:scaleX(1.008);">After</span>
<span class="t" style="left:1995.8px;top:1061.1px;font-size:12.4px;line-height:12.4px;color:#fff;transform:scaleX(0.915);">01:09</span>
<div class="a" style="left:10.0px;top:186.3px;width:1904.0px;height:40.0px;background:#fff;border-radius:8px;box-shadow:0 1.5px 3px rgba(0,0,0,.22);"></div>
<svg class="a" style="left:30.0px;top:200.0px;" width="19.0" height="19.0" viewBox="0 0 19 19"><path d="M5.5 3 H1.5 V17.5 H7" fill="none" stroke="#e07b16" stroke-width="1.3"/><path d="M5.5 4.5 V2.5 H8 C8 0.8 10.6 0.8 10.6 2.5 H13 V4.5 Z" fill="none" stroke="#777" stroke-width="1.1"/><path d="M13 3 H17 V7" fill="none" stroke="#e07b16" stroke-width="1.3"/><rect x="7.6" y="7.6" width="10" height="11" fill="#fff" stroke="#444" stroke-width="1.2"/></svg>
<svg class="a" style="left:52.4px;top:209.2px;" width="9.2" height="4.6" viewBox="0 0 9.2 4.6"><path d="M0.5 0.3 L4.6 4.1 L8.7 0.3" fill="none" stroke="#333" stroke-width="1.3"/></svg>
<svg class="a" style="left:77.0px;top:200.0px;" width="21.0" height="19.0" viewBox="0 0 21 19"><path d="M1.5 8.5 L9 5 L14.5 13 L10 18 Z" fill="#f5b25e" stroke="#e07b16" stroke-width="1.3" stroke-linejoin="round"/><path d="M9 5 L12 3.5 L17 10.5 L14.5 13" fill="none" stroke="#444" stroke-width="1.2"/><path d="M13.5 5 L17.5 1 L19.5 3 L15.5 7.5" fill="none" stroke="#444" stroke-width="1.2"/></svg>
<div class="a" style="left:110.9px;top:194.5px;width:1.0px;height:23.5px;background:#d6d6d6;"></div>
<svg class="a" style="left:128.0px;top:200.0px;" width="20.0" height="20.0" viewBox="0 0 20 20"><ellipse cx="8" cy="3.6" rx="6.6" ry="2.6" fill="none" stroke="#555" stroke-width="1.2"/><path d="M1.4 3.6 V15 C1.4 16.5 4 17.4 6.5 17.5 M14.6 3.6 V8" fill="none" stroke="#555" stroke-width="1.2"/><rect x="8" y="9.5" width="10.8" height="9.5" fill="#fff" stroke="#444" stroke-width="1.1"/><path d="M8 12.7 H18.8 M8 15.9 H18.8 M13.4 9.5 V19" stroke="#444" stroke-width="1"/></svg>
<svg class="a" style="left:150.7px;top:209.2px;" width="9.2" height="4.6" viewBox="0 0 9.2 4.6"><path d="M0.5 0.3 L4.6 4.1 L8.7 0.3" fill="none" stroke="#333" stroke-width="1.3"/></svg>
<svg class="a" style="left:176.5px;top:200.0px;" width="19.0" height="20.0" viewBox="0 0 19 20"><path d="M9.5 18 H1.5 V1 H9 L13.5 5.5 V9 M9 1 V5.5 H13.5" fill="none" stroke="#555" stroke-width="1.2"/><circle cx="12.2" cy="14" r="5" fill="#fff" stroke="#1a73c8" stroke-width="1.3"/><path d="M12.2 11 V14.2 H14.8" fill="none" stroke="#1a73c8" stroke-width="1.2"/></svg>
<svg class="a" style="left:199.0px;top:209.2px;" width="9.2" height="4.6" viewBox="0 0 9.2 4.6"><path d="M0.5 0.3 L4.6 4.1 L8.7 0.3" fill="none" stroke="#333" stroke-width="1.3"/></svg>
<div class="a" style="left:216.9px;top:194.5px;width:1.0px;height:23.5px;background:#d6d6d6;"></div>
<svg class="a" style="left:232.0px;top:199.5px;" width="21.0" height="21.0" viewBox="0 0 21 21"><path d="M1 1 H18.5" stroke="#555" stroke-width="2"/><path d="M1 1 V17 H8 M1 6.3 H18.5 M1 11.6 H11 M7 1 V17 M13 1 V9 M18.5 1 V6.5" fill="none" stroke="#555" stroke-width="1.1"/><path d="M17 5.5 L20 8.5 L9.5 19 L5.5 20.3 L6.8 16 Z" fill="#fff" stroke="#1a73c8" stroke-width="1.3" stroke-linejoin="round"/></svg>
<svg class="a" style="left:257.2px;top:209.2px;" width="9.2" height="4.6" viewBox="0 0 9.2 4.6"><path d="M0.5 0.3 L4.6 4.1 L8.7 0.3" fill="none" stroke="#333" stroke-width="1.3"/></svg>
<svg class="a" style="left:282.5px;top:200.0px;" width="19.0" height="20.0" viewBox="0 0 19 20"><path d="M7 18 H1.5 V1 H9 L13.5 5.5 V8 M9 1 V5.5 H13.5" fill="none" stroke="#555" stroke-width="1.2"/><path d="M8 14 C8 10 13 8.5 15.8 11.5 M16.2 8.3 V11.8 H12.8" fill="none" stroke="#1f9d55" stroke-width="1.4"/><path d="M17 14 C17 18 12 19.5 9.2 16.5 M8.8 19.7 V16.2 H12.2" fill="none" stroke="#1f9d55" stroke-width="1.4"/></svg>
<span class="t" style="left:309.8px;top:203.9px;font-size:13.6px;line-height:13.6px;color:#444;transform:scaleX(0.966);">Refresh</span>
<svg class="a" style="left:363.1px;top:209.2px;" width="9.2" height="4.6" viewBox="0 0 9.2 4.6"><path d="M0.5 0.3 L4.6 4.1 L8.7 0.3" fill="none" stroke="#333" stroke-width="1.3"/></svg>
<div class="a" style="left:379.9px;top:194.5px;width:1.0px;height:23.5px;background:#d6d6d6;"></div>
<svg class="a" style="left:396.0px;top:200.0px;" width="19.0" height="20.0" viewBox="0 0 19 20"><rect x="1" y="8" width="4.5" height="10.5" fill="#4a90e2" stroke="#1a66c0" stroke-width="1"/><path d="M5.5 18.5 V1 H10.5 V11" fill="none" stroke="#444" stroke-width="1.2"/><path d="M10.5 6.5 H14.5 V10" fill="none" stroke="#999" stroke-width="1.2"/><path d="M14 11.5 V19.5 M10 15.5 H18" stroke="#1f9d55" stroke-width="1.5"/></svg>
<svg class="a" style="left:434.5px;top:201.0px;" width="21.0" height="17.0" viewBox="0 0 21 17"><rect x="1.5" y="1.5" width="18" height="14" fill="none" stroke="#1a73c8" stroke-width="1.2"/><g fill="#1a73c8"><rect x="0" y="0" width="3" height="3"/><rect x="18" y="0" width="3" height="3"/><rect x="0" y="14" width="3" height="3"/><rect x="18" y="14" width="3" height="3"/></g></svg>
<span class="t" style="left:441.7px;top:205.2px;font-size:10px;line-height:10px;color:#1a73c8;">A</span>
<svg class="a" style="left:476.5px;top:200.0px;" width="19.0" height="20.0" viewBox="0 0 19 20"><path d="M6 4 H1.5 V18 H12.5 V14" fill="none" stroke="#444" stroke-width="1.2"/><path d="M6 11 V1 H10.5 V6" fill="none" stroke="#444" stroke-width="1.2"/><path d="M15.5 4 L18.5 7 L8.5 17.5 L4.5 18.8 L5.8 14.5 Z" fill="#fff" stroke="#1a73c8" stroke-width="1.3" stroke-linejoin="round"/></svg>
<svg class="a" style="left:500.2px;top:209.2px;" width="9.2" height="4.6" viewBox="0 0 9.2 4.6"><path d="M0.5 0.3 L4.6 4.1 L8.7 0.3" fill="none" stroke="#333" stroke-width="1.3"/></svg>
<div class="a" style="left:517.0px;top:194.5px;width:1.0px;height:23.5px;background:#d6d6d6;"></div>
<svg class="a" style="left:533.5px;top:200.0px;" width="20.0" height="20.0" viewBox="0 0 20 20"><rect x="1" y="8" width="4.3" height="10.5" fill="#bbb" stroke="#777" stroke-width="1"/><path d="M5.5 18.5 V1 H10 V9" fill="none" stroke="#444" stroke-width="1.2"/><path d="M10 4 H13.5 V6.5" fill="none" stroke="#1a73c8" stroke-width="1.6"/></svg>
<span class="t" style="left:548.5px;top:208.4px;font-size:10.5px;line-height:10.5px;color:#333;font-style:italic;font-family:'Liberation Serif',serif;">fx</span>
<span class="t" style="left:561.7px;top:203.9px;font-size:13.6px;line-height:13.6px;color:#444;transform:scaleX(1.016);">New visual calculation</span>
<svg class="a" style="left:704.9px;top:209.2px;" width="9.2" height="4.6" viewBox="0 0 9.2 4.6"><path d="M0.5 0.3 L4.6 4.1 L8.7 0.3" fill="none" stroke="#333" stroke-width="1.3"/></svg>
<svg class="a" style="left:730.5px;top:201.0px;" width="15.0" height="18.0" viewBox="0 0 15 18"><rect x="0.8" y="0.8" width="13.4" height="16.4" rx="1.5" fill="none" stroke="#333" stroke-width="1.3"/><rect x="3.3" y="3.2" width="8.4" height="3" fill="#333"/><g fill="#333"><rect x="3.3" y="8.2" width="2" height="2"/><rect x="6.5" y="8.2" width="2" height="2"/><rect x="9.7" y="8.2" width="2" height="2"/><rect x="3.3" y="11.2" width="2" height="2"/><rect x="6.5" y="11.2" width="2" height="2"/><rect x="9.7" y="11.2" width="2" height="2"/><rect x="3.3" y="14" width="2" height="2"/><rect x="6.5" y="14" width="2" height="2"/><rect x="9.7" y="14" width="2" height="2"/></g></svg>
<svg class="a" style="left:767.5px;top:199.5px;" width="19.0" height="20.0" viewBox="0 0 19 20"><rect x="4.8" y="4.8" width="13" height="14" rx="1.2" fill="#fff" stroke="#333" stroke-width="1.2"/><g fill="#333"><rect x="8" y="8.5" width="2" height="2"/><rect x="11" y="8.5" width="2" height="2"/><rect x="14" y="8.5" width="2" height="2"/><rect x="8" y="11.7" width="2" height="2"/><rect x="11" y="11.7" width="2" height="2"/><rect x="14" y="11.7" width="2" height="2"/><rect x="8" y="14.9" width="2" height="2"/><rect x="11" y="14.9" width="2" height="2"/><rect x="14" y="14.9" width="2" height="2"/></g><path d="M4 0.5 H9.5 L7 4.5 H10 L3 12.5 L5 6.5 H2 Z" fill="#f0932b" stroke="#d35400" stroke-width="0.6"/></svg>
<div class="a" style="left:801.9px;top:194.5px;width:1.0px;height:23.5px;background:#d6d6d6;"></div>
<svg class="a" style="left:819.0px;top:200.0px;" width="18.0" height="20.0" viewBox="0 0 18 20"><path d="M1.5 3.5 H8.5 M1.5 3.5 V18.5 H13.5 V12" fill="none" stroke="#a9cdee" stroke-width="1.2"/><path d="M9 6 L13 1.5 L17 5 L12 10.5 Z M8 9.5 L11.5 12.5" fill="none" stroke="#a9cdee" stroke-width="1.2"/></svg>
<span class="t" style="left:847.0px;top:203.9px;font-size:13.6px;line-height:13.6px;color:#b4b4b4;">Sensitivity</span>
<svg class="a" style="left:916.4px;top:209.2px;" width="9.2" height="4.6" viewBox="0 0 9.2 4.6"><path d="M0.5 0.3 L4.6 4.1 L8.7 0.3" fill="none" stroke="#b4b4b4" stroke-width="1.3"/></svg>
<div class="a" style="left:933.9px;top:194.5px;width:1.0px;height:23.5px;background:#d6d6d6;"></div>
<svg class="a" style="left:951.0px;top:200.0px;" width="19.0" height="20.0" viewBox="0 0 19 20"><rect x="1" y="8.5" width="8" height="9" fill="none" stroke="#333" stroke-width="1.2"/><path d="M6.5 8.5 V4.5 H13 L15 6.5 V9" fill="none" stroke="#333" stroke-width="1.2"/><path d="M14 19 V10 M10.5 13.2 L14 9.7 L17.5 13.2" fill="none" stroke="#1a73c8" stroke-width="1.5"/></svg>
<span class="t" style="left:979.0px;top:203.9px;font-size:13.6px;line-height:13.6px;color:#333;transform:scaleX(0.993);">Publish</span>
<div class="a" style="left:1038.7px;top:194.5px;width:1.0px;height:23.5px;background:#d6d6d6;"></div>
<svg class="a" style="left:1056.0px;top:199.5px;" width="18.0" height="19.0" viewBox="0 0 18 19"><rect x="1" y="6.5" width="15" height="12" fill="none" stroke="#555" stroke-width="1.1"/><path d="M1 10.3 H16 M1 14.2 H16" stroke="#555" stroke-width="1"/><rect x="3" y="11.8" width="4" height="1.2" fill="#555"/><path d="M12 0.5 L13.2 3.6 L16.3 4.8 L13.2 6 L12 9.1 L10.8 6 L7.7 4.8 L10.8 3.6 Z" fill="#fff" stroke="#1a73c8" stroke-width="1"/></svg>
<span class="t" style="left:1084.6px;top:203.9px;font-size:13.6px;line-height:13.6px;color:#333;transform:scaleX(1.020);">Prep data for AI</span>
<svg class="a" style="left:1204.5px;top:200.5px;" width="19.0" height="19.0" viewBox="0 0 24 24"><defs><linearGradient id="rbca" x1=".6" y1="0" x2=".3" y2="1"><stop offset="0" stop-color="#1f62d8"/><stop offset=".3" stop-color="#27a5e8"/><stop offset=".6" stop-color="#3fc77a"/><stop offset="1" stop-color="#f7d21e"/></linearGradient><linearGradient id="rbcb" x1=".6" y1="0" x2=".3" y2="1"><stop offset="0" stop-color="#a259ec"/><stop offset=".45" stop-color="#ec5aa8"/><stop offset=".8" stop-color="#f8853a"/><stop offset="1" stop-color="#ef4e3a"/></linearGradient></defs><path d="M9.6 2.6 H14.2 C16 2.6 16.6 3.8 16.1 5.4 L13 15.8 C12.5 17.4 11.4 18.3 9.8 18.3 H4.6 C2.5 18.3 1.4 16.8 2 14.6 L4.6 5.9 C5.2 3.8 6.8 2.6 9.6 2.6 Z" fill="url(#rbca)"/><path d="M14.4 21.4 H9.8 C8 21.4 7.4 20.2 7.9 18.6 L11 8.2 C11.5 6.6 12.6 5.7 14.2 5.7 H19.4 C21.5 5.7 22.6 7.2 22 9.4 L19.4 18.1 C18.8 20.2 17.2 21.4 14.4 21.4 Z" fill="url(#rbcb)"/><path d="M13.6 6.4 L10.4 17.6" stroke="#fff" stroke-width="1.5" stroke-linecap="round" opacity=".9"/></svg>
<span class="t" style="left:1233.3px;top:203.9px;font-size:13.6px;line-height:13.6px;color:#333;transform:scaleX(1.063);">Copilot</span>
<div class="a" style="left:1294.1px;top:194.5px;width:1.0px;height:23.5px;background:#d6d6d6;"></div>
<div class="a" style="left:1310.0px;top:208.2px;width:3.3px;height:3.3px;background:#333;border-radius:0.8px;"></div>
<div class="a" style="left:1317.3px;top:208.2px;width:3.3px;height:3.3px;background:#333;border-radius:0.8px;"></div>
<div class="a" style="left:1324.6px;top:208.2px;width:3.3px;height:3.3px;background:#333;border-radius:0.8px;"></div>
<div class="a" style="left:1343.1px;top:194.5px;width:1.0px;height:23.5px;background:#d6d6d6;"></div>
<svg class="a" style="left:1894.2px;top:212.7px;" width="9.2" height="4.6" viewBox="0 0 9.2 4.6"><path d="M0.5 0.3 L4.6 4.1 L8.7 0.3" fill="none" stroke="#222" stroke-width="1.6"/></svg>
<div class="a" style="left:0.0px;top:0.0px;width:3844.0px;height:1198.0px;border:2px solid #f00;"></div>
</body></html>
